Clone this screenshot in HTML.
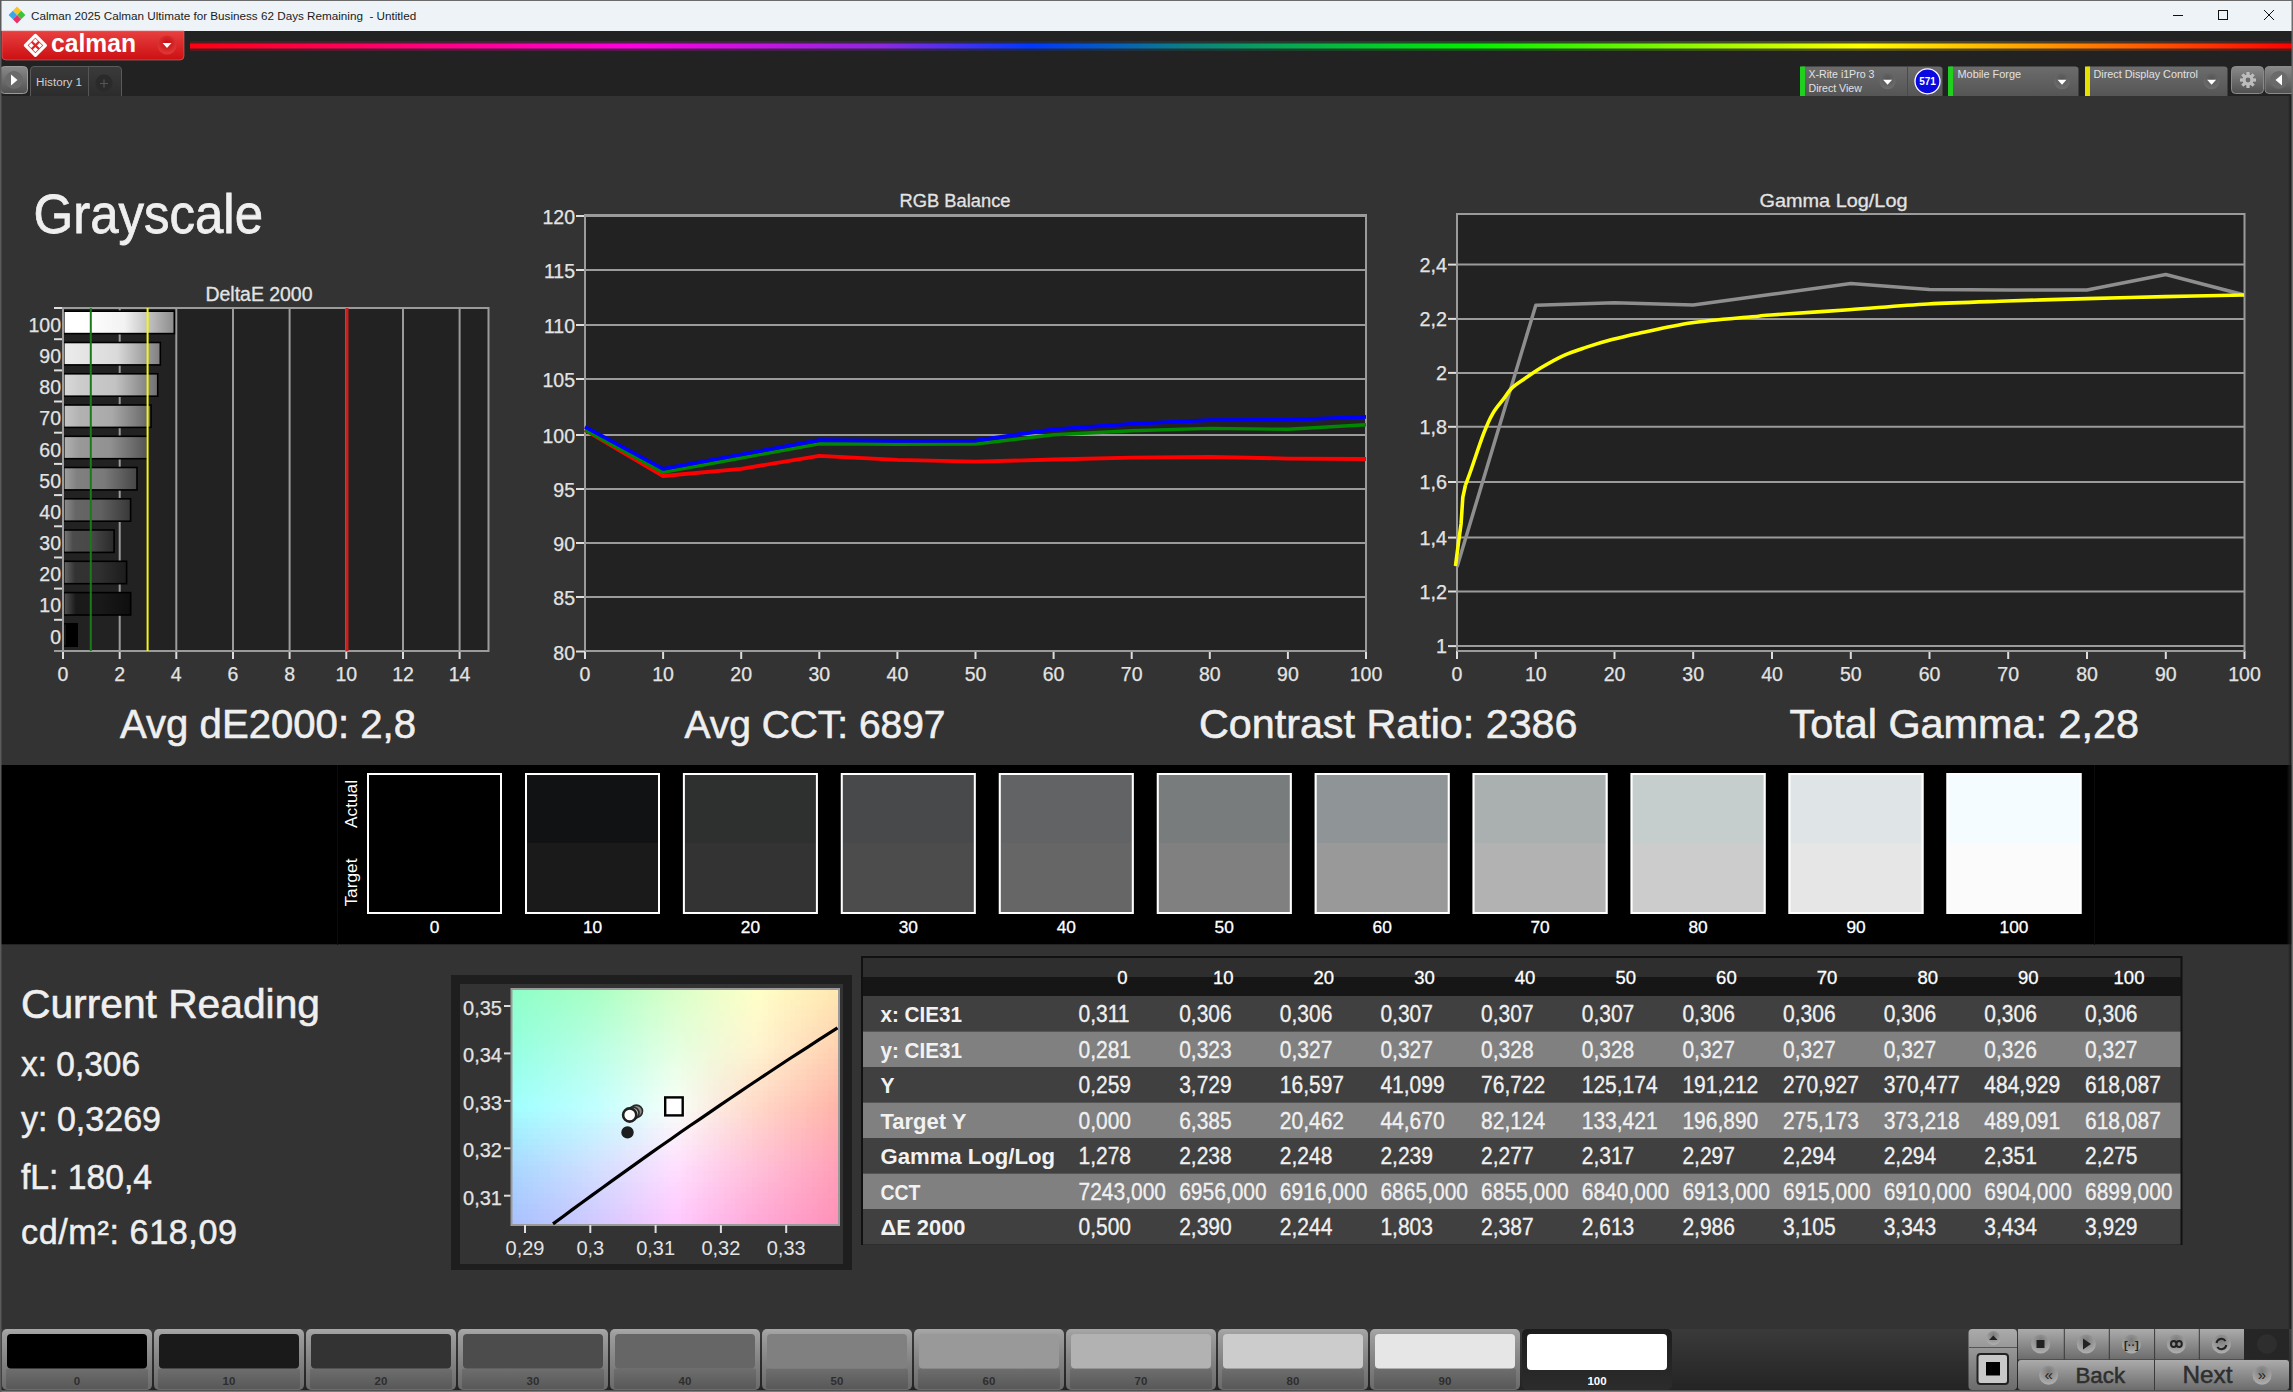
<!DOCTYPE html>
<html><head><meta charset="utf-8"><title>Calman Grayscale</title><style>html,body{margin:0;padding:0;background:#333;}body{width:2293px;height:1392px;overflow:hidden;}svg{display:block;font-family:"Liberation Sans",sans-serif;}</style></head><body><svg width="2293" height="1392" viewBox="0 0 2293 1392"><defs><linearGradient id="gRed" x1="0" y1="0" x2="0" y2="1"><stop offset="0" stop-color="#e8403f"/><stop offset="1" stop-color="#cc0f12"/></linearGradient><radialGradient id="gDrop" cx="0.5" cy="0.4" r="0.6"><stop offset="0" stop-color="#c40c10"/><stop offset="1" stop-color="#e03a3a"/></radialGradient><linearGradient id="gRainbow" gradientUnits="userSpaceOnUse" x1="190" y1="0" x2="2292" y2="0"><stop offset="0" stop-color="#ff0010"/><stop offset="0.21" stop-color="#ff00e0"/><stop offset="0.33" stop-color="#8c28e0"/><stop offset="0.40" stop-color="#0038ff"/><stop offset="0.475" stop-color="#0c8080"/><stop offset="0.61" stop-color="#00f000"/><stop offset="0.795" stop-color="#ffff00"/><stop offset="0.88" stop-color="#ff9a00"/><stop offset="1" stop-color="#ff0000"/></linearGradient><linearGradient id="gBtn" x1="0" y1="0" x2="0" y2="1"><stop offset="0" stop-color="#8a8a8a"/><stop offset="1" stop-color="#505050"/></linearGradient><linearGradient id="gTab" x1="0" y1="0" x2="0" y2="1"><stop offset="0" stop-color="#3a3a3a"/><stop offset="1" stop-color="#2c2c2c"/></linearGradient><linearGradient id="gWid" x1="0" y1="0" x2="0" y2="1"><stop offset="0" stop-color="#6c6c6c"/><stop offset="1" stop-color="#555555"/></linearGradient><radialGradient id="gDD" cx="0.5" cy="0.35" r="0.65"><stop offset="0" stop-color="#555"/><stop offset="1" stop-color="#6e6e6e"/></radialGradient><linearGradient id="gBar100" x1="0" y1="0" x2="1" y2="0"><stop offset="0" stop-color="rgb(255,255,255)"/><stop offset="0.18" stop-color="rgb(255,255,255)"/><stop offset="0.55" stop-color="rgb(242,242,242)"/><stop offset="1" stop-color="rgb(140,140,140)"/></linearGradient><linearGradient id="gBar90" x1="0" y1="0" x2="1" y2="0"><stop offset="0" stop-color="rgb(236,236,236)"/><stop offset="0.18" stop-color="rgb(230,230,230)"/><stop offset="0.55" stop-color="rgb(218,218,218)"/><stop offset="1" stop-color="rgb(127,127,127)"/></linearGradient><linearGradient id="gBar80" x1="0" y1="0" x2="1" y2="0"><stop offset="0" stop-color="rgb(217,217,217)"/><stop offset="0.18" stop-color="rgb(204,204,204)"/><stop offset="0.55" stop-color="rgb(194,194,194)"/><stop offset="1" stop-color="rgb(112,112,112)"/></linearGradient><linearGradient id="gBar70" x1="0" y1="0" x2="1" y2="0"><stop offset="0" stop-color="rgb(197,197,197)"/><stop offset="0.18" stop-color="rgb(178,178,178)"/><stop offset="0.55" stop-color="rgb(169,169,169)"/><stop offset="1" stop-color="rgb(98,98,98)"/></linearGradient><linearGradient id="gBar60" x1="0" y1="0" x2="1" y2="0"><stop offset="0" stop-color="rgb(178,178,178)"/><stop offset="0.18" stop-color="rgb(153,153,153)"/><stop offset="0.55" stop-color="rgb(145,145,145)"/><stop offset="1" stop-color="rgb(84,84,84)"/></linearGradient><linearGradient id="gBar50" x1="0" y1="0" x2="1" y2="0"><stop offset="0" stop-color="rgb(160,160,160)"/><stop offset="0.18" stop-color="rgb(128,128,128)"/><stop offset="0.55" stop-color="rgb(122,122,122)"/><stop offset="1" stop-color="rgb(70,70,70)"/></linearGradient><linearGradient id="gBar40" x1="0" y1="0" x2="1" y2="0"><stop offset="0" stop-color="rgb(140,140,140)"/><stop offset="0.18" stop-color="rgb(102,102,102)"/><stop offset="0.55" stop-color="rgb(97,97,97)"/><stop offset="1" stop-color="rgb(56,56,56)"/></linearGradient><linearGradient id="gBar30" x1="0" y1="0" x2="1" y2="0"><stop offset="0" stop-color="rgb(121,121,121)"/><stop offset="0.18" stop-color="rgb(76,76,76)"/><stop offset="0.55" stop-color="rgb(72,72,72)"/><stop offset="1" stop-color="rgb(42,42,42)"/></linearGradient><linearGradient id="gBar20" x1="0" y1="0" x2="1" y2="0"><stop offset="0" stop-color="rgb(102,102,102)"/><stop offset="0.18" stop-color="rgb(51,51,51)"/><stop offset="0.55" stop-color="rgb(48,48,48)"/><stop offset="1" stop-color="rgb(28,28,28)"/></linearGradient><linearGradient id="gBar10" x1="0" y1="0" x2="1" y2="0"><stop offset="0" stop-color="rgb(83,83,83)"/><stop offset="0.18" stop-color="rgb(26,26,26)"/><stop offset="0.55" stop-color="rgb(25,25,25)"/><stop offset="1" stop-color="rgb(14,14,14)"/></linearGradient><linearGradient id="gBar0" x1="0" y1="0" x2="1" y2="0"><stop offset="0" stop-color="rgb(64,64,64)"/><stop offset="0.18" stop-color="rgb(0,0,0)"/><stop offset="0.55" stop-color="rgb(0,0,0)"/><stop offset="1" stop-color="rgb(0,0,0)"/></linearGradient><linearGradient id="gStrip" x1="0" y1="0" x2="0" y2="1"><stop offset="0" stop-color="#3a3a3a"/><stop offset="1" stop-color="#232323"/></linearGradient><linearGradient id="gPB" x1="0" y1="0" x2="0" y2="1"><stop offset="0" stop-color="#a8a8a8"/><stop offset="0.1" stop-color="#9c9c9c"/><stop offset="0.62" stop-color="#7e7e7e"/><stop offset="1" stop-color="#6a6a6a"/></linearGradient><linearGradient id="gPBL" x1="0" y1="0" x2="0" y2="1"><stop offset="0" stop-color="#6e6e6e"/><stop offset="1" stop-color="#585858"/></linearGradient><linearGradient id="gPBsel" x1="0" y1="0" x2="0" y2="1"><stop offset="0" stop-color="#1c1c1c"/><stop offset="1" stop-color="#2c2c2c"/></linearGradient><linearGradient id="gCtl" x1="0" y1="0" x2="0" y2="1"><stop offset="0" stop-color="#ababab"/><stop offset="1" stop-color="#6c6c6c"/></linearGradient><radialGradient id="gCirc" cx="0.5" cy="0.3" r="0.7"><stop offset="0" stop-color="#7a7a7a"/><stop offset="1" stop-color="#b0b0b0"/></radialGradient><linearGradient id="gRF" x1="0" y1="0" x2="1" y2="0"><stop offset="0" stop-color="#333" stop-opacity="0"/><stop offset="1" stop-color="#111"/></linearGradient></defs><rect x="0" y="0" width="2293" height="31" fill="#eef3f7"/>
<rect x="0" y="0" width="2293" height="1" fill="#6b6b6b"/>
<path d="M17.0 6.6000000000000005 L21.2 10.8 L17.0 15.0 L12.8 10.8 Z" fill="#f7c52b"/>
<path d="M21.2 10.8 L25.4 15.0 L21.2 19.2 L17.0 15.0 Z" fill="#3ec43a"/>
<path d="M12.8 10.8 L17.0 15.0 L12.8 19.2 L8.600000000000001 15.0 Z" fill="#3aa6e8"/>
<path d="M17.0 15.0 L21.2 19.2 L17.0 23.4 L12.8 19.2 Z" fill="#e8306a"/>
<text x="31.0" y="19.6" font-size="11.7" fill="#1b1b1b" text-anchor="start" font-weight="400" >Calman 2025 Calman Ultimate for Business 62 Days Remaining&#160;&#160;- Untitled</text>
<line x1="2173" y1="15.5" x2="2183" y2="15.5" stroke="#111" stroke-width="1"/>
<rect x="2218.5" y="10.5" width="9" height="9" fill="none" stroke="#111" stroke-width="1"/>
<path d="M2264 10 L2274 20 M2274 10 L2264 20" stroke="#111" stroke-width="1"/>
<rect x="0" y="31" width="2293" height="65" fill="#222222"/>
<path d="M2 31 H184 V56 Q184 60 180 60 H6 Q2 60 2 56 Z" fill="url(#gRed)" stroke="#e86a6a" stroke-width="0.6"/>
<path d="M35.4 35.4 L45.4 45.4 L35.4 55.4 L25.4 45.4 Z" fill="none" stroke="#fff" stroke-width="3.2" stroke-linejoin="round"/>
<path d="M35.4 38.599999999999994 L38.0 41.199999999999996 L35.4 43.8 L32.8 41.199999999999996 Z" fill="#fff"/>
<path d="M31.2 42.8 L33.8 45.4 L31.2 48.0 L28.599999999999998 45.4 Z" fill="#fff"/>
<path d="M39.6 42.8 L42.2 45.4 L39.6 48.0 L37.0 45.4 Z" fill="#fff"/>
<path d="M35.4 47.0 L38.0 49.6 L35.4 52.2 L32.8 49.6 Z" fill="#fff"/>
<text x="51.0" y="51.7" font-size="25" fill="#ffffff" text-anchor="start" font-weight="700" textLength="85" lengthAdjust="spacingAndGlyphs">calman</text>
<circle cx="167" cy="45" r="9.5" fill="url(#gDrop)"/>
<path d="M162.5 43 L171.5 43 L167 48 Z" fill="#fff"/>
<rect x="190" y="41" width="2102" height="10" fill="url(#gRainbow)" opacity="0.22"/>
<rect x="190" y="43.5" width="2102" height="5" fill="url(#gRainbow)"/>
<rect x="0.5" y="66.5" width="27" height="27" rx="4" fill="url(#gBtn)" stroke="#9a9a9a" stroke-width="1"/>
<circle cx="14" cy="80" r="9" fill="#6a6a6a"/>
<path d="M11 74.5 L17.5 80 L11 85.5 Z" fill="#fff"/>
<path d="M30.5 96 V70 Q30.5 66.5 34 66.5 H118 Q121.5 66.5 121.5 70 V96" fill="url(#gTab)" stroke="#5a5a5a" stroke-width="1"/>
<line x1="88.5" y1="67" x2="88.5" y2="96" stroke="#555" stroke-width="1"/>
<text x="36.0" y="86.0" font-size="11.7" fill="#cfcfcf" text-anchor="start" font-weight="400" >History 1</text>
<circle cx="104" cy="83" r="8.5" fill="#2a2a2a"/>
<path d="M100 83.5 H108 M104 79.5 V87.5" stroke="#555" stroke-width="1.2"/>
<path d="M1800 96 V69 Q1800 66.5 1803 66.5 H1939 Q1942.5 66.5 1942.5 69 V96 Z" fill="url(#gWid)"/>
<rect x="1800" y="66.5" width="5" height="29.5" fill="#1fd01f"/>
<line x1="1907.5" y1="67" x2="1907.5" y2="96" stroke="#4a4a4a" stroke-width="1"/>
<text x="1808.5" y="78.0" font-size="10.6" fill="#e2e2e2" text-anchor="start" font-weight="400" >X-Rite i1Pro 3</text>
<text x="1808.5" y="92.3" font-size="10.6" fill="#e2e2e2" text-anchor="start" font-weight="400" >Direct View</text>
<circle cx="1887.6" cy="81.3" r="8" fill="url(#gDD)"/><path d="M1883.1 79.8 L1892.1 79.8 L1887.6 84.8 Z" fill="#fff"/>
<circle cx="1927.5" cy="81.3" r="12.5" fill="#0a0ae0" stroke="#fff" stroke-width="1.3"/>
<text x="1927.5" y="85.0" font-size="10" fill="#fff" text-anchor="middle" font-weight="700" >571</text>
<path d="M1948 96 V69 Q1948 66.5 1951 66.5 H2075 Q2078.5 66.5 2078.5 69 V96 Z" fill="url(#gWid)"/>
<rect x="1948" y="66.5" width="5" height="29.5" fill="#1fd01f"/>
<text x="1957.5" y="78.0" font-size="10.9" fill="#e2e2e2" text-anchor="start" font-weight="400" >Mobile Forge</text>
<circle cx="2062" cy="81.3" r="8" fill="url(#gDD)"/><path d="M2057.5 79.8 L2066.5 79.8 L2062 84.8 Z" fill="#fff"/>
<path d="M2085 96 V69 Q2085 66.5 2088 66.5 H2224 Q2227.5 66.5 2227.5 69 V96 Z" fill="url(#gWid)"/>
<rect x="2085" y="66.5" width="5" height="29.5" fill="#e6e000"/>
<text x="2093.5" y="78.0" font-size="10.8" fill="#e2e2e2" text-anchor="start" font-weight="400" >Direct Display Control</text>
<circle cx="2211.6" cy="81.3" r="8" fill="url(#gDD)"/><path d="M2207.1 79.8 L2216.1 79.8 L2211.6 84.8 Z" fill="#fff"/>
<rect x="2231.5" y="66.5" width="32" height="27" rx="4" fill="url(#gBtn)" stroke="#8a8a8a" stroke-width="1"/>
<g fill="#bdbdbd"><rect x="2246.4" y="72" width="3.2" height="4" transform="rotate(0 2248 80)"/><rect x="2246.4" y="72" width="3.2" height="4" transform="rotate(45 2248 80)"/><rect x="2246.4" y="72" width="3.2" height="4" transform="rotate(90 2248 80)"/><rect x="2246.4" y="72" width="3.2" height="4" transform="rotate(135 2248 80)"/><rect x="2246.4" y="72" width="3.2" height="4" transform="rotate(180 2248 80)"/><rect x="2246.4" y="72" width="3.2" height="4" transform="rotate(225 2248 80)"/><rect x="2246.4" y="72" width="3.2" height="4" transform="rotate(270 2248 80)"/><rect x="2246.4" y="72" width="3.2" height="4" transform="rotate(315 2248 80)"/><circle cx="2248" cy="80" r="5.5"/></g><circle cx="2248" cy="80" r="2.4" fill="#6a6a6a"/>
<rect x="2265" y="66.5" width="30" height="27" rx="4" fill="url(#gBtn)" stroke="#8a8a8a" stroke-width="1"/>
<circle cx="2279" cy="80" r="9" fill="#6a6a6a"/>
<path d="M2282 74.5 L2275.5 80 L2282 85.5 Z" fill="#fff"/>
<rect x="0" y="97" width="2293" height="1232" fill="#333333"/>
<text transform="translate(33.50 232.50) scale(1 1.08)" x="0" y="0" font-size="51" fill="#efefef" text-anchor="start" font-weight="400" stroke="#efefef" stroke-width="0.7" >Grayscale</text>
<text x="205.5" y="300.6" font-size="19.4" fill="#e3e3e3" text-anchor="start" font-weight="400" stroke="#e3e3e3" stroke-width="0.3" textLength="107" lengthAdjust="spacingAndGlyphs">DeltaE 2000</text>
<rect x="63" y="308" width="425.5" height="343" fill="#222222"/>
<line x1="119.7" y1="308" x2="119.7" y2="651" stroke="#9b9b9b" stroke-width="2"/>
<line x1="176.3" y1="308" x2="176.3" y2="651" stroke="#9b9b9b" stroke-width="2"/>
<line x1="233.0" y1="308" x2="233.0" y2="651" stroke="#9b9b9b" stroke-width="2"/>
<line x1="289.6" y1="308" x2="289.6" y2="651" stroke="#9b9b9b" stroke-width="2"/>
<line x1="346.3" y1="308" x2="346.3" y2="651" stroke="#9b9b9b" stroke-width="2"/>
<line x1="403.0" y1="308" x2="403.0" y2="651" stroke="#9b9b9b" stroke-width="2"/>
<line x1="459.6" y1="308" x2="459.6" y2="651" stroke="#9b9b9b" stroke-width="2"/>
<line x1="63.0" y1="651" x2="63.0" y2="659" stroke="#dedede" stroke-width="2"/>
<text x="63.0" y="680.8" font-size="19.5" fill="#e3e3e3" text-anchor="middle" font-weight="400" stroke="#e3e3e3" stroke-width="0.25" >0</text>
<line x1="119.7" y1="651" x2="119.7" y2="659" stroke="#dedede" stroke-width="2"/>
<text x="119.7" y="680.8" font-size="19.5" fill="#e3e3e3" text-anchor="middle" font-weight="400" stroke="#e3e3e3" stroke-width="0.25" >2</text>
<line x1="176.3" y1="651" x2="176.3" y2="659" stroke="#dedede" stroke-width="2"/>
<text x="176.3" y="680.8" font-size="19.5" fill="#e3e3e3" text-anchor="middle" font-weight="400" stroke="#e3e3e3" stroke-width="0.25" >4</text>
<line x1="233.0" y1="651" x2="233.0" y2="659" stroke="#dedede" stroke-width="2"/>
<text x="233.0" y="680.8" font-size="19.5" fill="#e3e3e3" text-anchor="middle" font-weight="400" stroke="#e3e3e3" stroke-width="0.25" >6</text>
<line x1="289.6" y1="651" x2="289.6" y2="659" stroke="#dedede" stroke-width="2"/>
<text x="289.6" y="680.8" font-size="19.5" fill="#e3e3e3" text-anchor="middle" font-weight="400" stroke="#e3e3e3" stroke-width="0.25" >8</text>
<line x1="346.3" y1="651" x2="346.3" y2="659" stroke="#dedede" stroke-width="2"/>
<text x="346.3" y="680.8" font-size="19.5" fill="#e3e3e3" text-anchor="middle" font-weight="400" stroke="#e3e3e3" stroke-width="0.25" >10</text>
<line x1="403.0" y1="651" x2="403.0" y2="659" stroke="#dedede" stroke-width="2"/>
<text x="403.0" y="680.8" font-size="19.5" fill="#e3e3e3" text-anchor="middle" font-weight="400" stroke="#e3e3e3" stroke-width="0.25" >12</text>
<line x1="459.6" y1="651" x2="459.6" y2="659" stroke="#dedede" stroke-width="2"/>
<text x="459.6" y="680.8" font-size="19.5" fill="#e3e3e3" text-anchor="middle" font-weight="400" stroke="#e3e3e3" stroke-width="0.25" >14</text>
<line x1="54" y1="308.0" x2="63" y2="308.0" stroke="#dedede" stroke-width="2"/>
<line x1="54" y1="339.2" x2="63" y2="339.2" stroke="#dedede" stroke-width="2"/>
<line x1="54" y1="370.4" x2="63" y2="370.4" stroke="#dedede" stroke-width="2"/>
<line x1="54" y1="401.5" x2="63" y2="401.5" stroke="#dedede" stroke-width="2"/>
<line x1="54" y1="432.7" x2="63" y2="432.7" stroke="#dedede" stroke-width="2"/>
<line x1="54" y1="463.9" x2="63" y2="463.9" stroke="#dedede" stroke-width="2"/>
<line x1="54" y1="495.1" x2="63" y2="495.1" stroke="#dedede" stroke-width="2"/>
<line x1="54" y1="526.3" x2="63" y2="526.3" stroke="#dedede" stroke-width="2"/>
<line x1="54" y1="557.5" x2="63" y2="557.5" stroke="#dedede" stroke-width="2"/>
<line x1="54" y1="588.6" x2="63" y2="588.6" stroke="#dedede" stroke-width="2"/>
<line x1="54" y1="619.8" x2="63" y2="619.8" stroke="#dedede" stroke-width="2"/>
<line x1="54" y1="651.0" x2="63" y2="651.0" stroke="#dedede" stroke-width="2"/>
<text x="61.0" y="331.8" font-size="19.5" fill="#e3e3e3" text-anchor="end" font-weight="400" stroke="#e3e3e3" stroke-width="0.25" >100</text>
<rect x="63.8" y="311.2" width="110.5" height="22.4" fill="url(#gBar100)" stroke="#000" stroke-width="1.6"/>
<text x="61.0" y="363.0" font-size="19.5" fill="#e3e3e3" text-anchor="end" font-weight="400" stroke="#e3e3e3" stroke-width="0.25" >90</text>
<rect x="63.8" y="342.5" width="96.5" height="22.4" fill="url(#gBar90)" stroke="#000" stroke-width="1.6"/>
<text x="61.0" y="394.2" font-size="19.5" fill="#e3e3e3" text-anchor="end" font-weight="400" stroke="#e3e3e3" stroke-width="0.25" >80</text>
<rect x="63.8" y="373.8" width="93.9" height="22.4" fill="url(#gBar80)" stroke="#000" stroke-width="1.6"/>
<text x="61.0" y="425.3" font-size="19.5" fill="#e3e3e3" text-anchor="end" font-weight="400" stroke="#e3e3e3" stroke-width="0.25" >70</text>
<rect x="63.8" y="405.0" width="87.2" height="22.4" fill="url(#gBar70)" stroke="#000" stroke-width="1.6"/>
<text x="61.0" y="456.5" font-size="19.5" fill="#e3e3e3" text-anchor="end" font-weight="400" stroke="#e3e3e3" stroke-width="0.25" >60</text>
<rect x="63.8" y="436.3" width="83.8" height="22.4" fill="url(#gBar60)" stroke="#000" stroke-width="1.6"/>
<text x="61.0" y="487.7" font-size="19.5" fill="#e3e3e3" text-anchor="end" font-weight="400" stroke="#e3e3e3" stroke-width="0.25" >50</text>
<rect x="63.8" y="467.5" width="73.2" height="22.4" fill="url(#gBar50)" stroke="#000" stroke-width="1.6"/>
<text x="61.0" y="518.9" font-size="19.5" fill="#e3e3e3" text-anchor="end" font-weight="400" stroke="#e3e3e3" stroke-width="0.25" >40</text>
<rect x="63.8" y="498.8" width="66.8" height="22.4" fill="url(#gBar40)" stroke="#000" stroke-width="1.6"/>
<text x="61.0" y="550.1" font-size="19.5" fill="#e3e3e3" text-anchor="end" font-weight="400" stroke="#e3e3e3" stroke-width="0.25" >30</text>
<rect x="63.8" y="530.0" width="50.3" height="22.4" fill="url(#gBar30)" stroke="#000" stroke-width="1.6"/>
<text x="61.0" y="581.2" font-size="19.5" fill="#e3e3e3" text-anchor="end" font-weight="400" stroke="#e3e3e3" stroke-width="0.25" >20</text>
<rect x="63.8" y="561.3" width="62.8" height="22.4" fill="url(#gBar20)" stroke="#000" stroke-width="1.6"/>
<text x="61.0" y="612.4" font-size="19.5" fill="#e3e3e3" text-anchor="end" font-weight="400" stroke="#e3e3e3" stroke-width="0.25" >10</text>
<rect x="63.8" y="592.6" width="66.9" height="22.4" fill="url(#gBar10)" stroke="#000" stroke-width="1.6"/>
<text x="61.0" y="643.6" font-size="19.5" fill="#e3e3e3" text-anchor="end" font-weight="400" stroke="#e3e3e3" stroke-width="0.25" >0</text>
<rect x="63.8" y="623.8" width="13.4" height="22.4" fill="url(#gBar0)" stroke="#000" stroke-width="1.6"/>
<path d="M63 651 V308 H488.5 V651 H54" fill="none" stroke="#9b9b9b" stroke-width="2"/>
<line x1="90.8" y1="308" x2="90.8" y2="651" stroke="#1a7a1a" stroke-width="2"/>
<line x1="147.6" y1="308" x2="147.6" y2="651" stroke="#f4f41c" stroke-width="2"/>
<line x1="347" y1="308" x2="347" y2="651" stroke="#cc1f1f" stroke-width="3"/>
<text x="899.5" y="206.8" font-size="18.7" fill="#e3e3e3" text-anchor="start" font-weight="400" stroke="#e3e3e3" stroke-width="0.3" textLength="111" lengthAdjust="spacingAndGlyphs">RGB Balance</text>
<rect x="585" y="215" width="781" height="436" fill="#222222"/>
<line x1="585" y1="597.0" x2="1366" y2="597.0" stroke="#9b9b9b" stroke-width="2"/>
<line x1="585" y1="543.0" x2="1366" y2="543.0" stroke="#9b9b9b" stroke-width="2"/>
<line x1="585" y1="489.0" x2="1366" y2="489.0" stroke="#9b9b9b" stroke-width="2"/>
<line x1="585" y1="435.0" x2="1366" y2="435.0" stroke="#9b9b9b" stroke-width="2"/>
<line x1="585" y1="379.0" x2="1366" y2="379.0" stroke="#9b9b9b" stroke-width="2"/>
<line x1="585" y1="325.0" x2="1366" y2="325.0" stroke="#9b9b9b" stroke-width="2"/>
<line x1="585" y1="270.0" x2="1366" y2="270.0" stroke="#9b9b9b" stroke-width="2"/>
<line x1="585" y1="216.0" x2="1366" y2="216.0" stroke="#9b9b9b" stroke-width="2"/>
<line x1="576" y1="651.5" x2="585" y2="651.5" stroke="#dedede" stroke-width="2"/>
<text x="575.0" y="659.5" font-size="19.5" fill="#e3e3e3" text-anchor="end" font-weight="400" stroke="#e3e3e3" stroke-width="0.25" >80</text>
<line x1="576" y1="597.0" x2="585" y2="597.0" stroke="#dedede" stroke-width="2"/>
<text x="575.0" y="605.0" font-size="19.5" fill="#e3e3e3" text-anchor="end" font-weight="400" stroke="#e3e3e3" stroke-width="0.25" >85</text>
<line x1="576" y1="543.0" x2="585" y2="543.0" stroke="#dedede" stroke-width="2"/>
<text x="575.0" y="551.0" font-size="19.5" fill="#e3e3e3" text-anchor="end" font-weight="400" stroke="#e3e3e3" stroke-width="0.25" >90</text>
<line x1="576" y1="489.0" x2="585" y2="489.0" stroke="#dedede" stroke-width="2"/>
<text x="575.0" y="497.0" font-size="19.5" fill="#e3e3e3" text-anchor="end" font-weight="400" stroke="#e3e3e3" stroke-width="0.25" >95</text>
<line x1="576" y1="435.0" x2="585" y2="435.0" stroke="#dedede" stroke-width="2"/>
<text x="575.0" y="443.0" font-size="19.5" fill="#e3e3e3" text-anchor="end" font-weight="400" stroke="#e3e3e3" stroke-width="0.25" >100</text>
<line x1="576" y1="379.0" x2="585" y2="379.0" stroke="#dedede" stroke-width="2"/>
<text x="575.0" y="387.0" font-size="19.5" fill="#e3e3e3" text-anchor="end" font-weight="400" stroke="#e3e3e3" stroke-width="0.25" >105</text>
<line x1="576" y1="325.0" x2="585" y2="325.0" stroke="#dedede" stroke-width="2"/>
<text x="575.0" y="333.0" font-size="19.5" fill="#e3e3e3" text-anchor="end" font-weight="400" stroke="#e3e3e3" stroke-width="0.25" >110</text>
<line x1="576" y1="270.0" x2="585" y2="270.0" stroke="#dedede" stroke-width="2"/>
<text x="575.0" y="278.0" font-size="19.5" fill="#e3e3e3" text-anchor="end" font-weight="400" stroke="#e3e3e3" stroke-width="0.25" >115</text>
<line x1="576" y1="216.0" x2="585" y2="216.0" stroke="#dedede" stroke-width="2"/>
<text x="575.0" y="224.0" font-size="19.5" fill="#e3e3e3" text-anchor="end" font-weight="400" stroke="#e3e3e3" stroke-width="0.25" >120</text>
<line x1="585.0" y1="651" x2="585.0" y2="659" stroke="#dedede" stroke-width="2"/>
<text x="585.0" y="680.8" font-size="19.5" fill="#e3e3e3" text-anchor="middle" font-weight="400" stroke="#e3e3e3" stroke-width="0.25" >0</text>
<line x1="663.1" y1="651" x2="663.1" y2="659" stroke="#dedede" stroke-width="2"/>
<text x="663.1" y="680.8" font-size="19.5" fill="#e3e3e3" text-anchor="middle" font-weight="400" stroke="#e3e3e3" stroke-width="0.25" >10</text>
<line x1="741.2" y1="651" x2="741.2" y2="659" stroke="#dedede" stroke-width="2"/>
<text x="741.2" y="680.8" font-size="19.5" fill="#e3e3e3" text-anchor="middle" font-weight="400" stroke="#e3e3e3" stroke-width="0.25" >20</text>
<line x1="819.3" y1="651" x2="819.3" y2="659" stroke="#dedede" stroke-width="2"/>
<text x="819.3" y="680.8" font-size="19.5" fill="#e3e3e3" text-anchor="middle" font-weight="400" stroke="#e3e3e3" stroke-width="0.25" >30</text>
<line x1="897.4" y1="651" x2="897.4" y2="659" stroke="#dedede" stroke-width="2"/>
<text x="897.4" y="680.8" font-size="19.5" fill="#e3e3e3" text-anchor="middle" font-weight="400" stroke="#e3e3e3" stroke-width="0.25" >40</text>
<line x1="975.5" y1="651" x2="975.5" y2="659" stroke="#dedede" stroke-width="2"/>
<text x="975.5" y="680.8" font-size="19.5" fill="#e3e3e3" text-anchor="middle" font-weight="400" stroke="#e3e3e3" stroke-width="0.25" >50</text>
<line x1="1053.6" y1="651" x2="1053.6" y2="659" stroke="#dedede" stroke-width="2"/>
<text x="1053.6" y="680.8" font-size="19.5" fill="#e3e3e3" text-anchor="middle" font-weight="400" stroke="#e3e3e3" stroke-width="0.25" >60</text>
<line x1="1131.7" y1="651" x2="1131.7" y2="659" stroke="#dedede" stroke-width="2"/>
<text x="1131.7" y="680.8" font-size="19.5" fill="#e3e3e3" text-anchor="middle" font-weight="400" stroke="#e3e3e3" stroke-width="0.25" >70</text>
<line x1="1209.8" y1="651" x2="1209.8" y2="659" stroke="#dedede" stroke-width="2"/>
<text x="1209.8" y="680.8" font-size="19.5" fill="#e3e3e3" text-anchor="middle" font-weight="400" stroke="#e3e3e3" stroke-width="0.25" >80</text>
<line x1="1287.9" y1="651" x2="1287.9" y2="659" stroke="#dedede" stroke-width="2"/>
<text x="1287.9" y="680.8" font-size="19.5" fill="#e3e3e3" text-anchor="middle" font-weight="400" stroke="#e3e3e3" stroke-width="0.25" >90</text>
<line x1="1366.0" y1="651" x2="1366.0" y2="659" stroke="#dedede" stroke-width="2"/>
<text x="1366.0" y="680.8" font-size="19.5" fill="#e3e3e3" text-anchor="middle" font-weight="400" stroke="#e3e3e3" stroke-width="0.25" >100</text>
<path d="M585 651 V215 H1366 V651 H585" fill="none" stroke="#9b9b9b" stroke-width="2"/>
<polyline points="585.0,430.0 663.1,476.0 741.2,468.8 819.3,455.8 897.4,459.9 975.5,461.7 1053.6,459.5 1131.7,457.7 1209.8,456.8 1287.9,458.6 1366.0,459.0" fill="none" stroke="#ff0000" stroke-width="3.8" stroke-linejoin="round"/>
<polyline points="585.0,430.0 663.1,472.4 741.2,458.0 819.3,443.8 897.4,444.3 975.5,444.0 1053.6,434.8 1131.7,430.8 1209.8,428.4 1287.9,429.3 1366.0,424.7" fill="none" stroke="#008800" stroke-width="3.4" stroke-linejoin="round"/>
<polyline points="585.0,426.8 663.1,468.8 741.2,454.5 819.3,440.2 897.4,440.8 975.5,440.7 1053.6,429.3 1131.7,423.8 1209.8,420.1 1287.9,419.8 1366.0,416.8" fill="none" stroke="#0000ff" stroke-width="3.8" stroke-linejoin="round"/>
<text x="1759.5" y="206.8" font-size="19" fill="#e3e3e3" text-anchor="start" font-weight="400" stroke="#e3e3e3" stroke-width="0.3" textLength="148" lengthAdjust="spacingAndGlyphs">Gamma Log/Log</text>
<rect x="1457" y="214" width="787.5" height="437" fill="#222222"/>
<line x1="1457" y1="646.1" x2="2244.5" y2="646.1" stroke="#9b9b9b" stroke-width="2"/>
<line x1="1448" y1="646.1" x2="1457" y2="646.1" stroke="#dedede" stroke-width="2"/>
<text x="1447.0" y="653.1" font-size="19.8" fill="#e3e3e3" text-anchor="end" font-weight="400" stroke="#e3e3e3" stroke-width="0.25" >1</text>
<line x1="1457" y1="591.5" x2="2244.5" y2="591.5" stroke="#9b9b9b" stroke-width="2"/>
<line x1="1448" y1="591.5" x2="1457" y2="591.5" stroke="#dedede" stroke-width="2"/>
<text x="1447.0" y="598.5" font-size="19.8" fill="#e3e3e3" text-anchor="end" font-weight="400" stroke="#e3e3e3" stroke-width="0.25" >1,2</text>
<line x1="1457" y1="537.6" x2="2244.5" y2="537.6" stroke="#9b9b9b" stroke-width="2"/>
<line x1="1448" y1="537.6" x2="1457" y2="537.6" stroke="#dedede" stroke-width="2"/>
<text x="1447.0" y="544.6" font-size="19.8" fill="#e3e3e3" text-anchor="end" font-weight="400" stroke="#e3e3e3" stroke-width="0.25" >1,4</text>
<line x1="1457" y1="482.0" x2="2244.5" y2="482.0" stroke="#9b9b9b" stroke-width="2"/>
<line x1="1448" y1="482.0" x2="1457" y2="482.0" stroke="#dedede" stroke-width="2"/>
<text x="1447.0" y="489.0" font-size="19.8" fill="#e3e3e3" text-anchor="end" font-weight="400" stroke="#e3e3e3" stroke-width="0.25" >1,6</text>
<line x1="1457" y1="426.8" x2="2244.5" y2="426.8" stroke="#9b9b9b" stroke-width="2"/>
<line x1="1448" y1="426.8" x2="1457" y2="426.8" stroke="#dedede" stroke-width="2"/>
<text x="1447.0" y="433.8" font-size="19.8" fill="#e3e3e3" text-anchor="end" font-weight="400" stroke="#e3e3e3" stroke-width="0.25" >1,8</text>
<line x1="1457" y1="372.9" x2="2244.5" y2="372.9" stroke="#9b9b9b" stroke-width="2"/>
<line x1="1448" y1="372.9" x2="1457" y2="372.9" stroke="#dedede" stroke-width="2"/>
<text x="1447.0" y="379.9" font-size="19.8" fill="#e3e3e3" text-anchor="end" font-weight="400" stroke="#e3e3e3" stroke-width="0.25" >2</text>
<line x1="1457" y1="318.9" x2="2244.5" y2="318.9" stroke="#9b9b9b" stroke-width="2"/>
<line x1="1448" y1="318.9" x2="1457" y2="318.9" stroke="#dedede" stroke-width="2"/>
<text x="1447.0" y="325.9" font-size="19.8" fill="#e3e3e3" text-anchor="end" font-weight="400" stroke="#e3e3e3" stroke-width="0.25" >2,2</text>
<line x1="1457" y1="264.6" x2="2244.5" y2="264.6" stroke="#9b9b9b" stroke-width="2"/>
<line x1="1448" y1="264.6" x2="1457" y2="264.6" stroke="#dedede" stroke-width="2"/>
<text x="1447.0" y="271.6" font-size="19.8" fill="#e3e3e3" text-anchor="end" font-weight="400" stroke="#e3e3e3" stroke-width="0.25" >2,4</text>
<line x1="1457.0" y1="651" x2="1457.0" y2="659" stroke="#dedede" stroke-width="2"/>
<text x="1457.0" y="680.8" font-size="19.5" fill="#e3e3e3" text-anchor="middle" font-weight="400" stroke="#e3e3e3" stroke-width="0.25" >0</text>
<line x1="1535.8" y1="651" x2="1535.8" y2="659" stroke="#dedede" stroke-width="2"/>
<text x="1535.8" y="680.8" font-size="19.5" fill="#e3e3e3" text-anchor="middle" font-weight="400" stroke="#e3e3e3" stroke-width="0.25" >10</text>
<line x1="1614.5" y1="651" x2="1614.5" y2="659" stroke="#dedede" stroke-width="2"/>
<text x="1614.5" y="680.8" font-size="19.5" fill="#e3e3e3" text-anchor="middle" font-weight="400" stroke="#e3e3e3" stroke-width="0.25" >20</text>
<line x1="1693.2" y1="651" x2="1693.2" y2="659" stroke="#dedede" stroke-width="2"/>
<text x="1693.2" y="680.8" font-size="19.5" fill="#e3e3e3" text-anchor="middle" font-weight="400" stroke="#e3e3e3" stroke-width="0.25" >30</text>
<line x1="1772.0" y1="651" x2="1772.0" y2="659" stroke="#dedede" stroke-width="2"/>
<text x="1772.0" y="680.8" font-size="19.5" fill="#e3e3e3" text-anchor="middle" font-weight="400" stroke="#e3e3e3" stroke-width="0.25" >40</text>
<line x1="1850.8" y1="651" x2="1850.8" y2="659" stroke="#dedede" stroke-width="2"/>
<text x="1850.8" y="680.8" font-size="19.5" fill="#e3e3e3" text-anchor="middle" font-weight="400" stroke="#e3e3e3" stroke-width="0.25" >50</text>
<line x1="1929.5" y1="651" x2="1929.5" y2="659" stroke="#dedede" stroke-width="2"/>
<text x="1929.5" y="680.8" font-size="19.5" fill="#e3e3e3" text-anchor="middle" font-weight="400" stroke="#e3e3e3" stroke-width="0.25" >60</text>
<line x1="2008.2" y1="651" x2="2008.2" y2="659" stroke="#dedede" stroke-width="2"/>
<text x="2008.2" y="680.8" font-size="19.5" fill="#e3e3e3" text-anchor="middle" font-weight="400" stroke="#e3e3e3" stroke-width="0.25" >70</text>
<line x1="2087.0" y1="651" x2="2087.0" y2="659" stroke="#dedede" stroke-width="2"/>
<text x="2087.0" y="680.8" font-size="19.5" fill="#e3e3e3" text-anchor="middle" font-weight="400" stroke="#e3e3e3" stroke-width="0.25" >80</text>
<line x1="2165.8" y1="651" x2="2165.8" y2="659" stroke="#dedede" stroke-width="2"/>
<text x="2165.8" y="680.8" font-size="19.5" fill="#e3e3e3" text-anchor="middle" font-weight="400" stroke="#e3e3e3" stroke-width="0.25" >90</text>
<line x1="2244.5" y1="651" x2="2244.5" y2="659" stroke="#dedede" stroke-width="2"/>
<text x="2244.5" y="680.8" font-size="19.5" fill="#e3e3e3" text-anchor="middle" font-weight="400" stroke="#e3e3e3" stroke-width="0.25" >100</text>
<path d="M1457 651 V214 H2244.5 V651 H1457" fill="none" stroke="#9b9b9b" stroke-width="2"/>
<polyline points="1457.0,566.9 1535.8,305.2 1614.5,302.8 1693.2,305.0 1772.0,294.3 1850.8,283.6 1929.5,289.5 2008.2,290.0 2087.0,290.0 2165.8,274.5 2244.5,295.0" fill="none" stroke="#8e8e8e" stroke-width="3.5" stroke-linejoin="round"/>
<path d="M1455.5 566 L1458.7 541 L1461.1 523.4 L1462.8 497.3 L1465.5 485" fill="none" stroke="#ffff00" stroke-width="3.6" stroke-linejoin="round"/>
<path d="M1465.50 485.00 C1466.42 482.50 1468.00 478.52 1471.00 470.00 C1474.00 461.48 1479.90 443.27 1483.50 433.90 C1487.10 424.53 1489.15 419.75 1492.60 413.80 C1496.05 407.85 1500.93 402.57 1504.20 398.20 C1507.47 393.83 1508.52 391.03 1512.20 387.60 C1515.88 384.17 1521.43 380.95 1526.30 377.60 C1531.17 374.25 1535.12 371.22 1541.40 367.50 C1547.68 363.78 1556.60 358.65 1564.00 355.30 C1571.40 351.95 1577.80 350.02 1585.80 347.40 C1593.80 344.78 1603.27 341.92 1612.00 339.60 C1620.73 337.28 1624.87 336.30 1638.20 333.50 C1651.53 330.70 1673.03 325.58 1692.00 322.80 C1710.97 320.02 1738.83 318.10 1752.00 316.80 C1765.17 315.50 1754.83 316.18 1771.00 315.00 C1787.17 313.82 1822.83 311.53 1849.00 309.70 C1875.17 307.87 1901.67 305.45 1928.00 304.00 C1954.33 302.55 1980.50 301.90 2007.00 301.00 C2033.50 300.10 2060.67 299.33 2087.00 298.60 C2113.33 297.87 2138.83 297.20 2165.00 296.60 C2191.17 296.00 2230.83 295.27 2244.00 295.00" fill="none" stroke="#ffff00" stroke-width="3.6" stroke-linejoin="round"/>
<text x="120.0" y="737.6" font-size="40.1" fill="#efefef" text-anchor="start" font-weight="400" stroke="#efefef" stroke-width="0.6" textLength="296" lengthAdjust="spacingAndGlyphs">Avg dE2000: 2,8</text>
<text x="684.5" y="737.6" font-size="39.2" fill="#efefef" text-anchor="start" font-weight="400" stroke="#efefef" stroke-width="0.6" textLength="261" lengthAdjust="spacingAndGlyphs">Avg CCT: 6897</text>
<text x="1199.0" y="737.6" font-size="41.2" fill="#efefef" text-anchor="start" font-weight="400" stroke="#efefef" stroke-width="0.6" textLength="378.5" lengthAdjust="spacingAndGlyphs">Contrast Ratio: 2386</text>
<text x="1789.5" y="737.6" font-size="41.3" fill="#efefef" text-anchor="start" font-weight="400" stroke="#efefef" stroke-width="0.6" textLength="349.5" lengthAdjust="spacingAndGlyphs">Total Gamma: 2,28</text>
<rect x="0" y="765" width="2293" height="179.3" fill="#000000"/>
<line x1="337.5" y1="765" x2="337.5" y2="945" stroke="#0c0c0c" stroke-width="1"/>
<line x1="2094.5" y1="765" x2="2094.5" y2="945" stroke="#0c0c0c" stroke-width="1"/>
<rect x="367.0" y="773" width="135" height="70" fill="#000000"/>
<rect x="367.0" y="843" width="135" height="71" fill="rgb(0,0,0)"/>
<rect x="368.0" y="774" width="133" height="139" fill="none" stroke="#ffffff" stroke-width="2"/>
<text x="434.5" y="932.5" font-size="17.3" fill="#ffffff" text-anchor="middle" font-weight="400" stroke="#ffffff" stroke-width="0.3" >0</text>
<rect x="525.0" y="773" width="135" height="70" fill="#111214"/>
<rect x="525.0" y="843" width="135" height="71" fill="rgb(26,26,26)"/>
<rect x="526.0" y="774" width="133" height="139" fill="none" stroke="#ffffff" stroke-width="2"/>
<text x="592.5" y="932.5" font-size="17.3" fill="#ffffff" text-anchor="middle" font-weight="400" stroke="#ffffff" stroke-width="0.3" >10</text>
<rect x="682.9" y="773" width="135" height="70" fill="#2e2f2f"/>
<rect x="682.9" y="843" width="135" height="71" fill="rgb(51,51,51)"/>
<rect x="683.9" y="774" width="133" height="139" fill="none" stroke="#ffffff" stroke-width="2"/>
<text x="750.4" y="932.5" font-size="17.3" fill="#ffffff" text-anchor="middle" font-weight="400" stroke="#ffffff" stroke-width="0.3" >20</text>
<rect x="840.8" y="773" width="135" height="70" fill="#48494b"/>
<rect x="840.8" y="843" width="135" height="71" fill="rgb(76,76,76)"/>
<rect x="841.8" y="774" width="133" height="139" fill="none" stroke="#ffffff" stroke-width="2"/>
<text x="908.3" y="932.5" font-size="17.3" fill="#ffffff" text-anchor="middle" font-weight="400" stroke="#ffffff" stroke-width="0.3" >30</text>
<rect x="998.8" y="773" width="135" height="70" fill="#626364"/>
<rect x="998.8" y="843" width="135" height="71" fill="rgb(102,102,102)"/>
<rect x="999.8" y="774" width="133" height="139" fill="none" stroke="#ffffff" stroke-width="2"/>
<text x="1066.3" y="932.5" font-size="17.3" fill="#ffffff" text-anchor="middle" font-weight="400" stroke="#ffffff" stroke-width="0.3" >40</text>
<rect x="1156.8" y="773" width="135" height="70" fill="#797c7c"/>
<rect x="1156.8" y="843" width="135" height="71" fill="rgb(128,128,128)"/>
<rect x="1157.8" y="774" width="133" height="139" fill="none" stroke="#ffffff" stroke-width="2"/>
<text x="1224.2" y="932.5" font-size="17.3" fill="#ffffff" text-anchor="middle" font-weight="400" stroke="#ffffff" stroke-width="0.3" >50</text>
<rect x="1314.7" y="773" width="135" height="70" fill="#8f9596"/>
<rect x="1314.7" y="843" width="135" height="71" fill="rgb(153,153,153)"/>
<rect x="1315.7" y="774" width="133" height="139" fill="none" stroke="#ffffff" stroke-width="2"/>
<text x="1382.2" y="932.5" font-size="17.3" fill="#ffffff" text-anchor="middle" font-weight="400" stroke="#ffffff" stroke-width="0.3" >60</text>
<rect x="1472.6" y="773" width="135" height="70" fill="#aaafb0"/>
<rect x="1472.6" y="843" width="135" height="71" fill="rgb(178,178,178)"/>
<rect x="1473.6" y="774" width="133" height="139" fill="none" stroke="#ffffff" stroke-width="2"/>
<text x="1540.1" y="932.5" font-size="17.3" fill="#ffffff" text-anchor="middle" font-weight="400" stroke="#ffffff" stroke-width="0.3" >70</text>
<rect x="1630.6" y="773" width="135" height="70" fill="#c6cdcd"/>
<rect x="1630.6" y="843" width="135" height="71" fill="rgb(204,204,204)"/>
<rect x="1631.6" y="774" width="133" height="139" fill="none" stroke="#ffffff" stroke-width="2"/>
<text x="1698.1" y="932.5" font-size="17.3" fill="#ffffff" text-anchor="middle" font-weight="400" stroke="#ffffff" stroke-width="0.3" >80</text>
<rect x="1788.5" y="773" width="135" height="70" fill="#dfe5e6"/>
<rect x="1788.5" y="843" width="135" height="71" fill="rgb(230,230,230)"/>
<rect x="1789.5" y="774" width="133" height="139" fill="none" stroke="#ffffff" stroke-width="2"/>
<text x="1856.0" y="932.5" font-size="17.3" fill="#ffffff" text-anchor="middle" font-weight="400" stroke="#ffffff" stroke-width="0.3" >90</text>
<rect x="1946.5" y="773" width="135" height="70" fill="#f4fcff"/>
<rect x="1946.5" y="843" width="135" height="71" fill="rgb(251,251,251)"/>
<rect x="1947.5" y="774" width="133" height="139" fill="none" stroke="#ffffff" stroke-width="2"/>
<text x="2014.0" y="932.5" font-size="17.3" fill="#ffffff" text-anchor="middle" font-weight="400" stroke="#ffffff" stroke-width="0.3" >100</text>
<text x="0.0" y="0.0" font-size="17.3" fill="#ffffff" text-anchor="middle" font-weight="400" transform="translate(356.5 804) rotate(-90)">Actual</text>
<text x="0.0" y="0.0" font-size="17.3" fill="#ffffff" text-anchor="middle" font-weight="400" transform="translate(356.5 882.5) rotate(-90)">Target</text>
<text x="21.0" y="1017.8" font-size="41.1" fill="#efefef" text-anchor="start" font-weight="400" stroke="#efefef" stroke-width="0.6" textLength="299" lengthAdjust="spacingAndGlyphs">Current Reading</text>
<text x="21.0" y="1075.7" font-size="34.2" fill="#efefef" text-anchor="start" font-weight="400" stroke="#efefef" stroke-width="0.5" textLength="119" lengthAdjust="spacingAndGlyphs">x: 0,306</text>
<text x="21.0" y="1131.3" font-size="34.2" fill="#efefef" text-anchor="start" font-weight="400" stroke="#efefef" stroke-width="0.5" textLength="140" lengthAdjust="spacingAndGlyphs">y: 0,3269</text>
<text x="21.0" y="1188.6" font-size="34.2" fill="#efefef" text-anchor="start" font-weight="400" stroke="#efefef" stroke-width="0.5" textLength="131" lengthAdjust="spacingAndGlyphs">fL: 180,4</text>
<text x="21.0" y="1244.0" font-size="34.2" fill="#efefef" text-anchor="start" font-weight="400" stroke="#efefef" stroke-width="0.5" textLength="216" lengthAdjust="spacing">cd/m²: 618,09</text>
<rect x="451" y="975" width="401" height="295" fill="#1e1e1e"/>
<rect x="460" y="984" width="383" height="280" fill="#333333"/>
<g shape-rendering="crispEdges"><rect x="511.50" y="989.00" width="6.06" height="5.96" fill="#8fffc9"/><rect x="516.96" y="989.00" width="6.06" height="5.96" fill="#91ffc9"/><rect x="522.42" y="989.00" width="6.06" height="5.96" fill="#93ffc8"/><rect x="527.88" y="989.00" width="6.06" height="5.96" fill="#94ffc8"/><rect x="533.33" y="989.00" width="6.06" height="5.96" fill="#96ffc8"/><rect x="538.79" y="989.00" width="6.06" height="5.96" fill="#98ffc8"/><rect x="544.25" y="989.00" width="6.06" height="5.96" fill="#9affc8"/><rect x="549.71" y="989.00" width="6.06" height="5.96" fill="#9cffc7"/><rect x="555.17" y="989.00" width="6.06" height="5.96" fill="#9dffc7"/><rect x="560.62" y="989.00" width="6.06" height="5.96" fill="#9fffc7"/><rect x="566.08" y="989.00" width="6.06" height="5.96" fill="#a1ffc7"/><rect x="571.54" y="989.00" width="6.06" height="5.96" fill="#a3ffc6"/><rect x="577.00" y="989.00" width="6.06" height="5.96" fill="#a4ffc6"/><rect x="582.46" y="989.00" width="6.06" height="5.96" fill="#a6ffc6"/><rect x="587.92" y="989.00" width="6.06" height="5.96" fill="#a8ffc6"/><rect x="593.38" y="989.00" width="6.06" height="5.96" fill="#aaffc6"/><rect x="598.83" y="989.00" width="6.06" height="5.96" fill="#aeffc6"/><rect x="604.29" y="989.00" width="6.06" height="5.96" fill="#b1ffc6"/><rect x="609.75" y="989.00" width="6.06" height="5.96" fill="#b4ffc6"/><rect x="615.21" y="989.00" width="6.06" height="5.96" fill="#b7ffc7"/><rect x="620.67" y="989.00" width="6.06" height="5.96" fill="#baffc7"/><rect x="626.12" y="989.00" width="6.06" height="5.96" fill="#bdffc7"/><rect x="631.58" y="989.00" width="6.06" height="5.96" fill="#c1ffc7"/><rect x="637.04" y="989.00" width="6.06" height="5.96" fill="#c4ffc8"/><rect x="642.50" y="989.00" width="6.06" height="5.96" fill="#c7ffc8"/><rect x="647.96" y="989.00" width="6.06" height="5.96" fill="#caffc8"/><rect x="653.42" y="989.00" width="6.06" height="5.96" fill="#cdffc8"/><rect x="658.88" y="989.00" width="6.06" height="5.96" fill="#d1ffc8"/><rect x="664.33" y="989.00" width="6.06" height="5.96" fill="#d4ffc9"/><rect x="669.79" y="989.00" width="6.06" height="5.96" fill="#d7ffc9"/><rect x="675.25" y="989.00" width="6.06" height="5.96" fill="#daffc9"/><rect x="680.71" y="989.00" width="6.06" height="5.96" fill="#dcffc9"/><rect x="686.17" y="989.00" width="6.06" height="5.96" fill="#dfffc9"/><rect x="691.62" y="989.00" width="6.06" height="5.96" fill="#e2ffc9"/><rect x="697.08" y="989.00" width="6.06" height="5.96" fill="#e4ffc9"/><rect x="702.54" y="989.00" width="6.06" height="5.96" fill="#e7ffc9"/><rect x="708.00" y="989.00" width="6.06" height="5.96" fill="#e9ffc9"/><rect x="713.46" y="989.00" width="6.06" height="5.96" fill="#ecffc9"/><rect x="718.92" y="989.00" width="6.06" height="5.96" fill="#eeffc9"/><rect x="724.38" y="989.00" width="6.06" height="5.96" fill="#f1ffc9"/><rect x="729.83" y="989.00" width="6.06" height="5.96" fill="#f3ffc9"/><rect x="735.29" y="989.00" width="6.06" height="5.96" fill="#f6ffc9"/><rect x="740.75" y="989.00" width="6.06" height="5.96" fill="#f9ffc8"/><rect x="746.21" y="989.00" width="6.06" height="5.96" fill="#fbffc8"/><rect x="751.67" y="989.00" width="6.06" height="5.96" fill="#feffc8"/><rect x="757.12" y="989.00" width="6.06" height="5.96" fill="#fffec8"/><rect x="762.58" y="989.00" width="6.06" height="5.96" fill="#fffcc6"/><rect x="768.04" y="989.00" width="6.06" height="5.96" fill="#fffbc4"/><rect x="773.50" y="989.00" width="6.06" height="5.96" fill="#fff9c3"/><rect x="778.96" y="989.00" width="6.06" height="5.96" fill="#fff7c1"/><rect x="784.42" y="989.00" width="6.06" height="5.96" fill="#fff6bf"/><rect x="789.88" y="989.00" width="6.06" height="5.96" fill="#fff4be"/><rect x="795.33" y="989.00" width="6.06" height="5.96" fill="#fff3bc"/><rect x="800.79" y="989.00" width="6.06" height="5.96" fill="#fff1bb"/><rect x="806.25" y="989.00" width="6.06" height="5.96" fill="#fff0b9"/><rect x="811.71" y="989.00" width="6.06" height="5.96" fill="#ffeeb7"/><rect x="817.17" y="989.00" width="6.06" height="5.96" fill="#ffecb6"/><rect x="822.62" y="989.00" width="6.06" height="5.96" fill="#ffebb4"/><rect x="828.08" y="989.00" width="6.06" height="5.96" fill="#ffe9b2"/><rect x="833.54" y="989.00" width="6.06" height="5.96" fill="#ffe8b1"/><rect x="511.50" y="994.36" width="6.06" height="5.96" fill="#90ffcb"/><rect x="516.96" y="994.36" width="6.06" height="5.96" fill="#92ffcb"/><rect x="522.42" y="994.36" width="6.06" height="5.96" fill="#93ffcb"/><rect x="527.88" y="994.36" width="6.06" height="5.96" fill="#95ffcb"/><rect x="533.33" y="994.36" width="6.06" height="5.96" fill="#97ffca"/><rect x="538.79" y="994.36" width="6.06" height="5.96" fill="#99ffca"/><rect x="544.25" y="994.36" width="6.06" height="5.96" fill="#9bffca"/><rect x="549.71" y="994.36" width="6.06" height="5.96" fill="#9cffca"/><rect x="555.17" y="994.36" width="6.06" height="5.96" fill="#9effca"/><rect x="560.62" y="994.36" width="6.06" height="5.96" fill="#a0ffc9"/><rect x="566.08" y="994.36" width="6.06" height="5.96" fill="#a2ffc9"/><rect x="571.54" y="994.36" width="6.06" height="5.96" fill="#a4ffc9"/><rect x="577.00" y="994.36" width="6.06" height="5.96" fill="#a6ffc9"/><rect x="582.46" y="994.36" width="6.06" height="5.96" fill="#a7ffc9"/><rect x="587.92" y="994.36" width="6.06" height="5.96" fill="#a9ffc8"/><rect x="593.38" y="994.36" width="6.06" height="5.96" fill="#acffc8"/><rect x="598.83" y="994.36" width="6.06" height="5.96" fill="#afffc9"/><rect x="604.29" y="994.36" width="6.06" height="5.96" fill="#b2ffc9"/><rect x="609.75" y="994.36" width="6.06" height="5.96" fill="#b5ffc9"/><rect x="615.21" y="994.36" width="6.06" height="5.96" fill="#b8ffc9"/><rect x="620.67" y="994.36" width="6.06" height="5.96" fill="#bcffc9"/><rect x="626.12" y="994.36" width="6.06" height="5.96" fill="#bfffca"/><rect x="631.58" y="994.36" width="6.06" height="5.96" fill="#c2ffca"/><rect x="637.04" y="994.36" width="6.06" height="5.96" fill="#c5ffca"/><rect x="642.50" y="994.36" width="6.06" height="5.96" fill="#c8ffca"/><rect x="647.96" y="994.36" width="6.06" height="5.96" fill="#cbffca"/><rect x="653.42" y="994.36" width="6.06" height="5.96" fill="#cfffcb"/><rect x="658.88" y="994.36" width="6.06" height="5.96" fill="#d2ffcb"/><rect x="664.33" y="994.36" width="6.06" height="5.96" fill="#d5ffcb"/><rect x="669.79" y="994.36" width="6.06" height="5.96" fill="#d8ffcb"/><rect x="675.25" y="994.36" width="6.06" height="5.96" fill="#dbffcb"/><rect x="680.71" y="994.36" width="6.06" height="5.96" fill="#ddffcb"/><rect x="686.17" y="994.36" width="6.06" height="5.96" fill="#e0ffcb"/><rect x="691.62" y="994.36" width="6.06" height="5.96" fill="#e2ffcb"/><rect x="697.08" y="994.36" width="6.06" height="5.96" fill="#e5ffcb"/><rect x="702.54" y="994.36" width="6.06" height="5.96" fill="#e7feca"/><rect x="708.00" y="994.36" width="6.06" height="5.96" fill="#eafeca"/><rect x="713.46" y="994.36" width="6.06" height="5.96" fill="#ecfeca"/><rect x="718.92" y="994.36" width="6.06" height="5.96" fill="#effeca"/><rect x="724.38" y="994.36" width="6.06" height="5.96" fill="#f1feca"/><rect x="729.83" y="994.36" width="6.06" height="5.96" fill="#f4feca"/><rect x="735.29" y="994.36" width="6.06" height="5.96" fill="#f6feca"/><rect x="740.75" y="994.36" width="6.06" height="5.96" fill="#f9fec9"/><rect x="746.21" y="994.36" width="6.06" height="5.96" fill="#fbfec9"/><rect x="751.67" y="994.36" width="6.06" height="5.96" fill="#fefec9"/><rect x="757.12" y="994.36" width="6.06" height="5.96" fill="#fffdc8"/><rect x="762.58" y="994.36" width="6.06" height="5.96" fill="#fffbc7"/><rect x="768.04" y="994.36" width="6.06" height="5.96" fill="#fff9c5"/><rect x="773.50" y="994.36" width="6.06" height="5.96" fill="#fff8c3"/><rect x="778.96" y="994.36" width="6.06" height="5.96" fill="#fff6c2"/><rect x="784.42" y="994.36" width="6.06" height="5.96" fill="#fff4c0"/><rect x="789.88" y="994.36" width="6.06" height="5.96" fill="#fff3be"/><rect x="795.33" y="994.36" width="6.06" height="5.96" fill="#fff1bd"/><rect x="800.79" y="994.36" width="6.06" height="5.96" fill="#ffefbb"/><rect x="806.25" y="994.36" width="6.06" height="5.96" fill="#ffeeb9"/><rect x="811.71" y="994.36" width="6.06" height="5.96" fill="#ffecb8"/><rect x="817.17" y="994.36" width="6.06" height="5.96" fill="#ffebb6"/><rect x="822.62" y="994.36" width="6.06" height="5.96" fill="#ffe9b4"/><rect x="828.08" y="994.36" width="6.06" height="5.96" fill="#ffe7b3"/><rect x="833.54" y="994.36" width="6.06" height="5.96" fill="#ffe6b1"/><rect x="511.50" y="999.73" width="6.06" height="5.96" fill="#90ffcd"/><rect x="516.96" y="999.73" width="6.06" height="5.96" fill="#92ffcd"/><rect x="522.42" y="999.73" width="6.06" height="5.96" fill="#94ffcd"/><rect x="527.88" y="999.73" width="6.06" height="5.96" fill="#96ffcd"/><rect x="533.33" y="999.73" width="6.06" height="5.96" fill="#98ffcd"/><rect x="538.79" y="999.73" width="6.06" height="5.96" fill="#9affcd"/><rect x="544.25" y="999.73" width="6.06" height="5.96" fill="#9cffcd"/><rect x="549.71" y="999.73" width="6.06" height="5.96" fill="#9effcc"/><rect x="555.17" y="999.73" width="6.06" height="5.96" fill="#9fffcc"/><rect x="560.62" y="999.73" width="6.06" height="5.96" fill="#a1ffcc"/><rect x="566.08" y="999.73" width="6.06" height="5.96" fill="#a3ffcc"/><rect x="571.54" y="999.73" width="6.06" height="5.96" fill="#a5ffcc"/><rect x="577.00" y="999.73" width="6.06" height="5.96" fill="#a7ffcc"/><rect x="582.46" y="999.73" width="6.06" height="5.96" fill="#a9ffcb"/><rect x="587.92" y="999.73" width="6.06" height="5.96" fill="#abffcb"/><rect x="593.38" y="999.73" width="6.06" height="5.96" fill="#adffcb"/><rect x="598.83" y="999.73" width="6.06" height="5.96" fill="#b0ffcb"/><rect x="604.29" y="999.73" width="6.06" height="5.96" fill="#b3ffcc"/><rect x="609.75" y="999.73" width="6.06" height="5.96" fill="#b7ffcc"/><rect x="615.21" y="999.73" width="6.06" height="5.96" fill="#baffcc"/><rect x="620.67" y="999.73" width="6.06" height="5.96" fill="#bdffcc"/><rect x="626.12" y="999.73" width="6.06" height="5.96" fill="#c0ffcc"/><rect x="631.58" y="999.73" width="6.06" height="5.96" fill="#c3ffcc"/><rect x="637.04" y="999.73" width="6.06" height="5.96" fill="#c6ffcd"/><rect x="642.50" y="999.73" width="6.06" height="5.96" fill="#c9ffcd"/><rect x="647.96" y="999.73" width="6.06" height="5.96" fill="#cdffcd"/><rect x="653.42" y="999.73" width="6.06" height="5.96" fill="#d0ffcd"/><rect x="658.88" y="999.73" width="6.06" height="5.96" fill="#d3ffcd"/><rect x="664.33" y="999.73" width="6.06" height="5.96" fill="#d6ffcd"/><rect x="669.79" y="999.73" width="6.06" height="5.96" fill="#d9ffcd"/><rect x="675.25" y="999.73" width="6.06" height="5.96" fill="#dcffcd"/><rect x="680.71" y="999.73" width="6.06" height="5.96" fill="#deffcd"/><rect x="686.17" y="999.73" width="6.06" height="5.96" fill="#e1ffcd"/><rect x="691.62" y="999.73" width="6.06" height="5.96" fill="#e3fecd"/><rect x="697.08" y="999.73" width="6.06" height="5.96" fill="#e6fecc"/><rect x="702.54" y="999.73" width="6.06" height="5.96" fill="#e8fecc"/><rect x="708.00" y="999.73" width="6.06" height="5.96" fill="#eafecc"/><rect x="713.46" y="999.73" width="6.06" height="5.96" fill="#edfecc"/><rect x="718.92" y="999.73" width="6.06" height="5.96" fill="#effecb"/><rect x="724.38" y="999.73" width="6.06" height="5.96" fill="#f2fdcb"/><rect x="729.83" y="999.73" width="6.06" height="5.96" fill="#f4fdcb"/><rect x="735.29" y="999.73" width="6.06" height="5.96" fill="#f7fdcb"/><rect x="740.75" y="999.73" width="6.06" height="5.96" fill="#f9fdca"/><rect x="746.21" y="999.73" width="6.06" height="5.96" fill="#fbfdca"/><rect x="751.67" y="999.73" width="6.06" height="5.96" fill="#fefdca"/><rect x="757.12" y="999.73" width="6.06" height="5.96" fill="#fffcc9"/><rect x="762.58" y="999.73" width="6.06" height="5.96" fill="#fffac7"/><rect x="768.04" y="999.73" width="6.06" height="5.96" fill="#fff8c6"/><rect x="773.50" y="999.73" width="6.06" height="5.96" fill="#fff6c4"/><rect x="778.96" y="999.73" width="6.06" height="5.96" fill="#fff5c2"/><rect x="784.42" y="999.73" width="6.06" height="5.96" fill="#fff3c0"/><rect x="789.88" y="999.73" width="6.06" height="5.96" fill="#fff1bf"/><rect x="795.33" y="999.73" width="6.06" height="5.96" fill="#fff0bd"/><rect x="800.79" y="999.73" width="6.06" height="5.96" fill="#ffeebb"/><rect x="806.25" y="999.73" width="6.06" height="5.96" fill="#ffecb9"/><rect x="811.71" y="999.73" width="6.06" height="5.96" fill="#ffeab8"/><rect x="817.17" y="999.73" width="6.06" height="5.96" fill="#ffe9b6"/><rect x="822.62" y="999.73" width="6.06" height="5.96" fill="#ffe7b4"/><rect x="828.08" y="999.73" width="6.06" height="5.96" fill="#ffe5b3"/><rect x="833.54" y="999.73" width="6.06" height="5.96" fill="#ffe3b1"/><rect x="511.50" y="1005.09" width="6.06" height="5.96" fill="#91ffd0"/><rect x="516.96" y="1005.09" width="6.06" height="5.96" fill="#93ffcf"/><rect x="522.42" y="1005.09" width="6.06" height="5.96" fill="#95ffcf"/><rect x="527.88" y="1005.09" width="6.06" height="5.96" fill="#97ffcf"/><rect x="533.33" y="1005.09" width="6.06" height="5.96" fill="#99ffcf"/><rect x="538.79" y="1005.09" width="6.06" height="5.96" fill="#9bffcf"/><rect x="544.25" y="1005.09" width="6.06" height="5.96" fill="#9dffcf"/><rect x="549.71" y="1005.09" width="6.06" height="5.96" fill="#9effcf"/><rect x="555.17" y="1005.09" width="6.06" height="5.96" fill="#a0ffcf"/><rect x="560.62" y="1005.09" width="6.06" height="5.96" fill="#a2ffcf"/><rect x="566.08" y="1005.09" width="6.06" height="5.96" fill="#a4ffcf"/><rect x="571.54" y="1005.09" width="6.06" height="5.96" fill="#a6ffcf"/><rect x="577.00" y="1005.09" width="6.06" height="5.96" fill="#a8ffce"/><rect x="582.46" y="1005.09" width="6.06" height="5.96" fill="#aaffce"/><rect x="587.92" y="1005.09" width="6.06" height="5.96" fill="#acffce"/><rect x="593.38" y="1005.09" width="6.06" height="5.96" fill="#afffce"/><rect x="598.83" y="1005.09" width="6.06" height="5.96" fill="#b2ffce"/><rect x="604.29" y="1005.09" width="6.06" height="5.96" fill="#b5ffce"/><rect x="609.75" y="1005.09" width="6.06" height="5.96" fill="#b8ffcf"/><rect x="615.21" y="1005.09" width="6.06" height="5.96" fill="#bbffcf"/><rect x="620.67" y="1005.09" width="6.06" height="5.96" fill="#beffcf"/><rect x="626.12" y="1005.09" width="6.06" height="5.96" fill="#c1ffcf"/><rect x="631.58" y="1005.09" width="6.06" height="5.96" fill="#c4ffcf"/><rect x="637.04" y="1005.09" width="6.06" height="5.96" fill="#c8ffcf"/><rect x="642.50" y="1005.09" width="6.06" height="5.96" fill="#cbffcf"/><rect x="647.96" y="1005.09" width="6.06" height="5.96" fill="#ceffcf"/><rect x="653.42" y="1005.09" width="6.06" height="5.96" fill="#d1ffcf"/><rect x="658.88" y="1005.09" width="6.06" height="5.96" fill="#d4ffcf"/><rect x="664.33" y="1005.09" width="6.06" height="5.96" fill="#d7ffcf"/><rect x="669.79" y="1005.09" width="6.06" height="5.96" fill="#daffd0"/><rect x="675.25" y="1005.09" width="6.06" height="5.96" fill="#ddffcf"/><rect x="680.71" y="1005.09" width="6.06" height="5.96" fill="#dfffcf"/><rect x="686.17" y="1005.09" width="6.06" height="5.96" fill="#e2fecf"/><rect x="691.62" y="1005.09" width="6.06" height="5.96" fill="#e4fece"/><rect x="697.08" y="1005.09" width="6.06" height="5.96" fill="#e6fece"/><rect x="702.54" y="1005.09" width="6.06" height="5.96" fill="#e9fece"/><rect x="708.00" y="1005.09" width="6.06" height="5.96" fill="#ebfdcd"/><rect x="713.46" y="1005.09" width="6.06" height="5.96" fill="#edfdcd"/><rect x="718.92" y="1005.09" width="6.06" height="5.96" fill="#f0fdcd"/><rect x="724.38" y="1005.09" width="6.06" height="5.96" fill="#f2fdcc"/><rect x="729.83" y="1005.09" width="6.06" height="5.96" fill="#f4fdcc"/><rect x="735.29" y="1005.09" width="6.06" height="5.96" fill="#f7fccc"/><rect x="740.75" y="1005.09" width="6.06" height="5.96" fill="#f9fccb"/><rect x="746.21" y="1005.09" width="6.06" height="5.96" fill="#fbfccb"/><rect x="751.67" y="1005.09" width="6.06" height="5.96" fill="#fefccb"/><rect x="757.12" y="1005.09" width="6.06" height="5.96" fill="#fffbca"/><rect x="762.58" y="1005.09" width="6.06" height="5.96" fill="#fff9c8"/><rect x="768.04" y="1005.09" width="6.06" height="5.96" fill="#fff7c6"/><rect x="773.50" y="1005.09" width="6.06" height="5.96" fill="#fff5c4"/><rect x="778.96" y="1005.09" width="6.06" height="5.96" fill="#fff3c3"/><rect x="784.42" y="1005.09" width="6.06" height="5.96" fill="#fff2c1"/><rect x="789.88" y="1005.09" width="6.06" height="5.96" fill="#fff0bf"/><rect x="795.33" y="1005.09" width="6.06" height="5.96" fill="#ffeebd"/><rect x="800.79" y="1005.09" width="6.06" height="5.96" fill="#ffecbc"/><rect x="806.25" y="1005.09" width="6.06" height="5.96" fill="#ffeaba"/><rect x="811.71" y="1005.09" width="6.06" height="5.96" fill="#ffe9b8"/><rect x="817.17" y="1005.09" width="6.06" height="5.96" fill="#ffe7b6"/><rect x="822.62" y="1005.09" width="6.06" height="5.96" fill="#ffe5b4"/><rect x="828.08" y="1005.09" width="6.06" height="5.96" fill="#ffe3b3"/><rect x="833.54" y="1005.09" width="6.06" height="5.96" fill="#ffe1b1"/><rect x="511.50" y="1010.45" width="6.06" height="5.96" fill="#91ffd2"/><rect x="516.96" y="1010.45" width="6.06" height="5.96" fill="#93ffd2"/><rect x="522.42" y="1010.45" width="6.06" height="5.96" fill="#95ffd2"/><rect x="527.88" y="1010.45" width="6.06" height="5.96" fill="#97ffd2"/><rect x="533.33" y="1010.45" width="6.06" height="5.96" fill="#99ffd2"/><rect x="538.79" y="1010.45" width="6.06" height="5.96" fill="#9bffd2"/><rect x="544.25" y="1010.45" width="6.06" height="5.96" fill="#9dffd2"/><rect x="549.71" y="1010.45" width="6.06" height="5.96" fill="#a0ffd1"/><rect x="555.17" y="1010.45" width="6.06" height="5.96" fill="#a2ffd1"/><rect x="560.62" y="1010.45" width="6.06" height="5.96" fill="#a4ffd1"/><rect x="566.08" y="1010.45" width="6.06" height="5.96" fill="#a6ffd1"/><rect x="571.54" y="1010.45" width="6.06" height="5.96" fill="#a8ffd1"/><rect x="577.00" y="1010.45" width="6.06" height="5.96" fill="#aaffd1"/><rect x="582.46" y="1010.45" width="6.06" height="5.96" fill="#acffd1"/><rect x="587.92" y="1010.45" width="6.06" height="5.96" fill="#aeffd1"/><rect x="593.38" y="1010.45" width="6.06" height="5.96" fill="#b0ffd1"/><rect x="598.83" y="1010.45" width="6.06" height="5.96" fill="#b3ffd1"/><rect x="604.29" y="1010.45" width="6.06" height="5.96" fill="#b6ffd1"/><rect x="609.75" y="1010.45" width="6.06" height="5.96" fill="#b9ffd1"/><rect x="615.21" y="1010.45" width="6.06" height="5.96" fill="#bcffd1"/><rect x="620.67" y="1010.45" width="6.06" height="5.96" fill="#c0ffd1"/><rect x="626.12" y="1010.45" width="6.06" height="5.96" fill="#c3ffd1"/><rect x="631.58" y="1010.45" width="6.06" height="5.96" fill="#c6ffd1"/><rect x="637.04" y="1010.45" width="6.06" height="5.96" fill="#c9ffd2"/><rect x="642.50" y="1010.45" width="6.06" height="5.96" fill="#ccffd2"/><rect x="647.96" y="1010.45" width="6.06" height="5.96" fill="#cfffd2"/><rect x="653.42" y="1010.45" width="6.06" height="5.96" fill="#d2ffd2"/><rect x="658.88" y="1010.45" width="6.06" height="5.96" fill="#d5ffd2"/><rect x="664.33" y="1010.45" width="6.06" height="5.96" fill="#d8ffd2"/><rect x="669.79" y="1010.45" width="6.06" height="5.96" fill="#dbffd2"/><rect x="675.25" y="1010.45" width="6.06" height="5.96" fill="#deffd2"/><rect x="680.71" y="1010.45" width="6.06" height="5.96" fill="#e0ffd1"/><rect x="686.17" y="1010.45" width="6.06" height="5.96" fill="#e3fed1"/><rect x="691.62" y="1010.45" width="6.06" height="5.96" fill="#e5fed0"/><rect x="697.08" y="1010.45" width="6.06" height="5.96" fill="#e7fed0"/><rect x="702.54" y="1010.45" width="6.06" height="5.96" fill="#e9fdcf"/><rect x="708.00" y="1010.45" width="6.06" height="5.96" fill="#ecfdcf"/><rect x="713.46" y="1010.45" width="6.06" height="5.96" fill="#eefdcf"/><rect x="718.92" y="1010.45" width="6.06" height="5.96" fill="#f0fcce"/><rect x="724.38" y="1010.45" width="6.06" height="5.96" fill="#f2fcce"/><rect x="729.83" y="1010.45" width="6.06" height="5.96" fill="#f5fccd"/><rect x="735.29" y="1010.45" width="6.06" height="5.96" fill="#f7fccd"/><rect x="740.75" y="1010.45" width="6.06" height="5.96" fill="#f9fbcc"/><rect x="746.21" y="1010.45" width="6.06" height="5.96" fill="#fcfbcc"/><rect x="751.67" y="1010.45" width="6.06" height="5.96" fill="#fefbcb"/><rect x="757.12" y="1010.45" width="6.06" height="5.96" fill="#fffaca"/><rect x="762.58" y="1010.45" width="6.06" height="5.96" fill="#fff8c9"/><rect x="768.04" y="1010.45" width="6.06" height="5.96" fill="#fff6c7"/><rect x="773.50" y="1010.45" width="6.06" height="5.96" fill="#fff4c5"/><rect x="778.96" y="1010.45" width="6.06" height="5.96" fill="#fff2c3"/><rect x="784.42" y="1010.45" width="6.06" height="5.96" fill="#fff0c1"/><rect x="789.88" y="1010.45" width="6.06" height="5.96" fill="#ffeebf"/><rect x="795.33" y="1010.45" width="6.06" height="5.96" fill="#ffecbe"/><rect x="800.79" y="1010.45" width="6.06" height="5.96" fill="#ffeabc"/><rect x="806.25" y="1010.45" width="6.06" height="5.96" fill="#ffe9ba"/><rect x="811.71" y="1010.45" width="6.06" height="5.96" fill="#ffe7b8"/><rect x="817.17" y="1010.45" width="6.06" height="5.96" fill="#ffe5b6"/><rect x="822.62" y="1010.45" width="6.06" height="5.96" fill="#ffe3b5"/><rect x="828.08" y="1010.45" width="6.06" height="5.96" fill="#ffe1b3"/><rect x="833.54" y="1010.45" width="6.06" height="5.96" fill="#ffdfb1"/><rect x="511.50" y="1015.82" width="6.06" height="5.96" fill="#92ffd4"/><rect x="516.96" y="1015.82" width="6.06" height="5.96" fill="#94ffd4"/><rect x="522.42" y="1015.82" width="6.06" height="5.96" fill="#96ffd4"/><rect x="527.88" y="1015.82" width="6.06" height="5.96" fill="#98ffd4"/><rect x="533.33" y="1015.82" width="6.06" height="5.96" fill="#9affd4"/><rect x="538.79" y="1015.82" width="6.06" height="5.96" fill="#9cffd4"/><rect x="544.25" y="1015.82" width="6.06" height="5.96" fill="#9effd4"/><rect x="549.71" y="1015.82" width="6.06" height="5.96" fill="#a0ffd4"/><rect x="555.17" y="1015.82" width="6.06" height="5.96" fill="#a3ffd4"/><rect x="560.62" y="1015.82" width="6.06" height="5.96" fill="#a5ffd4"/><rect x="566.08" y="1015.82" width="6.06" height="5.96" fill="#a7ffd4"/><rect x="571.54" y="1015.82" width="6.06" height="5.96" fill="#a9ffd4"/><rect x="577.00" y="1015.82" width="6.06" height="5.96" fill="#abffd4"/><rect x="582.46" y="1015.82" width="6.06" height="5.96" fill="#adffd4"/><rect x="587.92" y="1015.82" width="6.06" height="5.96" fill="#afffd4"/><rect x="593.38" y="1015.82" width="6.06" height="5.96" fill="#b2ffd4"/><rect x="598.83" y="1015.82" width="6.06" height="5.96" fill="#b5ffd4"/><rect x="604.29" y="1015.82" width="6.06" height="5.96" fill="#b8ffd4"/><rect x="609.75" y="1015.82" width="6.06" height="5.96" fill="#bbffd4"/><rect x="615.21" y="1015.82" width="6.06" height="5.96" fill="#beffd4"/><rect x="620.67" y="1015.82" width="6.06" height="5.96" fill="#c1ffd4"/><rect x="626.12" y="1015.82" width="6.06" height="5.96" fill="#c4ffd4"/><rect x="631.58" y="1015.82" width="6.06" height="5.96" fill="#c7ffd4"/><rect x="637.04" y="1015.82" width="6.06" height="5.96" fill="#caffd4"/><rect x="642.50" y="1015.82" width="6.06" height="5.96" fill="#cdffd4"/><rect x="647.96" y="1015.82" width="6.06" height="5.96" fill="#d0ffd4"/><rect x="653.42" y="1015.82" width="6.06" height="5.96" fill="#d3ffd4"/><rect x="658.88" y="1015.82" width="6.06" height="5.96" fill="#d6ffd4"/><rect x="664.33" y="1015.82" width="6.06" height="5.96" fill="#d9ffd4"/><rect x="669.79" y="1015.82" width="6.06" height="5.96" fill="#dcffd4"/><rect x="675.25" y="1015.82" width="6.06" height="5.96" fill="#dfffd4"/><rect x="680.71" y="1015.82" width="6.06" height="5.96" fill="#e1fed3"/><rect x="686.17" y="1015.82" width="6.06" height="5.96" fill="#e4fed3"/><rect x="691.62" y="1015.82" width="6.06" height="5.96" fill="#e6fed2"/><rect x="697.08" y="1015.82" width="6.06" height="5.96" fill="#e8fdd2"/><rect x="702.54" y="1015.82" width="6.06" height="5.96" fill="#eafdd1"/><rect x="708.00" y="1015.82" width="6.06" height="5.96" fill="#ecfdd1"/><rect x="713.46" y="1015.82" width="6.06" height="5.96" fill="#eefcd0"/><rect x="718.92" y="1015.82" width="6.06" height="5.96" fill="#f1fccf"/><rect x="724.38" y="1015.82" width="6.06" height="5.96" fill="#f3fccf"/><rect x="729.83" y="1015.82" width="6.06" height="5.96" fill="#f5fbce"/><rect x="735.29" y="1015.82" width="6.06" height="5.96" fill="#f7fbce"/><rect x="740.75" y="1015.82" width="6.06" height="5.96" fill="#fafacd"/><rect x="746.21" y="1015.82" width="6.06" height="5.96" fill="#fcfacd"/><rect x="751.67" y="1015.82" width="6.06" height="5.96" fill="#fefacc"/><rect x="757.12" y="1015.82" width="6.06" height="5.96" fill="#fff9cb"/><rect x="762.58" y="1015.82" width="6.06" height="5.96" fill="#fff7c9"/><rect x="768.04" y="1015.82" width="6.06" height="5.96" fill="#fff5c7"/><rect x="773.50" y="1015.82" width="6.06" height="5.96" fill="#fff3c5"/><rect x="778.96" y="1015.82" width="6.06" height="5.96" fill="#fff1c4"/><rect x="784.42" y="1015.82" width="6.06" height="5.96" fill="#ffefc2"/><rect x="789.88" y="1015.82" width="6.06" height="5.96" fill="#ffedc0"/><rect x="795.33" y="1015.82" width="6.06" height="5.96" fill="#ffebbe"/><rect x="800.79" y="1015.82" width="6.06" height="5.96" fill="#ffe9bc"/><rect x="806.25" y="1015.82" width="6.06" height="5.96" fill="#ffe7ba"/><rect x="811.71" y="1015.82" width="6.06" height="5.96" fill="#ffe5b8"/><rect x="817.17" y="1015.82" width="6.06" height="5.96" fill="#ffe3b7"/><rect x="822.62" y="1015.82" width="6.06" height="5.96" fill="#ffe1b5"/><rect x="828.08" y="1015.82" width="6.06" height="5.96" fill="#ffdfb3"/><rect x="833.54" y="1015.82" width="6.06" height="5.96" fill="#ffddb1"/><rect x="511.50" y="1021.18" width="6.06" height="5.96" fill="#93ffd6"/><rect x="516.96" y="1021.18" width="6.06" height="5.96" fill="#95ffd6"/><rect x="522.42" y="1021.18" width="6.06" height="5.96" fill="#97ffd6"/><rect x="527.88" y="1021.18" width="6.06" height="5.96" fill="#99ffd6"/><rect x="533.33" y="1021.18" width="6.06" height="5.96" fill="#9bffd6"/><rect x="538.79" y="1021.18" width="6.06" height="5.96" fill="#9dffd6"/><rect x="544.25" y="1021.18" width="6.06" height="5.96" fill="#9fffd6"/><rect x="549.71" y="1021.18" width="6.06" height="5.96" fill="#a2ffd7"/><rect x="555.17" y="1021.18" width="6.06" height="5.96" fill="#a4ffd7"/><rect x="560.62" y="1021.18" width="6.06" height="5.96" fill="#a6ffd7"/><rect x="566.08" y="1021.18" width="6.06" height="5.96" fill="#a8ffd7"/><rect x="571.54" y="1021.18" width="6.06" height="5.96" fill="#aaffd7"/><rect x="577.00" y="1021.18" width="6.06" height="5.96" fill="#acffd7"/><rect x="582.46" y="1021.18" width="6.06" height="5.96" fill="#aeffd7"/><rect x="587.92" y="1021.18" width="6.06" height="5.96" fill="#b0ffd7"/><rect x="593.38" y="1021.18" width="6.06" height="5.96" fill="#b3ffd7"/><rect x="598.83" y="1021.18" width="6.06" height="5.96" fill="#b6ffd7"/><rect x="604.29" y="1021.18" width="6.06" height="5.96" fill="#b9ffd7"/><rect x="609.75" y="1021.18" width="6.06" height="5.96" fill="#bcffd7"/><rect x="615.21" y="1021.18" width="6.06" height="5.96" fill="#bfffd7"/><rect x="620.67" y="1021.18" width="6.06" height="5.96" fill="#c2ffd7"/><rect x="626.12" y="1021.18" width="6.06" height="5.96" fill="#c5ffd7"/><rect x="631.58" y="1021.18" width="6.06" height="5.96" fill="#c8ffd7"/><rect x="637.04" y="1021.18" width="6.06" height="5.96" fill="#cbffd6"/><rect x="642.50" y="1021.18" width="6.06" height="5.96" fill="#ceffd6"/><rect x="647.96" y="1021.18" width="6.06" height="5.96" fill="#d1ffd6"/><rect x="653.42" y="1021.18" width="6.06" height="5.96" fill="#d4ffd6"/><rect x="658.88" y="1021.18" width="6.06" height="5.96" fill="#d7ffd6"/><rect x="664.33" y="1021.18" width="6.06" height="5.96" fill="#dbffd6"/><rect x="669.79" y="1021.18" width="6.06" height="5.96" fill="#deffd6"/><rect x="675.25" y="1021.18" width="6.06" height="5.96" fill="#e0ffd6"/><rect x="680.71" y="1021.18" width="6.06" height="5.96" fill="#e2fed5"/><rect x="686.17" y="1021.18" width="6.06" height="5.96" fill="#e4fed5"/><rect x="691.62" y="1021.18" width="6.06" height="5.96" fill="#e7fdd4"/><rect x="697.08" y="1021.18" width="6.06" height="5.96" fill="#e9fdd3"/><rect x="702.54" y="1021.18" width="6.06" height="5.96" fill="#ebfdd3"/><rect x="708.00" y="1021.18" width="6.06" height="5.96" fill="#edfcd2"/><rect x="713.46" y="1021.18" width="6.06" height="5.96" fill="#effcd1"/><rect x="718.92" y="1021.18" width="6.06" height="5.96" fill="#f1fbd1"/><rect x="724.38" y="1021.18" width="6.06" height="5.96" fill="#f3fbd0"/><rect x="729.83" y="1021.18" width="6.06" height="5.96" fill="#f5fad0"/><rect x="735.29" y="1021.18" width="6.06" height="5.96" fill="#f8facf"/><rect x="740.75" y="1021.18" width="6.06" height="5.96" fill="#faface"/><rect x="746.21" y="1021.18" width="6.06" height="5.96" fill="#fcf9ce"/><rect x="751.67" y="1021.18" width="6.06" height="5.96" fill="#fef9cd"/><rect x="757.12" y="1021.18" width="6.06" height="5.96" fill="#fff7cc"/><rect x="762.58" y="1021.18" width="6.06" height="5.96" fill="#fff5ca"/><rect x="768.04" y="1021.18" width="6.06" height="5.96" fill="#fff3c8"/><rect x="773.50" y="1021.18" width="6.06" height="5.96" fill="#fff1c6"/><rect x="778.96" y="1021.18" width="6.06" height="5.96" fill="#ffefc4"/><rect x="784.42" y="1021.18" width="6.06" height="5.96" fill="#ffedc2"/><rect x="789.88" y="1021.18" width="6.06" height="5.96" fill="#ffebc0"/><rect x="795.33" y="1021.18" width="6.06" height="5.96" fill="#ffe9be"/><rect x="800.79" y="1021.18" width="6.06" height="5.96" fill="#ffe7bc"/><rect x="806.25" y="1021.18" width="6.06" height="5.96" fill="#ffe5bb"/><rect x="811.71" y="1021.18" width="6.06" height="5.96" fill="#ffe3b9"/><rect x="817.17" y="1021.18" width="6.06" height="5.96" fill="#ffe1b7"/><rect x="822.62" y="1021.18" width="6.06" height="5.96" fill="#ffdfb5"/><rect x="828.08" y="1021.18" width="6.06" height="5.96" fill="#ffddb3"/><rect x="833.54" y="1021.18" width="6.06" height="5.96" fill="#ffdbb1"/><rect x="511.50" y="1026.55" width="6.06" height="5.96" fill="#93ffd8"/><rect x="516.96" y="1026.55" width="6.06" height="5.96" fill="#95ffd9"/><rect x="522.42" y="1026.55" width="6.06" height="5.96" fill="#98ffd9"/><rect x="527.88" y="1026.55" width="6.06" height="5.96" fill="#9affd9"/><rect x="533.33" y="1026.55" width="6.06" height="5.96" fill="#9cffd9"/><rect x="538.79" y="1026.55" width="6.06" height="5.96" fill="#9effd9"/><rect x="544.25" y="1026.55" width="6.06" height="5.96" fill="#a0ffd9"/><rect x="549.71" y="1026.55" width="6.06" height="5.96" fill="#a2ffd9"/><rect x="555.17" y="1026.55" width="6.06" height="5.96" fill="#a5ffd9"/><rect x="560.62" y="1026.55" width="6.06" height="5.96" fill="#a7ffd9"/><rect x="566.08" y="1026.55" width="6.06" height="5.96" fill="#a9ffd9"/><rect x="571.54" y="1026.55" width="6.06" height="5.96" fill="#abffd9"/><rect x="577.00" y="1026.55" width="6.06" height="5.96" fill="#adffda"/><rect x="582.46" y="1026.55" width="6.06" height="5.96" fill="#b0ffda"/><rect x="587.92" y="1026.55" width="6.06" height="5.96" fill="#b2ffda"/><rect x="593.38" y="1026.55" width="6.06" height="5.96" fill="#b4ffda"/><rect x="598.83" y="1026.55" width="6.06" height="5.96" fill="#b7ffda"/><rect x="604.29" y="1026.55" width="6.06" height="5.96" fill="#baffda"/><rect x="609.75" y="1026.55" width="6.06" height="5.96" fill="#bdffd9"/><rect x="615.21" y="1026.55" width="6.06" height="5.96" fill="#c0ffd9"/><rect x="620.67" y="1026.55" width="6.06" height="5.96" fill="#c4ffd9"/><rect x="626.12" y="1026.55" width="6.06" height="5.96" fill="#c7ffd9"/><rect x="631.58" y="1026.55" width="6.06" height="5.96" fill="#caffd9"/><rect x="637.04" y="1026.55" width="6.06" height="5.96" fill="#cdffd9"/><rect x="642.50" y="1026.55" width="6.06" height="5.96" fill="#d0ffd9"/><rect x="647.96" y="1026.55" width="6.06" height="5.96" fill="#d3ffd9"/><rect x="653.42" y="1026.55" width="6.06" height="5.96" fill="#d6ffd9"/><rect x="658.88" y="1026.55" width="6.06" height="5.96" fill="#d9ffd9"/><rect x="664.33" y="1026.55" width="6.06" height="5.96" fill="#dcffd9"/><rect x="669.79" y="1026.55" width="6.06" height="5.96" fill="#dfffd8"/><rect x="675.25" y="1026.55" width="6.06" height="5.96" fill="#e1ffd8"/><rect x="680.71" y="1026.55" width="6.06" height="5.96" fill="#e3fed7"/><rect x="686.17" y="1026.55" width="6.06" height="5.96" fill="#e5fed7"/><rect x="691.62" y="1026.55" width="6.06" height="5.96" fill="#e7fdd6"/><rect x="697.08" y="1026.55" width="6.06" height="5.96" fill="#e9fdd5"/><rect x="702.54" y="1026.55" width="6.06" height="5.96" fill="#ebfcd4"/><rect x="708.00" y="1026.55" width="6.06" height="5.96" fill="#eefcd4"/><rect x="713.46" y="1026.55" width="6.06" height="5.96" fill="#f0fbd3"/><rect x="718.92" y="1026.55" width="6.06" height="5.96" fill="#f2fbd2"/><rect x="724.38" y="1026.55" width="6.06" height="5.96" fill="#f4fad1"/><rect x="729.83" y="1026.55" width="6.06" height="5.96" fill="#f6fad1"/><rect x="735.29" y="1026.55" width="6.06" height="5.96" fill="#f8f9d0"/><rect x="740.75" y="1026.55" width="6.06" height="5.96" fill="#faf9cf"/><rect x="746.21" y="1026.55" width="6.06" height="5.96" fill="#fcf8cf"/><rect x="751.67" y="1026.55" width="6.06" height="5.96" fill="#fef8ce"/><rect x="757.12" y="1026.55" width="6.06" height="5.96" fill="#fff6cc"/><rect x="762.58" y="1026.55" width="6.06" height="5.96" fill="#fff4cb"/><rect x="768.04" y="1026.55" width="6.06" height="5.96" fill="#fff2c9"/><rect x="773.50" y="1026.55" width="6.06" height="5.96" fill="#fff0c7"/><rect x="778.96" y="1026.55" width="6.06" height="5.96" fill="#ffeec5"/><rect x="784.42" y="1026.55" width="6.06" height="5.96" fill="#ffecc3"/><rect x="789.88" y="1026.55" width="6.06" height="5.96" fill="#ffeac1"/><rect x="795.33" y="1026.55" width="6.06" height="5.96" fill="#ffe8bf"/><rect x="800.79" y="1026.55" width="6.06" height="5.96" fill="#ffe5bd"/><rect x="806.25" y="1026.55" width="6.06" height="5.96" fill="#ffe3bb"/><rect x="811.71" y="1026.55" width="6.06" height="5.96" fill="#ffe1b9"/><rect x="817.17" y="1026.55" width="6.06" height="5.96" fill="#ffdfb7"/><rect x="822.62" y="1026.55" width="6.06" height="5.96" fill="#ffddb5"/><rect x="828.08" y="1026.55" width="6.06" height="5.96" fill="#ffdbb3"/><rect x="833.54" y="1026.55" width="6.06" height="5.96" fill="#ffd9b1"/><rect x="511.50" y="1031.91" width="6.06" height="5.96" fill="#94ffdb"/><rect x="516.96" y="1031.91" width="6.06" height="5.96" fill="#96ffdb"/><rect x="522.42" y="1031.91" width="6.06" height="5.96" fill="#98ffdb"/><rect x="527.88" y="1031.91" width="6.06" height="5.96" fill="#9bffdb"/><rect x="533.33" y="1031.91" width="6.06" height="5.96" fill="#9dffdb"/><rect x="538.79" y="1031.91" width="6.06" height="5.96" fill="#9fffdb"/><rect x="544.25" y="1031.91" width="6.06" height="5.96" fill="#a1ffdb"/><rect x="549.71" y="1031.91" width="6.06" height="5.96" fill="#a4ffdc"/><rect x="555.17" y="1031.91" width="6.06" height="5.96" fill="#a6ffdc"/><rect x="560.62" y="1031.91" width="6.06" height="5.96" fill="#a8ffdc"/><rect x="566.08" y="1031.91" width="6.06" height="5.96" fill="#aaffdc"/><rect x="571.54" y="1031.91" width="6.06" height="5.96" fill="#acffdc"/><rect x="577.00" y="1031.91" width="6.06" height="5.96" fill="#afffdc"/><rect x="582.46" y="1031.91" width="6.06" height="5.96" fill="#b1ffdd"/><rect x="587.92" y="1031.91" width="6.06" height="5.96" fill="#b3ffdd"/><rect x="593.38" y="1031.91" width="6.06" height="5.96" fill="#b6ffdd"/><rect x="598.83" y="1031.91" width="6.06" height="5.96" fill="#b9ffdd"/><rect x="604.29" y="1031.91" width="6.06" height="5.96" fill="#bcffdc"/><rect x="609.75" y="1031.91" width="6.06" height="5.96" fill="#bfffdc"/><rect x="615.21" y="1031.91" width="6.06" height="5.96" fill="#c2ffdc"/><rect x="620.67" y="1031.91" width="6.06" height="5.96" fill="#c5ffdc"/><rect x="626.12" y="1031.91" width="6.06" height="5.96" fill="#c8ffdc"/><rect x="631.58" y="1031.91" width="6.06" height="5.96" fill="#cbffdc"/><rect x="637.04" y="1031.91" width="6.06" height="5.96" fill="#ceffdb"/><rect x="642.50" y="1031.91" width="6.06" height="5.96" fill="#d1ffdb"/><rect x="647.96" y="1031.91" width="6.06" height="5.96" fill="#d4ffdb"/><rect x="653.42" y="1031.91" width="6.06" height="5.96" fill="#d7ffdb"/><rect x="658.88" y="1031.91" width="6.06" height="5.96" fill="#daffdb"/><rect x="664.33" y="1031.91" width="6.06" height="5.96" fill="#ddffdb"/><rect x="669.79" y="1031.91" width="6.06" height="5.96" fill="#e0ffdb"/><rect x="675.25" y="1031.91" width="6.06" height="5.96" fill="#e2ffda"/><rect x="680.71" y="1031.91" width="6.06" height="5.96" fill="#e4fed9"/><rect x="686.17" y="1031.91" width="6.06" height="5.96" fill="#e6fed8"/><rect x="691.62" y="1031.91" width="6.06" height="5.96" fill="#e8fdd8"/><rect x="697.08" y="1031.91" width="6.06" height="5.96" fill="#eafcd7"/><rect x="702.54" y="1031.91" width="6.06" height="5.96" fill="#ecfcd6"/><rect x="708.00" y="1031.91" width="6.06" height="5.96" fill="#eefbd5"/><rect x="713.46" y="1031.91" width="6.06" height="5.96" fill="#f0fbd4"/><rect x="718.92" y="1031.91" width="6.06" height="5.96" fill="#f2fad4"/><rect x="724.38" y="1031.91" width="6.06" height="5.96" fill="#f4fad3"/><rect x="729.83" y="1031.91" width="6.06" height="5.96" fill="#f6f9d2"/><rect x="735.29" y="1031.91" width="6.06" height="5.96" fill="#f8f8d1"/><rect x="740.75" y="1031.91" width="6.06" height="5.96" fill="#faf8d0"/><rect x="746.21" y="1031.91" width="6.06" height="5.96" fill="#fcf7cf"/><rect x="751.67" y="1031.91" width="6.06" height="5.96" fill="#fef7cf"/><rect x="757.12" y="1031.91" width="6.06" height="5.96" fill="#fff5cd"/><rect x="762.58" y="1031.91" width="6.06" height="5.96" fill="#fff3cb"/><rect x="768.04" y="1031.91" width="6.06" height="5.96" fill="#fff1c9"/><rect x="773.50" y="1031.91" width="6.06" height="5.96" fill="#ffefc7"/><rect x="778.96" y="1031.91" width="6.06" height="5.96" fill="#ffedc5"/><rect x="784.42" y="1031.91" width="6.06" height="5.96" fill="#ffeac3"/><rect x="789.88" y="1031.91" width="6.06" height="5.96" fill="#ffe8c1"/><rect x="795.33" y="1031.91" width="6.06" height="5.96" fill="#ffe6bf"/><rect x="800.79" y="1031.91" width="6.06" height="5.96" fill="#ffe4bd"/><rect x="806.25" y="1031.91" width="6.06" height="5.96" fill="#ffe2bb"/><rect x="811.71" y="1031.91" width="6.06" height="5.96" fill="#ffdfb9"/><rect x="817.17" y="1031.91" width="6.06" height="5.96" fill="#ffddb7"/><rect x="822.62" y="1031.91" width="6.06" height="5.96" fill="#ffdbb5"/><rect x="828.08" y="1031.91" width="6.06" height="5.96" fill="#ffd9b3"/><rect x="833.54" y="1031.91" width="6.06" height="5.96" fill="#ffd7b1"/><rect x="511.50" y="1037.27" width="6.06" height="5.96" fill="#94ffdd"/><rect x="516.96" y="1037.27" width="6.06" height="5.96" fill="#97ffdd"/><rect x="522.42" y="1037.27" width="6.06" height="5.96" fill="#99ffdd"/><rect x="527.88" y="1037.27" width="6.06" height="5.96" fill="#9bffdd"/><rect x="533.33" y="1037.27" width="6.06" height="5.96" fill="#9effde"/><rect x="538.79" y="1037.27" width="6.06" height="5.96" fill="#a0ffde"/><rect x="544.25" y="1037.27" width="6.06" height="5.96" fill="#a2ffde"/><rect x="549.71" y="1037.27" width="6.06" height="5.96" fill="#a4ffde"/><rect x="555.17" y="1037.27" width="6.06" height="5.96" fill="#a7ffde"/><rect x="560.62" y="1037.27" width="6.06" height="5.96" fill="#a9ffdf"/><rect x="566.08" y="1037.27" width="6.06" height="5.96" fill="#abffdf"/><rect x="571.54" y="1037.27" width="6.06" height="5.96" fill="#aeffdf"/><rect x="577.00" y="1037.27" width="6.06" height="5.96" fill="#b0ffdf"/><rect x="582.46" y="1037.27" width="6.06" height="5.96" fill="#b2ffdf"/><rect x="587.92" y="1037.27" width="6.06" height="5.96" fill="#b5ffe0"/><rect x="593.38" y="1037.27" width="6.06" height="5.96" fill="#b7ffe0"/><rect x="598.83" y="1037.27" width="6.06" height="5.96" fill="#baffdf"/><rect x="604.29" y="1037.27" width="6.06" height="5.96" fill="#bdffdf"/><rect x="609.75" y="1037.27" width="6.06" height="5.96" fill="#c0ffdf"/><rect x="615.21" y="1037.27" width="6.06" height="5.96" fill="#c3ffdf"/><rect x="620.67" y="1037.27" width="6.06" height="5.96" fill="#c6ffdf"/><rect x="626.12" y="1037.27" width="6.06" height="5.96" fill="#c9ffde"/><rect x="631.58" y="1037.27" width="6.06" height="5.96" fill="#ccffde"/><rect x="637.04" y="1037.27" width="6.06" height="5.96" fill="#cfffde"/><rect x="642.50" y="1037.27" width="6.06" height="5.96" fill="#d2ffde"/><rect x="647.96" y="1037.27" width="6.06" height="5.96" fill="#d5ffde"/><rect x="653.42" y="1037.27" width="6.06" height="5.96" fill="#d8ffdd"/><rect x="658.88" y="1037.27" width="6.06" height="5.96" fill="#dbffdd"/><rect x="664.33" y="1037.27" width="6.06" height="5.96" fill="#deffdd"/><rect x="669.79" y="1037.27" width="6.06" height="5.96" fill="#e1ffdd"/><rect x="675.25" y="1037.27" width="6.06" height="5.96" fill="#e3ffdc"/><rect x="680.71" y="1037.27" width="6.06" height="5.96" fill="#e5fedb"/><rect x="686.17" y="1037.27" width="6.06" height="5.96" fill="#e7fdda"/><rect x="691.62" y="1037.27" width="6.06" height="5.96" fill="#e9fdda"/><rect x="697.08" y="1037.27" width="6.06" height="5.96" fill="#ebfcd9"/><rect x="702.54" y="1037.27" width="6.06" height="5.96" fill="#edfcd8"/><rect x="708.00" y="1037.27" width="6.06" height="5.96" fill="#effbd7"/><rect x="713.46" y="1037.27" width="6.06" height="5.96" fill="#f1fad6"/><rect x="718.92" y="1037.27" width="6.06" height="5.96" fill="#f3fad5"/><rect x="724.38" y="1037.27" width="6.06" height="5.96" fill="#f4f9d4"/><rect x="729.83" y="1037.27" width="6.06" height="5.96" fill="#f6f8d3"/><rect x="735.29" y="1037.27" width="6.06" height="5.96" fill="#f8f8d2"/><rect x="740.75" y="1037.27" width="6.06" height="5.96" fill="#faf7d1"/><rect x="746.21" y="1037.27" width="6.06" height="5.96" fill="#fcf6d0"/><rect x="751.67" y="1037.27" width="6.06" height="5.96" fill="#fef6cf"/><rect x="757.12" y="1037.27" width="6.06" height="5.96" fill="#fff4ce"/><rect x="762.58" y="1037.27" width="6.06" height="5.96" fill="#fff2cc"/><rect x="768.04" y="1037.27" width="6.06" height="5.96" fill="#fff0ca"/><rect x="773.50" y="1037.27" width="6.06" height="5.96" fill="#ffeec8"/><rect x="778.96" y="1037.27" width="6.06" height="5.96" fill="#ffebc6"/><rect x="784.42" y="1037.27" width="6.06" height="5.96" fill="#ffe9c4"/><rect x="789.88" y="1037.27" width="6.06" height="5.96" fill="#ffe7c2"/><rect x="795.33" y="1037.27" width="6.06" height="5.96" fill="#ffe4bf"/><rect x="800.79" y="1037.27" width="6.06" height="5.96" fill="#ffe2bd"/><rect x="806.25" y="1037.27" width="6.06" height="5.96" fill="#ffe0bb"/><rect x="811.71" y="1037.27" width="6.06" height="5.96" fill="#ffdeb9"/><rect x="817.17" y="1037.27" width="6.06" height="5.96" fill="#ffdbb7"/><rect x="822.62" y="1037.27" width="6.06" height="5.96" fill="#ffd9b5"/><rect x="828.08" y="1037.27" width="6.06" height="5.96" fill="#ffd7b3"/><rect x="833.54" y="1037.27" width="6.06" height="5.96" fill="#ffd4b1"/><rect x="511.50" y="1042.64" width="6.06" height="5.96" fill="#95ffdf"/><rect x="516.96" y="1042.64" width="6.06" height="5.96" fill="#97ffdf"/><rect x="522.42" y="1042.64" width="6.06" height="5.96" fill="#9affe0"/><rect x="527.88" y="1042.64" width="6.06" height="5.96" fill="#9cffe0"/><rect x="533.33" y="1042.64" width="6.06" height="5.96" fill="#9effe0"/><rect x="538.79" y="1042.64" width="6.06" height="5.96" fill="#a1ffe0"/><rect x="544.25" y="1042.64" width="6.06" height="5.96" fill="#a3ffe0"/><rect x="549.71" y="1042.64" width="6.06" height="5.96" fill="#a6ffe1"/><rect x="555.17" y="1042.64" width="6.06" height="5.96" fill="#a8ffe1"/><rect x="560.62" y="1042.64" width="6.06" height="5.96" fill="#aaffe1"/><rect x="566.08" y="1042.64" width="6.06" height="5.96" fill="#adffe1"/><rect x="571.54" y="1042.64" width="6.06" height="5.96" fill="#afffe2"/><rect x="577.00" y="1042.64" width="6.06" height="5.96" fill="#b1ffe2"/><rect x="582.46" y="1042.64" width="6.06" height="5.96" fill="#b4ffe2"/><rect x="587.92" y="1042.64" width="6.06" height="5.96" fill="#b6ffe2"/><rect x="593.38" y="1042.64" width="6.06" height="5.96" fill="#b9ffe2"/><rect x="598.83" y="1042.64" width="6.06" height="5.96" fill="#bcffe2"/><rect x="604.29" y="1042.64" width="6.06" height="5.96" fill="#bfffe2"/><rect x="609.75" y="1042.64" width="6.06" height="5.96" fill="#c2ffe2"/><rect x="615.21" y="1042.64" width="6.06" height="5.96" fill="#c5ffe1"/><rect x="620.67" y="1042.64" width="6.06" height="5.96" fill="#c7ffe1"/><rect x="626.12" y="1042.64" width="6.06" height="5.96" fill="#caffe1"/><rect x="631.58" y="1042.64" width="6.06" height="5.96" fill="#cdffe1"/><rect x="637.04" y="1042.64" width="6.06" height="5.96" fill="#d0ffe0"/><rect x="642.50" y="1042.64" width="6.06" height="5.96" fill="#d3ffe0"/><rect x="647.96" y="1042.64" width="6.06" height="5.96" fill="#d6ffe0"/><rect x="653.42" y="1042.64" width="6.06" height="5.96" fill="#d9ffe0"/><rect x="658.88" y="1042.64" width="6.06" height="5.96" fill="#dcffe0"/><rect x="664.33" y="1042.64" width="6.06" height="5.96" fill="#dfffdf"/><rect x="669.79" y="1042.64" width="6.06" height="5.96" fill="#e2ffdf"/><rect x="675.25" y="1042.64" width="6.06" height="5.96" fill="#e4ffde"/><rect x="680.71" y="1042.64" width="6.06" height="5.96" fill="#e6fedd"/><rect x="686.17" y="1042.64" width="6.06" height="5.96" fill="#e8fddc"/><rect x="691.62" y="1042.64" width="6.06" height="5.96" fill="#eafddb"/><rect x="697.08" y="1042.64" width="6.06" height="5.96" fill="#ecfcda"/><rect x="702.54" y="1042.64" width="6.06" height="5.96" fill="#eefbd9"/><rect x="708.00" y="1042.64" width="6.06" height="5.96" fill="#effad8"/><rect x="713.46" y="1042.64" width="6.06" height="5.96" fill="#f1fad7"/><rect x="718.92" y="1042.64" width="6.06" height="5.96" fill="#f3f9d6"/><rect x="724.38" y="1042.64" width="6.06" height="5.96" fill="#f5f8d5"/><rect x="729.83" y="1042.64" width="6.06" height="5.96" fill="#f7f8d4"/><rect x="735.29" y="1042.64" width="6.06" height="5.96" fill="#f9f7d3"/><rect x="740.75" y="1042.64" width="6.06" height="5.96" fill="#faf6d2"/><rect x="746.21" y="1042.64" width="6.06" height="5.96" fill="#fcf6d1"/><rect x="751.67" y="1042.64" width="6.06" height="5.96" fill="#fef5d0"/><rect x="757.12" y="1042.64" width="6.06" height="5.96" fill="#fff3cf"/><rect x="762.58" y="1042.64" width="6.06" height="5.96" fill="#fff1cc"/><rect x="768.04" y="1042.64" width="6.06" height="5.96" fill="#ffefca"/><rect x="773.50" y="1042.64" width="6.06" height="5.96" fill="#ffecc8"/><rect x="778.96" y="1042.64" width="6.06" height="5.96" fill="#ffeac6"/><rect x="784.42" y="1042.64" width="6.06" height="5.96" fill="#ffe8c4"/><rect x="789.88" y="1042.64" width="6.06" height="5.96" fill="#ffe5c2"/><rect x="795.33" y="1042.64" width="6.06" height="5.96" fill="#ffe3c0"/><rect x="800.79" y="1042.64" width="6.06" height="5.96" fill="#ffe0be"/><rect x="806.25" y="1042.64" width="6.06" height="5.96" fill="#ffdebc"/><rect x="811.71" y="1042.64" width="6.06" height="5.96" fill="#ffdcb9"/><rect x="817.17" y="1042.64" width="6.06" height="5.96" fill="#ffd9b7"/><rect x="822.62" y="1042.64" width="6.06" height="5.96" fill="#ffd7b5"/><rect x="828.08" y="1042.64" width="6.06" height="5.96" fill="#ffd5b3"/><rect x="833.54" y="1042.64" width="6.06" height="5.96" fill="#ffd2b1"/><rect x="511.50" y="1048.00" width="6.06" height="5.96" fill="#96ffe2"/><rect x="516.96" y="1048.00" width="6.06" height="5.96" fill="#98ffe2"/><rect x="522.42" y="1048.00" width="6.06" height="5.96" fill="#9bffe2"/><rect x="527.88" y="1048.00" width="6.06" height="5.96" fill="#9dffe2"/><rect x="533.33" y="1048.00" width="6.06" height="5.96" fill="#9fffe3"/><rect x="538.79" y="1048.00" width="6.06" height="5.96" fill="#a2ffe3"/><rect x="544.25" y="1048.00" width="6.06" height="5.96" fill="#a4ffe3"/><rect x="549.71" y="1048.00" width="6.06" height="5.96" fill="#a6ffe3"/><rect x="555.17" y="1048.00" width="6.06" height="5.96" fill="#a9ffe4"/><rect x="560.62" y="1048.00" width="6.06" height="5.96" fill="#abffe4"/><rect x="566.08" y="1048.00" width="6.06" height="5.96" fill="#aeffe4"/><rect x="571.54" y="1048.00" width="6.06" height="5.96" fill="#b0ffe4"/><rect x="577.00" y="1048.00" width="6.06" height="5.96" fill="#b2ffe5"/><rect x="582.46" y="1048.00" width="6.06" height="5.96" fill="#b5ffe5"/><rect x="587.92" y="1048.00" width="6.06" height="5.96" fill="#b7ffe5"/><rect x="593.38" y="1048.00" width="6.06" height="5.96" fill="#baffe5"/><rect x="598.83" y="1048.00" width="6.06" height="5.96" fill="#bdffe5"/><rect x="604.29" y="1048.00" width="6.06" height="5.96" fill="#c0ffe5"/><rect x="609.75" y="1048.00" width="6.06" height="5.96" fill="#c3ffe4"/><rect x="615.21" y="1048.00" width="6.06" height="5.96" fill="#c6ffe4"/><rect x="620.67" y="1048.00" width="6.06" height="5.96" fill="#c9ffe4"/><rect x="626.12" y="1048.00" width="6.06" height="5.96" fill="#ccffe3"/><rect x="631.58" y="1048.00" width="6.06" height="5.96" fill="#cfffe3"/><rect x="637.04" y="1048.00" width="6.06" height="5.96" fill="#d2ffe3"/><rect x="642.50" y="1048.00" width="6.06" height="5.96" fill="#d5ffe3"/><rect x="647.96" y="1048.00" width="6.06" height="5.96" fill="#d8ffe2"/><rect x="653.42" y="1048.00" width="6.06" height="5.96" fill="#dbffe2"/><rect x="658.88" y="1048.00" width="6.06" height="5.96" fill="#ddffe2"/><rect x="664.33" y="1048.00" width="6.06" height="5.96" fill="#e0ffe2"/><rect x="669.79" y="1048.00" width="6.06" height="5.96" fill="#e3ffe1"/><rect x="675.25" y="1048.00" width="6.06" height="5.96" fill="#e6ffe1"/><rect x="680.71" y="1048.00" width="6.06" height="5.96" fill="#e8fedf"/><rect x="686.17" y="1048.00" width="6.06" height="5.96" fill="#e9fdde"/><rect x="691.62" y="1048.00" width="6.06" height="5.96" fill="#ebfcdd"/><rect x="697.08" y="1048.00" width="6.06" height="5.96" fill="#edfbdc"/><rect x="702.54" y="1048.00" width="6.06" height="5.96" fill="#eefadb"/><rect x="708.00" y="1048.00" width="6.06" height="5.96" fill="#f0fada"/><rect x="713.46" y="1048.00" width="6.06" height="5.96" fill="#f2f9d8"/><rect x="718.92" y="1048.00" width="6.06" height="5.96" fill="#f4f8d7"/><rect x="724.38" y="1048.00" width="6.06" height="5.96" fill="#f5f7d6"/><rect x="729.83" y="1048.00" width="6.06" height="5.96" fill="#f7f6d5"/><rect x="735.29" y="1048.00" width="6.06" height="5.96" fill="#f9f6d4"/><rect x="740.75" y="1048.00" width="6.06" height="5.96" fill="#fbf5d3"/><rect x="746.21" y="1048.00" width="6.06" height="5.96" fill="#fcf4d1"/><rect x="751.67" y="1048.00" width="6.06" height="5.96" fill="#fef3d0"/><rect x="757.12" y="1048.00" width="6.06" height="5.96" fill="#fff2cf"/><rect x="762.58" y="1048.00" width="6.06" height="5.96" fill="#ffefcc"/><rect x="768.04" y="1048.00" width="6.06" height="5.96" fill="#ffedca"/><rect x="773.50" y="1048.00" width="6.06" height="5.96" fill="#ffeac8"/><rect x="778.96" y="1048.00" width="6.06" height="5.96" fill="#ffe8c6"/><rect x="784.42" y="1048.00" width="6.06" height="5.96" fill="#ffe6c4"/><rect x="789.88" y="1048.00" width="6.06" height="5.96" fill="#ffe3c2"/><rect x="795.33" y="1048.00" width="6.06" height="5.96" fill="#ffe1c0"/><rect x="800.79" y="1048.00" width="6.06" height="5.96" fill="#ffdebe"/><rect x="806.25" y="1048.00" width="6.06" height="5.96" fill="#ffdcbb"/><rect x="811.71" y="1048.00" width="6.06" height="5.96" fill="#ffdab9"/><rect x="817.17" y="1048.00" width="6.06" height="5.96" fill="#ffd7b7"/><rect x="822.62" y="1048.00" width="6.06" height="5.96" fill="#ffd5b5"/><rect x="828.08" y="1048.00" width="6.06" height="5.96" fill="#ffd2b3"/><rect x="833.54" y="1048.00" width="6.06" height="5.96" fill="#ffd0b1"/><rect x="511.50" y="1053.36" width="6.06" height="5.96" fill="#97ffe4"/><rect x="516.96" y="1053.36" width="6.06" height="5.96" fill="#99ffe5"/><rect x="522.42" y="1053.36" width="6.06" height="5.96" fill="#9cffe5"/><rect x="527.88" y="1053.36" width="6.06" height="5.96" fill="#9effe5"/><rect x="533.33" y="1053.36" width="6.06" height="5.96" fill="#a0ffe5"/><rect x="538.79" y="1053.36" width="6.06" height="5.96" fill="#a3ffe5"/><rect x="544.25" y="1053.36" width="6.06" height="5.96" fill="#a5ffe6"/><rect x="549.71" y="1053.36" width="6.06" height="5.96" fill="#a7ffe6"/><rect x="555.17" y="1053.36" width="6.06" height="5.96" fill="#aaffe6"/><rect x="560.62" y="1053.36" width="6.06" height="5.96" fill="#acffe6"/><rect x="566.08" y="1053.36" width="6.06" height="5.96" fill="#aeffe7"/><rect x="571.54" y="1053.36" width="6.06" height="5.96" fill="#b1ffe7"/><rect x="577.00" y="1053.36" width="6.06" height="5.96" fill="#b3ffe7"/><rect x="582.46" y="1053.36" width="6.06" height="5.96" fill="#b6ffe7"/><rect x="587.92" y="1053.36" width="6.06" height="5.96" fill="#b8ffe8"/><rect x="593.38" y="1053.36" width="6.06" height="5.96" fill="#bbffe8"/><rect x="598.83" y="1053.36" width="6.06" height="5.96" fill="#beffe7"/><rect x="604.29" y="1053.36" width="6.06" height="5.96" fill="#c1ffe7"/><rect x="609.75" y="1053.36" width="6.06" height="5.96" fill="#c4ffe7"/><rect x="615.21" y="1053.36" width="6.06" height="5.96" fill="#c7ffe6"/><rect x="620.67" y="1053.36" width="6.06" height="5.96" fill="#caffe6"/><rect x="626.12" y="1053.36" width="6.06" height="5.96" fill="#cdffe6"/><rect x="631.58" y="1053.36" width="6.06" height="5.96" fill="#d0ffe5"/><rect x="637.04" y="1053.36" width="6.06" height="5.96" fill="#d3ffe5"/><rect x="642.50" y="1053.36" width="6.06" height="5.96" fill="#d6ffe5"/><rect x="647.96" y="1053.36" width="6.06" height="5.96" fill="#d9ffe5"/><rect x="653.42" y="1053.36" width="6.06" height="5.96" fill="#dcffe4"/><rect x="658.88" y="1053.36" width="6.06" height="5.96" fill="#dfffe4"/><rect x="664.33" y="1053.36" width="6.06" height="5.96" fill="#e2ffe4"/><rect x="669.79" y="1053.36" width="6.06" height="5.96" fill="#e5ffe3"/><rect x="675.25" y="1053.36" width="6.06" height="5.96" fill="#e8ffe3"/><rect x="680.71" y="1053.36" width="6.06" height="5.96" fill="#e9fee1"/><rect x="686.17" y="1053.36" width="6.06" height="5.96" fill="#ebfde0"/><rect x="691.62" y="1053.36" width="6.06" height="5.96" fill="#ecfcdf"/><rect x="697.08" y="1053.36" width="6.06" height="5.96" fill="#eefbdd"/><rect x="702.54" y="1053.36" width="6.06" height="5.96" fill="#f0fadc"/><rect x="708.00" y="1053.36" width="6.06" height="5.96" fill="#f1f9da"/><rect x="713.46" y="1053.36" width="6.06" height="5.96" fill="#f3f8d9"/><rect x="718.92" y="1053.36" width="6.06" height="5.96" fill="#f4f7d8"/><rect x="724.38" y="1053.36" width="6.06" height="5.96" fill="#f6f6d6"/><rect x="729.83" y="1053.36" width="6.06" height="5.96" fill="#f8f5d5"/><rect x="735.29" y="1053.36" width="6.06" height="5.96" fill="#f9f4d4"/><rect x="740.75" y="1053.36" width="6.06" height="5.96" fill="#fbf3d2"/><rect x="746.21" y="1053.36" width="6.06" height="5.96" fill="#fdf2d1"/><rect x="751.67" y="1053.36" width="6.06" height="5.96" fill="#fef1d0"/><rect x="757.12" y="1053.36" width="6.06" height="5.96" fill="#ffefce"/><rect x="762.58" y="1053.36" width="6.06" height="5.96" fill="#ffedcc"/><rect x="768.04" y="1053.36" width="6.06" height="5.96" fill="#ffeaca"/><rect x="773.50" y="1053.36" width="6.06" height="5.96" fill="#ffe8c7"/><rect x="778.96" y="1053.36" width="6.06" height="5.96" fill="#ffe5c5"/><rect x="784.42" y="1053.36" width="6.06" height="5.96" fill="#ffe3c3"/><rect x="789.88" y="1053.36" width="6.06" height="5.96" fill="#ffe1c1"/><rect x="795.33" y="1053.36" width="6.06" height="5.96" fill="#ffdebf"/><rect x="800.79" y="1053.36" width="6.06" height="5.96" fill="#ffdcbd"/><rect x="806.25" y="1053.36" width="6.06" height="5.96" fill="#ffd9bb"/><rect x="811.71" y="1053.36" width="6.06" height="5.96" fill="#ffd7b9"/><rect x="817.17" y="1053.36" width="6.06" height="5.96" fill="#ffd5b6"/><rect x="822.62" y="1053.36" width="6.06" height="5.96" fill="#ffd2b4"/><rect x="828.08" y="1053.36" width="6.06" height="5.96" fill="#ffd0b2"/><rect x="833.54" y="1053.36" width="6.06" height="5.96" fill="#ffcdb0"/><rect x="511.50" y="1058.73" width="6.06" height="5.96" fill="#98ffe7"/><rect x="516.96" y="1058.73" width="6.06" height="5.96" fill="#9affe7"/><rect x="522.42" y="1058.73" width="6.06" height="5.96" fill="#9dffe8"/><rect x="527.88" y="1058.73" width="6.06" height="5.96" fill="#9fffe8"/><rect x="533.33" y="1058.73" width="6.06" height="5.96" fill="#a1ffe8"/><rect x="538.79" y="1058.73" width="6.06" height="5.96" fill="#a4ffe8"/><rect x="544.25" y="1058.73" width="6.06" height="5.96" fill="#a6ffe8"/><rect x="549.71" y="1058.73" width="6.06" height="5.96" fill="#a8ffe9"/><rect x="555.17" y="1058.73" width="6.06" height="5.96" fill="#abffe9"/><rect x="560.62" y="1058.73" width="6.06" height="5.96" fill="#adffe9"/><rect x="566.08" y="1058.73" width="6.06" height="5.96" fill="#afffe9"/><rect x="571.54" y="1058.73" width="6.06" height="5.96" fill="#b2ffe9"/><rect x="577.00" y="1058.73" width="6.06" height="5.96" fill="#b4ffea"/><rect x="582.46" y="1058.73" width="6.06" height="5.96" fill="#b6ffea"/><rect x="587.92" y="1058.73" width="6.06" height="5.96" fill="#b9ffea"/><rect x="593.38" y="1058.73" width="6.06" height="5.96" fill="#bbffea"/><rect x="598.83" y="1058.73" width="6.06" height="5.96" fill="#beffea"/><rect x="604.29" y="1058.73" width="6.06" height="5.96" fill="#c2ffe9"/><rect x="609.75" y="1058.73" width="6.06" height="5.96" fill="#c5ffe9"/><rect x="615.21" y="1058.73" width="6.06" height="5.96" fill="#c8ffe9"/><rect x="620.67" y="1058.73" width="6.06" height="5.96" fill="#cbffe8"/><rect x="626.12" y="1058.73" width="6.06" height="5.96" fill="#ceffe8"/><rect x="631.58" y="1058.73" width="6.06" height="5.96" fill="#d1ffe8"/><rect x="637.04" y="1058.73" width="6.06" height="5.96" fill="#d4ffe7"/><rect x="642.50" y="1058.73" width="6.06" height="5.96" fill="#d7ffe7"/><rect x="647.96" y="1058.73" width="6.06" height="5.96" fill="#dbffe7"/><rect x="653.42" y="1058.73" width="6.06" height="5.96" fill="#deffe7"/><rect x="658.88" y="1058.73" width="6.06" height="5.96" fill="#e1ffe6"/><rect x="664.33" y="1058.73" width="6.06" height="5.96" fill="#e4ffe6"/><rect x="669.79" y="1058.73" width="6.06" height="5.96" fill="#e7ffe6"/><rect x="675.25" y="1058.73" width="6.06" height="5.96" fill="#e9fee5"/><rect x="680.71" y="1058.73" width="6.06" height="5.96" fill="#ebfde3"/><rect x="686.17" y="1058.73" width="6.06" height="5.96" fill="#ecfce2"/><rect x="691.62" y="1058.73" width="6.06" height="5.96" fill="#eefbe0"/><rect x="697.08" y="1058.73" width="6.06" height="5.96" fill="#effade"/><rect x="702.54" y="1058.73" width="6.06" height="5.96" fill="#f1f9dd"/><rect x="708.00" y="1058.73" width="6.06" height="5.96" fill="#f2f7db"/><rect x="713.46" y="1058.73" width="6.06" height="5.96" fill="#f4f6da"/><rect x="718.92" y="1058.73" width="6.06" height="5.96" fill="#f5f5d8"/><rect x="724.38" y="1058.73" width="6.06" height="5.96" fill="#f7f4d7"/><rect x="729.83" y="1058.73" width="6.06" height="5.96" fill="#f8f3d5"/><rect x="735.29" y="1058.73" width="6.06" height="5.96" fill="#faf2d4"/><rect x="740.75" y="1058.73" width="6.06" height="5.96" fill="#fbf1d2"/><rect x="746.21" y="1058.73" width="6.06" height="5.96" fill="#fdefd1"/><rect x="751.67" y="1058.73" width="6.06" height="5.96" fill="#feeecf"/><rect x="757.12" y="1058.73" width="6.06" height="5.96" fill="#ffeccd"/><rect x="762.58" y="1058.73" width="6.06" height="5.96" fill="#ffeacb"/><rect x="768.04" y="1058.73" width="6.06" height="5.96" fill="#ffe8c9"/><rect x="773.50" y="1058.73" width="6.06" height="5.96" fill="#ffe5c7"/><rect x="778.96" y="1058.73" width="6.06" height="5.96" fill="#ffe3c5"/><rect x="784.42" y="1058.73" width="6.06" height="5.96" fill="#ffe0c2"/><rect x="789.88" y="1058.73" width="6.06" height="5.96" fill="#ffdec0"/><rect x="795.33" y="1058.73" width="6.06" height="5.96" fill="#ffdcbe"/><rect x="800.79" y="1058.73" width="6.06" height="5.96" fill="#ffd9bc"/><rect x="806.25" y="1058.73" width="6.06" height="5.96" fill="#ffd7ba"/><rect x="811.71" y="1058.73" width="6.06" height="5.96" fill="#ffd4b8"/><rect x="817.17" y="1058.73" width="6.06" height="5.96" fill="#ffd2b6"/><rect x="822.62" y="1058.73" width="6.06" height="5.96" fill="#ffd0b4"/><rect x="828.08" y="1058.73" width="6.06" height="5.96" fill="#ffcdb1"/><rect x="833.54" y="1058.73" width="6.06" height="5.96" fill="#ffcbaf"/><rect x="511.50" y="1064.09" width="6.06" height="5.96" fill="#99ffea"/><rect x="516.96" y="1064.09" width="6.06" height="5.96" fill="#9bffea"/><rect x="522.42" y="1064.09" width="6.06" height="5.96" fill="#9effea"/><rect x="527.88" y="1064.09" width="6.06" height="5.96" fill="#a0ffea"/><rect x="533.33" y="1064.09" width="6.06" height="5.96" fill="#a2ffeb"/><rect x="538.79" y="1064.09" width="6.06" height="5.96" fill="#a5ffeb"/><rect x="544.25" y="1064.09" width="6.06" height="5.96" fill="#a7ffeb"/><rect x="549.71" y="1064.09" width="6.06" height="5.96" fill="#a9ffeb"/><rect x="555.17" y="1064.09" width="6.06" height="5.96" fill="#abffeb"/><rect x="560.62" y="1064.09" width="6.06" height="5.96" fill="#aeffec"/><rect x="566.08" y="1064.09" width="6.06" height="5.96" fill="#b0ffec"/><rect x="571.54" y="1064.09" width="6.06" height="5.96" fill="#b2ffec"/><rect x="577.00" y="1064.09" width="6.06" height="5.96" fill="#b5ffec"/><rect x="582.46" y="1064.09" width="6.06" height="5.96" fill="#b7ffec"/><rect x="587.92" y="1064.09" width="6.06" height="5.96" fill="#b9ffec"/><rect x="593.38" y="1064.09" width="6.06" height="5.96" fill="#bcffec"/><rect x="598.83" y="1064.09" width="6.06" height="5.96" fill="#bfffec"/><rect x="604.29" y="1064.09" width="6.06" height="5.96" fill="#c3ffec"/><rect x="609.75" y="1064.09" width="6.06" height="5.96" fill="#c6ffeb"/><rect x="615.21" y="1064.09" width="6.06" height="5.96" fill="#c9ffeb"/><rect x="620.67" y="1064.09" width="6.06" height="5.96" fill="#ccffeb"/><rect x="626.12" y="1064.09" width="6.06" height="5.96" fill="#cfffea"/><rect x="631.58" y="1064.09" width="6.06" height="5.96" fill="#d2ffea"/><rect x="637.04" y="1064.09" width="6.06" height="5.96" fill="#d6ffea"/><rect x="642.50" y="1064.09" width="6.06" height="5.96" fill="#d9ffe9"/><rect x="647.96" y="1064.09" width="6.06" height="5.96" fill="#dcffe9"/><rect x="653.42" y="1064.09" width="6.06" height="5.96" fill="#dfffe9"/><rect x="658.88" y="1064.09" width="6.06" height="5.96" fill="#e2ffe8"/><rect x="664.33" y="1064.09" width="6.06" height="5.96" fill="#e6ffe8"/><rect x="669.79" y="1064.09" width="6.06" height="5.96" fill="#e9ffe8"/><rect x="675.25" y="1064.09" width="6.06" height="5.96" fill="#ebfee7"/><rect x="680.71" y="1064.09" width="6.06" height="5.96" fill="#ecfde5"/><rect x="686.17" y="1064.09" width="6.06" height="5.96" fill="#eefce3"/><rect x="691.62" y="1064.09" width="6.06" height="5.96" fill="#effae2"/><rect x="697.08" y="1064.09" width="6.06" height="5.96" fill="#f1f9e0"/><rect x="702.54" y="1064.09" width="6.06" height="5.96" fill="#f2f8de"/><rect x="708.00" y="1064.09" width="6.06" height="5.96" fill="#f3f6dc"/><rect x="713.46" y="1064.09" width="6.06" height="5.96" fill="#f5f5db"/><rect x="718.92" y="1064.09" width="6.06" height="5.96" fill="#f6f4d9"/><rect x="724.38" y="1064.09" width="6.06" height="5.96" fill="#f7f2d7"/><rect x="729.83" y="1064.09" width="6.06" height="5.96" fill="#f9f1d5"/><rect x="735.29" y="1064.09" width="6.06" height="5.96" fill="#faf0d4"/><rect x="740.75" y="1064.09" width="6.06" height="5.96" fill="#fceed2"/><rect x="746.21" y="1064.09" width="6.06" height="5.96" fill="#fdedd0"/><rect x="751.67" y="1064.09" width="6.06" height="5.96" fill="#feecce"/><rect x="757.12" y="1064.09" width="6.06" height="5.96" fill="#ffeacc"/><rect x="762.58" y="1064.09" width="6.06" height="5.96" fill="#ffe7ca"/><rect x="768.04" y="1064.09" width="6.06" height="5.96" fill="#ffe5c8"/><rect x="773.50" y="1064.09" width="6.06" height="5.96" fill="#ffe3c6"/><rect x="778.96" y="1064.09" width="6.06" height="5.96" fill="#ffe0c4"/><rect x="784.42" y="1064.09" width="6.06" height="5.96" fill="#ffdec2"/><rect x="789.88" y="1064.09" width="6.06" height="5.96" fill="#ffdbc0"/><rect x="795.33" y="1064.09" width="6.06" height="5.96" fill="#ffd9bd"/><rect x="800.79" y="1064.09" width="6.06" height="5.96" fill="#ffd7bb"/><rect x="806.25" y="1064.09" width="6.06" height="5.96" fill="#ffd4b9"/><rect x="811.71" y="1064.09" width="6.06" height="5.96" fill="#ffd2b7"/><rect x="817.17" y="1064.09" width="6.06" height="5.96" fill="#ffcfb5"/><rect x="822.62" y="1064.09" width="6.06" height="5.96" fill="#ffcdb3"/><rect x="828.08" y="1064.09" width="6.06" height="5.96" fill="#ffcbb1"/><rect x="833.54" y="1064.09" width="6.06" height="5.96" fill="#ffc8af"/><rect x="511.50" y="1069.45" width="6.06" height="5.96" fill="#9affed"/><rect x="516.96" y="1069.45" width="6.06" height="5.96" fill="#9cffed"/><rect x="522.42" y="1069.45" width="6.06" height="5.96" fill="#9fffed"/><rect x="527.88" y="1069.45" width="6.06" height="5.96" fill="#a1ffed"/><rect x="533.33" y="1069.45" width="6.06" height="5.96" fill="#a3ffed"/><rect x="538.79" y="1069.45" width="6.06" height="5.96" fill="#a6ffee"/><rect x="544.25" y="1069.45" width="6.06" height="5.96" fill="#a8ffee"/><rect x="549.71" y="1069.45" width="6.06" height="5.96" fill="#aaffee"/><rect x="555.17" y="1069.45" width="6.06" height="5.96" fill="#acffee"/><rect x="560.62" y="1069.45" width="6.06" height="5.96" fill="#afffee"/><rect x="566.08" y="1069.45" width="6.06" height="5.96" fill="#b1ffee"/><rect x="571.54" y="1069.45" width="6.06" height="5.96" fill="#b3ffee"/><rect x="577.00" y="1069.45" width="6.06" height="5.96" fill="#b6ffef"/><rect x="582.46" y="1069.45" width="6.06" height="5.96" fill="#b8ffef"/><rect x="587.92" y="1069.45" width="6.06" height="5.96" fill="#baffef"/><rect x="593.38" y="1069.45" width="6.06" height="5.96" fill="#bdffef"/><rect x="598.83" y="1069.45" width="6.06" height="5.96" fill="#c0ffef"/><rect x="604.29" y="1069.45" width="6.06" height="5.96" fill="#c3ffee"/><rect x="609.75" y="1069.45" width="6.06" height="5.96" fill="#c7ffee"/><rect x="615.21" y="1069.45" width="6.06" height="5.96" fill="#caffed"/><rect x="620.67" y="1069.45" width="6.06" height="5.96" fill="#cdffed"/><rect x="626.12" y="1069.45" width="6.06" height="5.96" fill="#d0ffed"/><rect x="631.58" y="1069.45" width="6.06" height="5.96" fill="#d4ffec"/><rect x="637.04" y="1069.45" width="6.06" height="5.96" fill="#d7ffec"/><rect x="642.50" y="1069.45" width="6.06" height="5.96" fill="#daffec"/><rect x="647.96" y="1069.45" width="6.06" height="5.96" fill="#deffeb"/><rect x="653.42" y="1069.45" width="6.06" height="5.96" fill="#e1ffeb"/><rect x="658.88" y="1069.45" width="6.06" height="5.96" fill="#e4ffeb"/><rect x="664.33" y="1069.45" width="6.06" height="5.96" fill="#e7ffea"/><rect x="669.79" y="1069.45" width="6.06" height="5.96" fill="#ebffea"/><rect x="675.25" y="1069.45" width="6.06" height="5.96" fill="#edfee9"/><rect x="680.71" y="1069.45" width="6.06" height="5.96" fill="#eefde7"/><rect x="686.17" y="1069.45" width="6.06" height="5.96" fill="#effbe5"/><rect x="691.62" y="1069.45" width="6.06" height="5.96" fill="#f1fae3"/><rect x="697.08" y="1069.45" width="6.06" height="5.96" fill="#f2f8e1"/><rect x="702.54" y="1069.45" width="6.06" height="5.96" fill="#f3f7df"/><rect x="708.00" y="1069.45" width="6.06" height="5.96" fill="#f4f5dd"/><rect x="713.46" y="1069.45" width="6.06" height="5.96" fill="#f6f4db"/><rect x="718.92" y="1069.45" width="6.06" height="5.96" fill="#f7f2d9"/><rect x="724.38" y="1069.45" width="6.06" height="5.96" fill="#f8f1d7"/><rect x="729.83" y="1069.45" width="6.06" height="5.96" fill="#f9efd5"/><rect x="735.29" y="1069.45" width="6.06" height="5.96" fill="#fbeed4"/><rect x="740.75" y="1069.45" width="6.06" height="5.96" fill="#fcecd2"/><rect x="746.21" y="1069.45" width="6.06" height="5.96" fill="#fdebd0"/><rect x="751.67" y="1069.45" width="6.06" height="5.96" fill="#fee9ce"/><rect x="757.12" y="1069.45" width="6.06" height="5.96" fill="#ffe7cc"/><rect x="762.58" y="1069.45" width="6.06" height="5.96" fill="#ffe5ca"/><rect x="768.04" y="1069.45" width="6.06" height="5.96" fill="#ffe3c7"/><rect x="773.50" y="1069.45" width="6.06" height="5.96" fill="#ffe0c5"/><rect x="778.96" y="1069.45" width="6.06" height="5.96" fill="#ffdec3"/><rect x="784.42" y="1069.45" width="6.06" height="5.96" fill="#ffdbc1"/><rect x="789.88" y="1069.45" width="6.06" height="5.96" fill="#ffd9bf"/><rect x="795.33" y="1069.45" width="6.06" height="5.96" fill="#ffd7bd"/><rect x="800.79" y="1069.45" width="6.06" height="5.96" fill="#ffd4bb"/><rect x="806.25" y="1069.45" width="6.06" height="5.96" fill="#ffd2b8"/><rect x="811.71" y="1069.45" width="6.06" height="5.96" fill="#ffcfb6"/><rect x="817.17" y="1069.45" width="6.06" height="5.96" fill="#ffcdb4"/><rect x="822.62" y="1069.45" width="6.06" height="5.96" fill="#ffcbb2"/><rect x="828.08" y="1069.45" width="6.06" height="5.96" fill="#ffc8b0"/><rect x="833.54" y="1069.45" width="6.06" height="5.96" fill="#ffc6ae"/><rect x="511.50" y="1074.82" width="6.06" height="5.96" fill="#9bfff0"/><rect x="516.96" y="1074.82" width="6.06" height="5.96" fill="#9dfff0"/><rect x="522.42" y="1074.82" width="6.06" height="5.96" fill="#a0fff0"/><rect x="527.88" y="1074.82" width="6.06" height="5.96" fill="#a2fff0"/><rect x="533.33" y="1074.82" width="6.06" height="5.96" fill="#a4fff0"/><rect x="538.79" y="1074.82" width="6.06" height="5.96" fill="#a6fff0"/><rect x="544.25" y="1074.82" width="6.06" height="5.96" fill="#a9fff0"/><rect x="549.71" y="1074.82" width="6.06" height="5.96" fill="#abfff0"/><rect x="555.17" y="1074.82" width="6.06" height="5.96" fill="#adfff1"/><rect x="560.62" y="1074.82" width="6.06" height="5.96" fill="#b0fff1"/><rect x="566.08" y="1074.82" width="6.06" height="5.96" fill="#b2fff1"/><rect x="571.54" y="1074.82" width="6.06" height="5.96" fill="#b4fff1"/><rect x="577.00" y="1074.82" width="6.06" height="5.96" fill="#b6fff1"/><rect x="582.46" y="1074.82" width="6.06" height="5.96" fill="#b9fff1"/><rect x="587.92" y="1074.82" width="6.06" height="5.96" fill="#bbfff1"/><rect x="593.38" y="1074.82" width="6.06" height="5.96" fill="#befff1"/><rect x="598.83" y="1074.82" width="6.06" height="5.96" fill="#c1fff1"/><rect x="604.29" y="1074.82" width="6.06" height="5.96" fill="#c4fff1"/><rect x="609.75" y="1074.82" width="6.06" height="5.96" fill="#c8fff0"/><rect x="615.21" y="1074.82" width="6.06" height="5.96" fill="#cbfff0"/><rect x="620.67" y="1074.82" width="6.06" height="5.96" fill="#ceffef"/><rect x="626.12" y="1074.82" width="6.06" height="5.96" fill="#d2ffef"/><rect x="631.58" y="1074.82" width="6.06" height="5.96" fill="#d5ffef"/><rect x="637.04" y="1074.82" width="6.06" height="5.96" fill="#d8ffee"/><rect x="642.50" y="1074.82" width="6.06" height="5.96" fill="#dcffee"/><rect x="647.96" y="1074.82" width="6.06" height="5.96" fill="#dfffee"/><rect x="653.42" y="1074.82" width="6.06" height="5.96" fill="#e2ffed"/><rect x="658.88" y="1074.82" width="6.06" height="5.96" fill="#e6ffed"/><rect x="664.33" y="1074.82" width="6.06" height="5.96" fill="#e9ffed"/><rect x="669.79" y="1074.82" width="6.06" height="5.96" fill="#ecffec"/><rect x="675.25" y="1074.82" width="6.06" height="5.96" fill="#effeeb"/><rect x="680.71" y="1074.82" width="6.06" height="5.96" fill="#f0fce9"/><rect x="686.17" y="1074.82" width="6.06" height="5.96" fill="#f1fbe7"/><rect x="691.62" y="1074.82" width="6.06" height="5.96" fill="#f2f9e5"/><rect x="697.08" y="1074.82" width="6.06" height="5.96" fill="#f3f8e2"/><rect x="702.54" y="1074.82" width="6.06" height="5.96" fill="#f4f6e0"/><rect x="708.00" y="1074.82" width="6.06" height="5.96" fill="#f5f4de"/><rect x="713.46" y="1074.82" width="6.06" height="5.96" fill="#f6f2dc"/><rect x="718.92" y="1074.82" width="6.06" height="5.96" fill="#f8f1da"/><rect x="724.38" y="1074.82" width="6.06" height="5.96" fill="#f9efd8"/><rect x="729.83" y="1074.82" width="6.06" height="5.96" fill="#faeed6"/><rect x="735.29" y="1074.82" width="6.06" height="5.96" fill="#fbecd3"/><rect x="740.75" y="1074.82" width="6.06" height="5.96" fill="#fcead1"/><rect x="746.21" y="1074.82" width="6.06" height="5.96" fill="#fde8cf"/><rect x="751.67" y="1074.82" width="6.06" height="5.96" fill="#fee7cd"/><rect x="757.12" y="1074.82" width="6.06" height="5.96" fill="#ffe5cb"/><rect x="762.58" y="1074.82" width="6.06" height="5.96" fill="#ffe2c9"/><rect x="768.04" y="1074.82" width="6.06" height="5.96" fill="#ffe0c7"/><rect x="773.50" y="1074.82" width="6.06" height="5.96" fill="#ffdec5"/><rect x="778.96" y="1074.82" width="6.06" height="5.96" fill="#ffdbc2"/><rect x="784.42" y="1074.82" width="6.06" height="5.96" fill="#ffd9c0"/><rect x="789.88" y="1074.82" width="6.06" height="5.96" fill="#ffd6be"/><rect x="795.33" y="1074.82" width="6.06" height="5.96" fill="#ffd4bc"/><rect x="800.79" y="1074.82" width="6.06" height="5.96" fill="#ffd2ba"/><rect x="806.25" y="1074.82" width="6.06" height="5.96" fill="#ffcfb8"/><rect x="811.71" y="1074.82" width="6.06" height="5.96" fill="#ffcdb6"/><rect x="817.17" y="1074.82" width="6.06" height="5.96" fill="#ffcab3"/><rect x="822.62" y="1074.82" width="6.06" height="5.96" fill="#ffc8b1"/><rect x="828.08" y="1074.82" width="6.06" height="5.96" fill="#ffc6af"/><rect x="833.54" y="1074.82" width="6.06" height="5.96" fill="#ffc3ad"/><rect x="511.50" y="1080.18" width="6.06" height="5.96" fill="#9cfff2"/><rect x="516.96" y="1080.18" width="6.06" height="5.96" fill="#9efff2"/><rect x="522.42" y="1080.18" width="6.06" height="5.96" fill="#a1fff3"/><rect x="527.88" y="1080.18" width="6.06" height="5.96" fill="#a3fff3"/><rect x="533.33" y="1080.18" width="6.06" height="5.96" fill="#a5fff3"/><rect x="538.79" y="1080.18" width="6.06" height="5.96" fill="#a7fff3"/><rect x="544.25" y="1080.18" width="6.06" height="5.96" fill="#aafff3"/><rect x="549.71" y="1080.18" width="6.06" height="5.96" fill="#acfff3"/><rect x="555.17" y="1080.18" width="6.06" height="5.96" fill="#aefff3"/><rect x="560.62" y="1080.18" width="6.06" height="5.96" fill="#b0fff3"/><rect x="566.08" y="1080.18" width="6.06" height="5.96" fill="#b3fff3"/><rect x="571.54" y="1080.18" width="6.06" height="5.96" fill="#b5fff4"/><rect x="577.00" y="1080.18" width="6.06" height="5.96" fill="#b7fff4"/><rect x="582.46" y="1080.18" width="6.06" height="5.96" fill="#b9fff4"/><rect x="587.92" y="1080.18" width="6.06" height="5.96" fill="#bcfff4"/><rect x="593.38" y="1080.18" width="6.06" height="5.96" fill="#befff4"/><rect x="598.83" y="1080.18" width="6.06" height="5.96" fill="#c2fff3"/><rect x="604.29" y="1080.18" width="6.06" height="5.96" fill="#c5fff3"/><rect x="609.75" y="1080.18" width="6.06" height="5.96" fill="#c9fff3"/><rect x="615.21" y="1080.18" width="6.06" height="5.96" fill="#ccfff2"/><rect x="620.67" y="1080.18" width="6.06" height="5.96" fill="#cffff2"/><rect x="626.12" y="1080.18" width="6.06" height="5.96" fill="#d3fff1"/><rect x="631.58" y="1080.18" width="6.06" height="5.96" fill="#d6fff1"/><rect x="637.04" y="1080.18" width="6.06" height="5.96" fill="#dafff1"/><rect x="642.50" y="1080.18" width="6.06" height="5.96" fill="#ddfff0"/><rect x="647.96" y="1080.18" width="6.06" height="5.96" fill="#e0fff0"/><rect x="653.42" y="1080.18" width="6.06" height="5.96" fill="#e4fff0"/><rect x="658.88" y="1080.18" width="6.06" height="5.96" fill="#e7ffef"/><rect x="664.33" y="1080.18" width="6.06" height="5.96" fill="#ebffef"/><rect x="669.79" y="1080.18" width="6.06" height="5.96" fill="#eeffee"/><rect x="675.25" y="1080.18" width="6.06" height="5.96" fill="#f0feed"/><rect x="680.71" y="1080.18" width="6.06" height="5.96" fill="#f1fceb"/><rect x="686.17" y="1080.18" width="6.06" height="5.96" fill="#f2fae8"/><rect x="691.62" y="1080.18" width="6.06" height="5.96" fill="#f3f9e6"/><rect x="697.08" y="1080.18" width="6.06" height="5.96" fill="#f4f7e4"/><rect x="702.54" y="1080.18" width="6.06" height="5.96" fill="#f5f5e1"/><rect x="708.00" y="1080.18" width="6.06" height="5.96" fill="#f6f3df"/><rect x="713.46" y="1080.18" width="6.06" height="5.96" fill="#f7f1dd"/><rect x="718.92" y="1080.18" width="6.06" height="5.96" fill="#f8efda"/><rect x="724.38" y="1080.18" width="6.06" height="5.96" fill="#f9eed8"/><rect x="729.83" y="1080.18" width="6.06" height="5.96" fill="#faecd6"/><rect x="735.29" y="1080.18" width="6.06" height="5.96" fill="#fbead3"/><rect x="740.75" y="1080.18" width="6.06" height="5.96" fill="#fce8d1"/><rect x="746.21" y="1080.18" width="6.06" height="5.96" fill="#fde6cf"/><rect x="751.67" y="1080.18" width="6.06" height="5.96" fill="#fee4cc"/><rect x="757.12" y="1080.18" width="6.06" height="5.96" fill="#ffe2ca"/><rect x="762.58" y="1080.18" width="6.06" height="5.96" fill="#ffe0c8"/><rect x="768.04" y="1080.18" width="6.06" height="5.96" fill="#ffddc6"/><rect x="773.50" y="1080.18" width="6.06" height="5.96" fill="#ffdbc4"/><rect x="778.96" y="1080.18" width="6.06" height="5.96" fill="#ffd9c2"/><rect x="784.42" y="1080.18" width="6.06" height="5.96" fill="#ffd6c0"/><rect x="789.88" y="1080.18" width="6.06" height="5.96" fill="#ffd4bd"/><rect x="795.33" y="1080.18" width="6.06" height="5.96" fill="#ffd1bb"/><rect x="800.79" y="1080.18" width="6.06" height="5.96" fill="#ffcfb9"/><rect x="806.25" y="1080.18" width="6.06" height="5.96" fill="#ffcdb7"/><rect x="811.71" y="1080.18" width="6.06" height="5.96" fill="#ffcab5"/><rect x="817.17" y="1080.18" width="6.06" height="5.96" fill="#ffc8b3"/><rect x="822.62" y="1080.18" width="6.06" height="5.96" fill="#ffc5b1"/><rect x="828.08" y="1080.18" width="6.06" height="5.96" fill="#ffc3ae"/><rect x="833.54" y="1080.18" width="6.06" height="5.96" fill="#ffc1ac"/><rect x="511.50" y="1085.55" width="6.06" height="5.96" fill="#9dfff5"/><rect x="516.96" y="1085.55" width="6.06" height="5.96" fill="#a0fff5"/><rect x="522.42" y="1085.55" width="6.06" height="5.96" fill="#a2fff5"/><rect x="527.88" y="1085.55" width="6.06" height="5.96" fill="#a4fff5"/><rect x="533.33" y="1085.55" width="6.06" height="5.96" fill="#a6fff6"/><rect x="538.79" y="1085.55" width="6.06" height="5.96" fill="#a8fff6"/><rect x="544.25" y="1085.55" width="6.06" height="5.96" fill="#abfff6"/><rect x="549.71" y="1085.55" width="6.06" height="5.96" fill="#adfff6"/><rect x="555.17" y="1085.55" width="6.06" height="5.96" fill="#affff6"/><rect x="560.62" y="1085.55" width="6.06" height="5.96" fill="#b1fff6"/><rect x="566.08" y="1085.55" width="6.06" height="5.96" fill="#b3fff6"/><rect x="571.54" y="1085.55" width="6.06" height="5.96" fill="#b6fff6"/><rect x="577.00" y="1085.55" width="6.06" height="5.96" fill="#b8fff6"/><rect x="582.46" y="1085.55" width="6.06" height="5.96" fill="#bafff6"/><rect x="587.92" y="1085.55" width="6.06" height="5.96" fill="#bcfff6"/><rect x="593.38" y="1085.55" width="6.06" height="5.96" fill="#bffff6"/><rect x="598.83" y="1085.55" width="6.06" height="5.96" fill="#c3fff6"/><rect x="604.29" y="1085.55" width="6.06" height="5.96" fill="#c6fff5"/><rect x="609.75" y="1085.55" width="6.06" height="5.96" fill="#cafff5"/><rect x="615.21" y="1085.55" width="6.06" height="5.96" fill="#cdfff5"/><rect x="620.67" y="1085.55" width="6.06" height="5.96" fill="#d1fff4"/><rect x="626.12" y="1085.55" width="6.06" height="5.96" fill="#d4fff4"/><rect x="631.58" y="1085.55" width="6.06" height="5.96" fill="#d8fff3"/><rect x="637.04" y="1085.55" width="6.06" height="5.96" fill="#dbfff3"/><rect x="642.50" y="1085.55" width="6.06" height="5.96" fill="#dffff3"/><rect x="647.96" y="1085.55" width="6.06" height="5.96" fill="#e2fff2"/><rect x="653.42" y="1085.55" width="6.06" height="5.96" fill="#e5fff2"/><rect x="658.88" y="1085.55" width="6.06" height="5.96" fill="#e9fff1"/><rect x="664.33" y="1085.55" width="6.06" height="5.96" fill="#ecfff1"/><rect x="669.79" y="1085.55" width="6.06" height="5.96" fill="#f0fff1"/><rect x="675.25" y="1085.55" width="6.06" height="5.96" fill="#f2feef"/><rect x="680.71" y="1085.55" width="6.06" height="5.96" fill="#f3fced"/><rect x="686.17" y="1085.55" width="6.06" height="5.96" fill="#f4faea"/><rect x="691.62" y="1085.55" width="6.06" height="5.96" fill="#f5f8e8"/><rect x="697.08" y="1085.55" width="6.06" height="5.96" fill="#f6f6e5"/><rect x="702.54" y="1085.55" width="6.06" height="5.96" fill="#f7f4e2"/><rect x="708.00" y="1085.55" width="6.06" height="5.96" fill="#f7f2e0"/><rect x="713.46" y="1085.55" width="6.06" height="5.96" fill="#f8f0dd"/><rect x="718.92" y="1085.55" width="6.06" height="5.96" fill="#f9eedb"/><rect x="724.38" y="1085.55" width="6.06" height="5.96" fill="#faecd8"/><rect x="729.83" y="1085.55" width="6.06" height="5.96" fill="#fbead6"/><rect x="735.29" y="1085.55" width="6.06" height="5.96" fill="#fce8d3"/><rect x="740.75" y="1085.55" width="6.06" height="5.96" fill="#fde6d1"/><rect x="746.21" y="1085.55" width="6.06" height="5.96" fill="#fee4ce"/><rect x="751.67" y="1085.55" width="6.06" height="5.96" fill="#ffe2cc"/><rect x="757.12" y="1085.55" width="6.06" height="5.96" fill="#ffe0c9"/><rect x="762.58" y="1085.55" width="6.06" height="5.96" fill="#ffddc7"/><rect x="768.04" y="1085.55" width="6.06" height="5.96" fill="#ffdbc5"/><rect x="773.50" y="1085.55" width="6.06" height="5.96" fill="#ffd9c3"/><rect x="778.96" y="1085.55" width="6.06" height="5.96" fill="#ffd6c1"/><rect x="784.42" y="1085.55" width="6.06" height="5.96" fill="#ffd4bf"/><rect x="789.88" y="1085.55" width="6.06" height="5.96" fill="#ffd1bd"/><rect x="795.33" y="1085.55" width="6.06" height="5.96" fill="#ffcfbb"/><rect x="800.79" y="1085.55" width="6.06" height="5.96" fill="#ffcdb8"/><rect x="806.25" y="1085.55" width="6.06" height="5.96" fill="#ffcab6"/><rect x="811.71" y="1085.55" width="6.06" height="5.96" fill="#ffc8b4"/><rect x="817.17" y="1085.55" width="6.06" height="5.96" fill="#ffc5b2"/><rect x="822.62" y="1085.55" width="6.06" height="5.96" fill="#ffc3b0"/><rect x="828.08" y="1085.55" width="6.06" height="5.96" fill="#ffc1ae"/><rect x="833.54" y="1085.55" width="6.06" height="5.96" fill="#ffbeac"/><rect x="511.50" y="1090.91" width="6.06" height="5.96" fill="#9efff8"/><rect x="516.96" y="1090.91" width="6.06" height="5.96" fill="#a1fff8"/><rect x="522.42" y="1090.91" width="6.06" height="5.96" fill="#a3fff8"/><rect x="527.88" y="1090.91" width="6.06" height="5.96" fill="#a5fff8"/><rect x="533.33" y="1090.91" width="6.06" height="5.96" fill="#a7fff8"/><rect x="538.79" y="1090.91" width="6.06" height="5.96" fill="#a9fff8"/><rect x="544.25" y="1090.91" width="6.06" height="5.96" fill="#acfff8"/><rect x="549.71" y="1090.91" width="6.06" height="5.96" fill="#aefff8"/><rect x="555.17" y="1090.91" width="6.06" height="5.96" fill="#b0fff8"/><rect x="560.62" y="1090.91" width="6.06" height="5.96" fill="#b2fff9"/><rect x="566.08" y="1090.91" width="6.06" height="5.96" fill="#b4fff9"/><rect x="571.54" y="1090.91" width="6.06" height="5.96" fill="#b7fff9"/><rect x="577.00" y="1090.91" width="6.06" height="5.96" fill="#b9fff9"/><rect x="582.46" y="1090.91" width="6.06" height="5.96" fill="#bbfff9"/><rect x="587.92" y="1090.91" width="6.06" height="5.96" fill="#bdfff9"/><rect x="593.38" y="1090.91" width="6.06" height="5.96" fill="#c0fff9"/><rect x="598.83" y="1090.91" width="6.06" height="5.96" fill="#c4fff8"/><rect x="604.29" y="1090.91" width="6.06" height="5.96" fill="#c7fff8"/><rect x="609.75" y="1090.91" width="6.06" height="5.96" fill="#cbfff7"/><rect x="615.21" y="1090.91" width="6.06" height="5.96" fill="#cefff7"/><rect x="620.67" y="1090.91" width="6.06" height="5.96" fill="#d2fff7"/><rect x="626.12" y="1090.91" width="6.06" height="5.96" fill="#d5fff6"/><rect x="631.58" y="1090.91" width="6.06" height="5.96" fill="#d9fff6"/><rect x="637.04" y="1090.91" width="6.06" height="5.96" fill="#dcfff5"/><rect x="642.50" y="1090.91" width="6.06" height="5.96" fill="#e0fff5"/><rect x="647.96" y="1090.91" width="6.06" height="5.96" fill="#e3fff4"/><rect x="653.42" y="1090.91" width="6.06" height="5.96" fill="#e7fff4"/><rect x="658.88" y="1090.91" width="6.06" height="5.96" fill="#ebfff4"/><rect x="664.33" y="1090.91" width="6.06" height="5.96" fill="#eefff3"/><rect x="669.79" y="1090.91" width="6.06" height="5.96" fill="#f2fff3"/><rect x="675.25" y="1090.91" width="6.06" height="5.96" fill="#f4fef1"/><rect x="680.71" y="1090.91" width="6.06" height="5.96" fill="#f5fcee"/><rect x="686.17" y="1090.91" width="6.06" height="5.96" fill="#f5faec"/><rect x="691.62" y="1090.91" width="6.06" height="5.96" fill="#f6f7e9"/><rect x="697.08" y="1090.91" width="6.06" height="5.96" fill="#f7f5e6"/><rect x="702.54" y="1090.91" width="6.06" height="5.96" fill="#f8f3e4"/><rect x="708.00" y="1090.91" width="6.06" height="5.96" fill="#f8f1e1"/><rect x="713.46" y="1090.91" width="6.06" height="5.96" fill="#f9efde"/><rect x="718.92" y="1090.91" width="6.06" height="5.96" fill="#faeddb"/><rect x="724.38" y="1090.91" width="6.06" height="5.96" fill="#fbead9"/><rect x="729.83" y="1090.91" width="6.06" height="5.96" fill="#fce8d6"/><rect x="735.29" y="1090.91" width="6.06" height="5.96" fill="#fce6d3"/><rect x="740.75" y="1090.91" width="6.06" height="5.96" fill="#fde4d1"/><rect x="746.21" y="1090.91" width="6.06" height="5.96" fill="#fee2ce"/><rect x="751.67" y="1090.91" width="6.06" height="5.96" fill="#ffdfcb"/><rect x="757.12" y="1090.91" width="6.06" height="5.96" fill="#ffddc9"/><rect x="762.58" y="1090.91" width="6.06" height="5.96" fill="#ffdbc7"/><rect x="768.04" y="1090.91" width="6.06" height="5.96" fill="#ffd8c4"/><rect x="773.50" y="1090.91" width="6.06" height="5.96" fill="#ffd6c2"/><rect x="778.96" y="1090.91" width="6.06" height="5.96" fill="#ffd4c0"/><rect x="784.42" y="1090.91" width="6.06" height="5.96" fill="#ffd1be"/><rect x="789.88" y="1090.91" width="6.06" height="5.96" fill="#ffcfbc"/><rect x="795.33" y="1090.91" width="6.06" height="5.96" fill="#ffccba"/><rect x="800.79" y="1090.91" width="6.06" height="5.96" fill="#ffcab8"/><rect x="806.25" y="1090.91" width="6.06" height="5.96" fill="#ffc8b6"/><rect x="811.71" y="1090.91" width="6.06" height="5.96" fill="#ffc5b3"/><rect x="817.17" y="1090.91" width="6.06" height="5.96" fill="#ffc3b1"/><rect x="822.62" y="1090.91" width="6.06" height="5.96" fill="#ffc0af"/><rect x="828.08" y="1090.91" width="6.06" height="5.96" fill="#ffbead"/><rect x="833.54" y="1090.91" width="6.06" height="5.96" fill="#ffbcab"/><rect x="511.50" y="1096.27" width="6.06" height="5.96" fill="#9ffffb"/><rect x="516.96" y="1096.27" width="6.06" height="5.96" fill="#a2fffb"/><rect x="522.42" y="1096.27" width="6.06" height="5.96" fill="#a4fffb"/><rect x="527.88" y="1096.27" width="6.06" height="5.96" fill="#a6fffb"/><rect x="533.33" y="1096.27" width="6.06" height="5.96" fill="#a8fffb"/><rect x="538.79" y="1096.27" width="6.06" height="5.96" fill="#aafffb"/><rect x="544.25" y="1096.27" width="6.06" height="5.96" fill="#acfffb"/><rect x="549.71" y="1096.27" width="6.06" height="5.96" fill="#affffb"/><rect x="555.17" y="1096.27" width="6.06" height="5.96" fill="#b1fffb"/><rect x="560.62" y="1096.27" width="6.06" height="5.96" fill="#b3fffb"/><rect x="566.08" y="1096.27" width="6.06" height="5.96" fill="#b5fffb"/><rect x="571.54" y="1096.27" width="6.06" height="5.96" fill="#b7fffb"/><rect x="577.00" y="1096.27" width="6.06" height="5.96" fill="#b9fffb"/><rect x="582.46" y="1096.27" width="6.06" height="5.96" fill="#bcfffb"/><rect x="587.92" y="1096.27" width="6.06" height="5.96" fill="#befffb"/><rect x="593.38" y="1096.27" width="6.06" height="5.96" fill="#c1fffb"/><rect x="598.83" y="1096.27" width="6.06" height="5.96" fill="#c4fffb"/><rect x="604.29" y="1096.27" width="6.06" height="5.96" fill="#c8fffa"/><rect x="609.75" y="1096.27" width="6.06" height="5.96" fill="#ccfffa"/><rect x="615.21" y="1096.27" width="6.06" height="5.96" fill="#cffff9"/><rect x="620.67" y="1096.27" width="6.06" height="5.96" fill="#d3fff9"/><rect x="626.12" y="1096.27" width="6.06" height="5.96" fill="#d6fff8"/><rect x="631.58" y="1096.27" width="6.06" height="5.96" fill="#dafff8"/><rect x="637.04" y="1096.27" width="6.06" height="5.96" fill="#defff8"/><rect x="642.50" y="1096.27" width="6.06" height="5.96" fill="#e1fff7"/><rect x="647.96" y="1096.27" width="6.06" height="5.96" fill="#e5fff7"/><rect x="653.42" y="1096.27" width="6.06" height="5.96" fill="#e9fff6"/><rect x="658.88" y="1096.27" width="6.06" height="5.96" fill="#ecfff6"/><rect x="664.33" y="1096.27" width="6.06" height="5.96" fill="#f0fff5"/><rect x="669.79" y="1096.27" width="6.06" height="5.96" fill="#f3fff5"/><rect x="675.25" y="1096.27" width="6.06" height="5.96" fill="#f6fef3"/><rect x="680.71" y="1096.27" width="6.06" height="5.96" fill="#f6fbf0"/><rect x="686.17" y="1096.27" width="6.06" height="5.96" fill="#f7f9ed"/><rect x="691.62" y="1096.27" width="6.06" height="5.96" fill="#f8f7eb"/><rect x="697.08" y="1096.27" width="6.06" height="5.96" fill="#f8f4e8"/><rect x="702.54" y="1096.27" width="6.06" height="5.96" fill="#f9f2e5"/><rect x="708.00" y="1096.27" width="6.06" height="5.96" fill="#f9f0e2"/><rect x="713.46" y="1096.27" width="6.06" height="5.96" fill="#faeddf"/><rect x="718.92" y="1096.27" width="6.06" height="5.96" fill="#fbebdc"/><rect x="724.38" y="1096.27" width="6.06" height="5.96" fill="#fbe9d9"/><rect x="729.83" y="1096.27" width="6.06" height="5.96" fill="#fce6d6"/><rect x="735.29" y="1096.27" width="6.06" height="5.96" fill="#fde4d3"/><rect x="740.75" y="1096.27" width="6.06" height="5.96" fill="#fde2d0"/><rect x="746.21" y="1096.27" width="6.06" height="5.96" fill="#fedfcd"/><rect x="751.67" y="1096.27" width="6.06" height="5.96" fill="#ffddcb"/><rect x="757.12" y="1096.27" width="6.06" height="5.96" fill="#ffdbc8"/><rect x="762.58" y="1096.27" width="6.06" height="5.96" fill="#ffd8c6"/><rect x="768.04" y="1096.27" width="6.06" height="5.96" fill="#ffd6c4"/><rect x="773.50" y="1096.27" width="6.06" height="5.96" fill="#ffd3c2"/><rect x="778.96" y="1096.27" width="6.06" height="5.96" fill="#ffd1bf"/><rect x="784.42" y="1096.27" width="6.06" height="5.96" fill="#ffcfbd"/><rect x="789.88" y="1096.27" width="6.06" height="5.96" fill="#ffccbb"/><rect x="795.33" y="1096.27" width="6.06" height="5.96" fill="#ffcab9"/><rect x="800.79" y="1096.27" width="6.06" height="5.96" fill="#ffc7b7"/><rect x="806.25" y="1096.27" width="6.06" height="5.96" fill="#ffc5b5"/><rect x="811.71" y="1096.27" width="6.06" height="5.96" fill="#ffc3b3"/><rect x="817.17" y="1096.27" width="6.06" height="5.96" fill="#ffc0b1"/><rect x="822.62" y="1096.27" width="6.06" height="5.96" fill="#ffbeae"/><rect x="828.08" y="1096.27" width="6.06" height="5.96" fill="#ffbbac"/><rect x="833.54" y="1096.27" width="6.06" height="5.96" fill="#ffb9aa"/><rect x="511.50" y="1101.64" width="6.06" height="5.96" fill="#a1fffe"/><rect x="516.96" y="1101.64" width="6.06" height="5.96" fill="#a3fffe"/><rect x="522.42" y="1101.64" width="6.06" height="5.96" fill="#a5fffe"/><rect x="527.88" y="1101.64" width="6.06" height="5.96" fill="#a7fffe"/><rect x="533.33" y="1101.64" width="6.06" height="5.96" fill="#a9fffe"/><rect x="538.79" y="1101.64" width="6.06" height="5.96" fill="#abfffe"/><rect x="544.25" y="1101.64" width="6.06" height="5.96" fill="#adfffe"/><rect x="549.71" y="1101.64" width="6.06" height="5.96" fill="#b0fffe"/><rect x="555.17" y="1101.64" width="6.06" height="5.96" fill="#b2fffe"/><rect x="560.62" y="1101.64" width="6.06" height="5.96" fill="#b4fffe"/><rect x="566.08" y="1101.64" width="6.06" height="5.96" fill="#b6fffe"/><rect x="571.54" y="1101.64" width="6.06" height="5.96" fill="#b8fffe"/><rect x="577.00" y="1101.64" width="6.06" height="5.96" fill="#bafffe"/><rect x="582.46" y="1101.64" width="6.06" height="5.96" fill="#bcfffe"/><rect x="587.92" y="1101.64" width="6.06" height="5.96" fill="#bffffe"/><rect x="593.38" y="1101.64" width="6.06" height="5.96" fill="#c1fffe"/><rect x="598.83" y="1101.64" width="6.06" height="5.96" fill="#c5fffd"/><rect x="604.29" y="1101.64" width="6.06" height="5.96" fill="#c9fffd"/><rect x="609.75" y="1101.64" width="6.06" height="5.96" fill="#cdfffc"/><rect x="615.21" y="1101.64" width="6.06" height="5.96" fill="#d0fffc"/><rect x="620.67" y="1101.64" width="6.06" height="5.96" fill="#d4fffb"/><rect x="626.12" y="1101.64" width="6.06" height="5.96" fill="#d8fffb"/><rect x="631.58" y="1101.64" width="6.06" height="5.96" fill="#dbfffa"/><rect x="637.04" y="1101.64" width="6.06" height="5.96" fill="#dffffa"/><rect x="642.50" y="1101.64" width="6.06" height="5.96" fill="#e3fff9"/><rect x="647.96" y="1101.64" width="6.06" height="5.96" fill="#e6fff9"/><rect x="653.42" y="1101.64" width="6.06" height="5.96" fill="#eafff9"/><rect x="658.88" y="1101.64" width="6.06" height="5.96" fill="#eefff8"/><rect x="664.33" y="1101.64" width="6.06" height="5.96" fill="#f2fff8"/><rect x="669.79" y="1101.64" width="6.06" height="5.96" fill="#f5fff7"/><rect x="675.25" y="1101.64" width="6.06" height="5.96" fill="#f7fef5"/><rect x="680.71" y="1101.64" width="6.06" height="5.96" fill="#f8fbf2"/><rect x="686.17" y="1101.64" width="6.06" height="5.96" fill="#f8f9ef"/><rect x="691.62" y="1101.64" width="6.06" height="5.96" fill="#f9f6ec"/><rect x="697.08" y="1101.64" width="6.06" height="5.96" fill="#f9f4e9"/><rect x="702.54" y="1101.64" width="6.06" height="5.96" fill="#faf1e6"/><rect x="708.00" y="1101.64" width="6.06" height="5.96" fill="#fbefe3"/><rect x="713.46" y="1101.64" width="6.06" height="5.96" fill="#fbece0"/><rect x="718.92" y="1101.64" width="6.06" height="5.96" fill="#fceadd"/><rect x="724.38" y="1101.64" width="6.06" height="5.96" fill="#fce7d9"/><rect x="729.83" y="1101.64" width="6.06" height="5.96" fill="#fde5d6"/><rect x="735.29" y="1101.64" width="6.06" height="5.96" fill="#fde2d3"/><rect x="740.75" y="1101.64" width="6.06" height="5.96" fill="#fee0d0"/><rect x="746.21" y="1101.64" width="6.06" height="5.96" fill="#feddcd"/><rect x="751.67" y="1101.64" width="6.06" height="5.96" fill="#ffdbca"/><rect x="757.12" y="1101.64" width="6.06" height="5.96" fill="#ffd8c7"/><rect x="762.58" y="1101.64" width="6.06" height="5.96" fill="#ffd6c5"/><rect x="768.04" y="1101.64" width="6.06" height="5.96" fill="#ffd3c3"/><rect x="773.50" y="1101.64" width="6.06" height="5.96" fill="#ffd1c1"/><rect x="778.96" y="1101.64" width="6.06" height="5.96" fill="#ffcebf"/><rect x="784.42" y="1101.64" width="6.06" height="5.96" fill="#ffccbd"/><rect x="789.88" y="1101.64" width="6.06" height="5.96" fill="#ffcaba"/><rect x="795.33" y="1101.64" width="6.06" height="5.96" fill="#ffc7b8"/><rect x="800.79" y="1101.64" width="6.06" height="5.96" fill="#ffc5b6"/><rect x="806.25" y="1101.64" width="6.06" height="5.96" fill="#ffc2b4"/><rect x="811.71" y="1101.64" width="6.06" height="5.96" fill="#ffc0b2"/><rect x="817.17" y="1101.64" width="6.06" height="5.96" fill="#ffbeb0"/><rect x="822.62" y="1101.64" width="6.06" height="5.96" fill="#ffbbae"/><rect x="828.08" y="1101.64" width="6.06" height="5.96" fill="#ffb9ac"/><rect x="833.54" y="1101.64" width="6.06" height="5.96" fill="#ffb6a9"/><rect x="511.50" y="1107.00" width="6.06" height="5.96" fill="#a1fdff"/><rect x="516.96" y="1107.00" width="6.06" height="5.96" fill="#a4fdff"/><rect x="522.42" y="1107.00" width="6.06" height="5.96" fill="#a6fdff"/><rect x="527.88" y="1107.00" width="6.06" height="5.96" fill="#a8fdff"/><rect x="533.33" y="1107.00" width="6.06" height="5.96" fill="#aafdff"/><rect x="538.79" y="1107.00" width="6.06" height="5.96" fill="#acfdff"/><rect x="544.25" y="1107.00" width="6.06" height="5.96" fill="#aefdff"/><rect x="549.71" y="1107.00" width="6.06" height="5.96" fill="#b1fdff"/><rect x="555.17" y="1107.00" width="6.06" height="5.96" fill="#b3fdff"/><rect x="560.62" y="1107.00" width="6.06" height="5.96" fill="#b5fdff"/><rect x="566.08" y="1107.00" width="6.06" height="5.96" fill="#b7fdff"/><rect x="571.54" y="1107.00" width="6.06" height="5.96" fill="#b9feff"/><rect x="577.00" y="1107.00" width="6.06" height="5.96" fill="#bbfeff"/><rect x="582.46" y="1107.00" width="6.06" height="5.96" fill="#bdfeff"/><rect x="587.92" y="1107.00" width="6.06" height="5.96" fill="#c0feff"/><rect x="593.38" y="1107.00" width="6.06" height="5.96" fill="#c3feff"/><rect x="598.83" y="1107.00" width="6.06" height="5.96" fill="#c6fefe"/><rect x="604.29" y="1107.00" width="6.06" height="5.96" fill="#cafefe"/><rect x="609.75" y="1107.00" width="6.06" height="5.96" fill="#cefefd"/><rect x="615.21" y="1107.00" width="6.06" height="5.96" fill="#d1fefd"/><rect x="620.67" y="1107.00" width="6.06" height="5.96" fill="#d5fefd"/><rect x="626.12" y="1107.00" width="6.06" height="5.96" fill="#d9fefc"/><rect x="631.58" y="1107.00" width="6.06" height="5.96" fill="#ddfefc"/><rect x="637.04" y="1107.00" width="6.06" height="5.96" fill="#e0fefb"/><rect x="642.50" y="1107.00" width="6.06" height="5.96" fill="#e4fefb"/><rect x="647.96" y="1107.00" width="6.06" height="5.96" fill="#e8fefa"/><rect x="653.42" y="1107.00" width="6.06" height="5.96" fill="#ebfefa"/><rect x="658.88" y="1107.00" width="6.06" height="5.96" fill="#effef9"/><rect x="664.33" y="1107.00" width="6.06" height="5.96" fill="#f3fef9"/><rect x="669.79" y="1107.00" width="6.06" height="5.96" fill="#f6fef9"/><rect x="675.25" y="1107.00" width="6.06" height="5.96" fill="#f9fcf7"/><rect x="680.71" y="1107.00" width="6.06" height="5.96" fill="#f9faf4"/><rect x="686.17" y="1107.00" width="6.06" height="5.96" fill="#f9f7f0"/><rect x="691.62" y="1107.00" width="6.06" height="5.96" fill="#faf5ed"/><rect x="697.08" y="1107.00" width="6.06" height="5.96" fill="#faf2ea"/><rect x="702.54" y="1107.00" width="6.06" height="5.96" fill="#fbefe7"/><rect x="708.00" y="1107.00" width="6.06" height="5.96" fill="#fbede4"/><rect x="713.46" y="1107.00" width="6.06" height="5.96" fill="#fceae1"/><rect x="718.92" y="1107.00" width="6.06" height="5.96" fill="#fce8dd"/><rect x="724.38" y="1107.00" width="6.06" height="5.96" fill="#fde5da"/><rect x="729.83" y="1107.00" width="6.06" height="5.96" fill="#fde3d7"/><rect x="735.29" y="1107.00" width="6.06" height="5.96" fill="#fde0d4"/><rect x="740.75" y="1107.00" width="6.06" height="5.96" fill="#feddd1"/><rect x="746.21" y="1107.00" width="6.06" height="5.96" fill="#fedbcd"/><rect x="751.67" y="1107.00" width="6.06" height="5.96" fill="#ffd8ca"/><rect x="757.12" y="1107.00" width="6.06" height="5.96" fill="#ffd6c8"/><rect x="762.58" y="1107.00" width="6.06" height="5.96" fill="#ffd3c6"/><rect x="768.04" y="1107.00" width="6.06" height="5.96" fill="#ffd1c3"/><rect x="773.50" y="1107.00" width="6.06" height="5.96" fill="#ffcfc1"/><rect x="778.96" y="1107.00" width="6.06" height="5.96" fill="#ffccbf"/><rect x="784.42" y="1107.00" width="6.06" height="5.96" fill="#ffcabd"/><rect x="789.88" y="1107.00" width="6.06" height="5.96" fill="#ffc7bb"/><rect x="795.33" y="1107.00" width="6.06" height="5.96" fill="#ffc5b9"/><rect x="800.79" y="1107.00" width="6.06" height="5.96" fill="#ffc3b7"/><rect x="806.25" y="1107.00" width="6.06" height="5.96" fill="#ffc0b4"/><rect x="811.71" y="1107.00" width="6.06" height="5.96" fill="#ffbeb2"/><rect x="817.17" y="1107.00" width="6.06" height="5.96" fill="#ffbbb0"/><rect x="822.62" y="1107.00" width="6.06" height="5.96" fill="#ffb9ae"/><rect x="828.08" y="1107.00" width="6.06" height="5.96" fill="#ffb7ac"/><rect x="833.54" y="1107.00" width="6.06" height="5.96" fill="#ffb4aa"/><rect x="511.50" y="1112.36" width="6.06" height="5.96" fill="#a2faff"/><rect x="516.96" y="1112.36" width="6.06" height="5.96" fill="#a4faff"/><rect x="522.42" y="1112.36" width="6.06" height="5.96" fill="#a7faff"/><rect x="527.88" y="1112.36" width="6.06" height="5.96" fill="#a9faff"/><rect x="533.33" y="1112.36" width="6.06" height="5.96" fill="#abfaff"/><rect x="538.79" y="1112.36" width="6.06" height="5.96" fill="#adfaff"/><rect x="544.25" y="1112.36" width="6.06" height="5.96" fill="#affaff"/><rect x="549.71" y="1112.36" width="6.06" height="5.96" fill="#b2faff"/><rect x="555.17" y="1112.36" width="6.06" height="5.96" fill="#b4faff"/><rect x="560.62" y="1112.36" width="6.06" height="5.96" fill="#b6faff"/><rect x="566.08" y="1112.36" width="6.06" height="5.96" fill="#b8faff"/><rect x="571.54" y="1112.36" width="6.06" height="5.96" fill="#bafbff"/><rect x="577.00" y="1112.36" width="6.06" height="5.96" fill="#bdfbff"/><rect x="582.46" y="1112.36" width="6.06" height="5.96" fill="#bffbff"/><rect x="587.92" y="1112.36" width="6.06" height="5.96" fill="#c1fbff"/><rect x="593.38" y="1112.36" width="6.06" height="5.96" fill="#c4fbff"/><rect x="598.83" y="1112.36" width="6.06" height="5.96" fill="#c8fbfe"/><rect x="604.29" y="1112.36" width="6.06" height="5.96" fill="#cbfbfe"/><rect x="609.75" y="1112.36" width="6.06" height="5.96" fill="#cffbfe"/><rect x="615.21" y="1112.36" width="6.06" height="5.96" fill="#d3fbfd"/><rect x="620.67" y="1112.36" width="6.06" height="5.96" fill="#d6fbfd"/><rect x="626.12" y="1112.36" width="6.06" height="5.96" fill="#dafbfc"/><rect x="631.58" y="1112.36" width="6.06" height="5.96" fill="#defbfc"/><rect x="637.04" y="1112.36" width="6.06" height="5.96" fill="#e1fbfc"/><rect x="642.50" y="1112.36" width="6.06" height="5.96" fill="#e5fbfb"/><rect x="647.96" y="1112.36" width="6.06" height="5.96" fill="#e9fbfb"/><rect x="653.42" y="1112.36" width="6.06" height="5.96" fill="#ecfbfa"/><rect x="658.88" y="1112.36" width="6.06" height="5.96" fill="#f0fbfa"/><rect x="664.33" y="1112.36" width="6.06" height="5.96" fill="#f3fbfa"/><rect x="669.79" y="1112.36" width="6.06" height="5.96" fill="#f7fbf9"/><rect x="675.25" y="1112.36" width="6.06" height="5.96" fill="#f9faf7"/><rect x="680.71" y="1112.36" width="6.06" height="5.96" fill="#faf7f4"/><rect x="686.17" y="1112.36" width="6.06" height="5.96" fill="#faf4f1"/><rect x="691.62" y="1112.36" width="6.06" height="5.96" fill="#faf2ee"/><rect x="697.08" y="1112.36" width="6.06" height="5.96" fill="#fbefeb"/><rect x="702.54" y="1112.36" width="6.06" height="5.96" fill="#fbede8"/><rect x="708.00" y="1112.36" width="6.06" height="5.96" fill="#fceae5"/><rect x="713.46" y="1112.36" width="6.06" height="5.96" fill="#fce8e2"/><rect x="718.92" y="1112.36" width="6.06" height="5.96" fill="#fce5de"/><rect x="724.38" y="1112.36" width="6.06" height="5.96" fill="#fde3db"/><rect x="729.83" y="1112.36" width="6.06" height="5.96" fill="#fde0d8"/><rect x="735.29" y="1112.36" width="6.06" height="5.96" fill="#feded5"/><rect x="740.75" y="1112.36" width="6.06" height="5.96" fill="#fedbd2"/><rect x="746.21" y="1112.36" width="6.06" height="5.96" fill="#fed9cf"/><rect x="751.67" y="1112.36" width="6.06" height="5.96" fill="#ffd6cc"/><rect x="757.12" y="1112.36" width="6.06" height="5.96" fill="#ffd4c9"/><rect x="762.58" y="1112.36" width="6.06" height="5.96" fill="#ffd1c7"/><rect x="768.04" y="1112.36" width="6.06" height="5.96" fill="#ffcfc5"/><rect x="773.50" y="1112.36" width="6.06" height="5.96" fill="#ffccc3"/><rect x="778.96" y="1112.36" width="6.06" height="5.96" fill="#ffcac1"/><rect x="784.42" y="1112.36" width="6.06" height="5.96" fill="#ffc8be"/><rect x="789.88" y="1112.36" width="6.06" height="5.96" fill="#ffc5bc"/><rect x="795.33" y="1112.36" width="6.06" height="5.96" fill="#ffc3ba"/><rect x="800.79" y="1112.36" width="6.06" height="5.96" fill="#ffc1b8"/><rect x="806.25" y="1112.36" width="6.06" height="5.96" fill="#ffbeb6"/><rect x="811.71" y="1112.36" width="6.06" height="5.96" fill="#ffbcb4"/><rect x="817.17" y="1112.36" width="6.06" height="5.96" fill="#ffbab2"/><rect x="822.62" y="1112.36" width="6.06" height="5.96" fill="#ffb7b0"/><rect x="828.08" y="1112.36" width="6.06" height="5.96" fill="#ffb5ad"/><rect x="833.54" y="1112.36" width="6.06" height="5.96" fill="#ffb2ab"/><rect x="511.50" y="1117.73" width="6.06" height="5.96" fill="#a3f6ff"/><rect x="516.96" y="1117.73" width="6.06" height="5.96" fill="#a5f6ff"/><rect x="522.42" y="1117.73" width="6.06" height="5.96" fill="#a7f6ff"/><rect x="527.88" y="1117.73" width="6.06" height="5.96" fill="#aaf7ff"/><rect x="533.33" y="1117.73" width="6.06" height="5.96" fill="#acf7ff"/><rect x="538.79" y="1117.73" width="6.06" height="5.96" fill="#aef7ff"/><rect x="544.25" y="1117.73" width="6.06" height="5.96" fill="#b0f7ff"/><rect x="549.71" y="1117.73" width="6.06" height="5.96" fill="#b3f7ff"/><rect x="555.17" y="1117.73" width="6.06" height="5.96" fill="#b5f7ff"/><rect x="560.62" y="1117.73" width="6.06" height="5.96" fill="#b7f7ff"/><rect x="566.08" y="1117.73" width="6.06" height="5.96" fill="#b9f7ff"/><rect x="571.54" y="1117.73" width="6.06" height="5.96" fill="#bcf8ff"/><rect x="577.00" y="1117.73" width="6.06" height="5.96" fill="#bef8ff"/><rect x="582.46" y="1117.73" width="6.06" height="5.96" fill="#c0f8ff"/><rect x="587.92" y="1117.73" width="6.06" height="5.96" fill="#c3f8ff"/><rect x="593.38" y="1117.73" width="6.06" height="5.96" fill="#c5f8ff"/><rect x="598.83" y="1117.73" width="6.06" height="5.96" fill="#c9f8fe"/><rect x="604.29" y="1117.73" width="6.06" height="5.96" fill="#cdf8fe"/><rect x="609.75" y="1117.73" width="6.06" height="5.96" fill="#d0f8fe"/><rect x="615.21" y="1117.73" width="6.06" height="5.96" fill="#d4f8fd"/><rect x="620.67" y="1117.73" width="6.06" height="5.96" fill="#d7f8fd"/><rect x="626.12" y="1117.73" width="6.06" height="5.96" fill="#dbf8fd"/><rect x="631.58" y="1117.73" width="6.06" height="5.96" fill="#dff8fc"/><rect x="637.04" y="1117.73" width="6.06" height="5.96" fill="#e2f8fc"/><rect x="642.50" y="1117.73" width="6.06" height="5.96" fill="#e6f8fc"/><rect x="647.96" y="1117.73" width="6.06" height="5.96" fill="#e9f8fb"/><rect x="653.42" y="1117.73" width="6.06" height="5.96" fill="#edf8fb"/><rect x="658.88" y="1117.73" width="6.06" height="5.96" fill="#f1f8fa"/><rect x="664.33" y="1117.73" width="6.06" height="5.96" fill="#f4f8fa"/><rect x="669.79" y="1117.73" width="6.06" height="5.96" fill="#f8f8fa"/><rect x="675.25" y="1117.73" width="6.06" height="5.96" fill="#faf7f8"/><rect x="680.71" y="1117.73" width="6.06" height="5.96" fill="#faf4f5"/><rect x="686.17" y="1117.73" width="6.06" height="5.96" fill="#faf2f2"/><rect x="691.62" y="1117.73" width="6.06" height="5.96" fill="#fbefef"/><rect x="697.08" y="1117.73" width="6.06" height="5.96" fill="#fbedec"/><rect x="702.54" y="1117.73" width="6.06" height="5.96" fill="#fceae9"/><rect x="708.00" y="1117.73" width="6.06" height="5.96" fill="#fce8e6"/><rect x="713.46" y="1117.73" width="6.06" height="5.96" fill="#fce5e3"/><rect x="718.92" y="1117.73" width="6.06" height="5.96" fill="#fde3e0"/><rect x="724.38" y="1117.73" width="6.06" height="5.96" fill="#fde0dc"/><rect x="729.83" y="1117.73" width="6.06" height="5.96" fill="#fdded9"/><rect x="735.29" y="1117.73" width="6.06" height="5.96" fill="#fedbd6"/><rect x="740.75" y="1117.73" width="6.06" height="5.96" fill="#fed9d3"/><rect x="746.21" y="1117.73" width="6.06" height="5.96" fill="#fed6d0"/><rect x="751.67" y="1117.73" width="6.06" height="5.96" fill="#ffd4cd"/><rect x="757.12" y="1117.73" width="6.06" height="5.96" fill="#ffd1cb"/><rect x="762.58" y="1117.73" width="6.06" height="5.96" fill="#ffcfc8"/><rect x="768.04" y="1117.73" width="6.06" height="5.96" fill="#ffcdc6"/><rect x="773.50" y="1117.73" width="6.06" height="5.96" fill="#ffcac4"/><rect x="778.96" y="1117.73" width="6.06" height="5.96" fill="#ffc8c2"/><rect x="784.42" y="1117.73" width="6.06" height="5.96" fill="#ffc6c0"/><rect x="789.88" y="1117.73" width="6.06" height="5.96" fill="#ffc3be"/><rect x="795.33" y="1117.73" width="6.06" height="5.96" fill="#ffc1bc"/><rect x="800.79" y="1117.73" width="6.06" height="5.96" fill="#ffbfba"/><rect x="806.25" y="1117.73" width="6.06" height="5.96" fill="#ffbcb7"/><rect x="811.71" y="1117.73" width="6.06" height="5.96" fill="#ffbab5"/><rect x="817.17" y="1117.73" width="6.06" height="5.96" fill="#ffb8b3"/><rect x="822.62" y="1117.73" width="6.06" height="5.96" fill="#ffb5b1"/><rect x="828.08" y="1117.73" width="6.06" height="5.96" fill="#ffb3af"/><rect x="833.54" y="1117.73" width="6.06" height="5.96" fill="#ffb1ad"/><rect x="511.50" y="1123.09" width="6.06" height="5.96" fill="#a4f3ff"/><rect x="516.96" y="1123.09" width="6.06" height="5.96" fill="#a6f3ff"/><rect x="522.42" y="1123.09" width="6.06" height="5.96" fill="#a8f3ff"/><rect x="527.88" y="1123.09" width="6.06" height="5.96" fill="#abf3ff"/><rect x="533.33" y="1123.09" width="6.06" height="5.96" fill="#adf3ff"/><rect x="538.79" y="1123.09" width="6.06" height="5.96" fill="#aff4ff"/><rect x="544.25" y="1123.09" width="6.06" height="5.96" fill="#b2f4ff"/><rect x="549.71" y="1123.09" width="6.06" height="5.96" fill="#b4f4ff"/><rect x="555.17" y="1123.09" width="6.06" height="5.96" fill="#b6f4ff"/><rect x="560.62" y="1123.09" width="6.06" height="5.96" fill="#b8f4ff"/><rect x="566.08" y="1123.09" width="6.06" height="5.96" fill="#bbf4ff"/><rect x="571.54" y="1123.09" width="6.06" height="5.96" fill="#bdf5ff"/><rect x="577.00" y="1123.09" width="6.06" height="5.96" fill="#bff5ff"/><rect x="582.46" y="1123.09" width="6.06" height="5.96" fill="#c2f5ff"/><rect x="587.92" y="1123.09" width="6.06" height="5.96" fill="#c4f5ff"/><rect x="593.38" y="1123.09" width="6.06" height="5.96" fill="#c7f5ff"/><rect x="598.83" y="1123.09" width="6.06" height="5.96" fill="#caf5ff"/><rect x="604.29" y="1123.09" width="6.06" height="5.96" fill="#cef5fe"/><rect x="609.75" y="1123.09" width="6.06" height="5.96" fill="#d1f5fe"/><rect x="615.21" y="1123.09" width="6.06" height="5.96" fill="#d5f5fe"/><rect x="620.67" y="1123.09" width="6.06" height="5.96" fill="#d9f5fd"/><rect x="626.12" y="1123.09" width="6.06" height="5.96" fill="#dcf5fd"/><rect x="631.58" y="1123.09" width="6.06" height="5.96" fill="#e0f5fd"/><rect x="637.04" y="1123.09" width="6.06" height="5.96" fill="#e3f5fc"/><rect x="642.50" y="1123.09" width="6.06" height="5.96" fill="#e7f5fc"/><rect x="647.96" y="1123.09" width="6.06" height="5.96" fill="#eaf5fc"/><rect x="653.42" y="1123.09" width="6.06" height="5.96" fill="#eef5fb"/><rect x="658.88" y="1123.09" width="6.06" height="5.96" fill="#f1f5fb"/><rect x="664.33" y="1123.09" width="6.06" height="5.96" fill="#f5f5fb"/><rect x="669.79" y="1123.09" width="6.06" height="5.96" fill="#f8f5fa"/><rect x="675.25" y="1123.09" width="6.06" height="5.96" fill="#faf4f9"/><rect x="680.71" y="1123.09" width="6.06" height="5.96" fill="#fbf1f6"/><rect x="686.17" y="1123.09" width="6.06" height="5.96" fill="#fbeff3"/><rect x="691.62" y="1123.09" width="6.06" height="5.96" fill="#fbedf0"/><rect x="697.08" y="1123.09" width="6.06" height="5.96" fill="#fceaed"/><rect x="702.54" y="1123.09" width="6.06" height="5.96" fill="#fce8ea"/><rect x="708.00" y="1123.09" width="6.06" height="5.96" fill="#fce5e7"/><rect x="713.46" y="1123.09" width="6.06" height="5.96" fill="#fde3e4"/><rect x="718.92" y="1123.09" width="6.06" height="5.96" fill="#fde0e1"/><rect x="724.38" y="1123.09" width="6.06" height="5.96" fill="#fddede"/><rect x="729.83" y="1123.09" width="6.06" height="5.96" fill="#fedbdb"/><rect x="735.29" y="1123.09" width="6.06" height="5.96" fill="#fed9d8"/><rect x="740.75" y="1123.09" width="6.06" height="5.96" fill="#fed6d5"/><rect x="746.21" y="1123.09" width="6.06" height="5.96" fill="#ffd4d2"/><rect x="751.67" y="1123.09" width="6.06" height="5.96" fill="#ffd2cf"/><rect x="757.12" y="1123.09" width="6.06" height="5.96" fill="#ffcfcc"/><rect x="762.58" y="1123.09" width="6.06" height="5.96" fill="#ffcdca"/><rect x="768.04" y="1123.09" width="6.06" height="5.96" fill="#ffcbc8"/><rect x="773.50" y="1123.09" width="6.06" height="5.96" fill="#ffc8c6"/><rect x="778.96" y="1123.09" width="6.06" height="5.96" fill="#ffc6c3"/><rect x="784.42" y="1123.09" width="6.06" height="5.96" fill="#ffc4c1"/><rect x="789.88" y="1123.09" width="6.06" height="5.96" fill="#ffc1bf"/><rect x="795.33" y="1123.09" width="6.06" height="5.96" fill="#ffbfbd"/><rect x="800.79" y="1123.09" width="6.06" height="5.96" fill="#ffbdbb"/><rect x="806.25" y="1123.09" width="6.06" height="5.96" fill="#ffbab9"/><rect x="811.71" y="1123.09" width="6.06" height="5.96" fill="#ffb8b7"/><rect x="817.17" y="1123.09" width="6.06" height="5.96" fill="#ffb6b5"/><rect x="822.62" y="1123.09" width="6.06" height="5.96" fill="#ffb3b2"/><rect x="828.08" y="1123.09" width="6.06" height="5.96" fill="#ffb1b0"/><rect x="833.54" y="1123.09" width="6.06" height="5.96" fill="#ffafae"/><rect x="511.50" y="1128.45" width="6.06" height="5.96" fill="#a4efff"/><rect x="516.96" y="1128.45" width="6.06" height="5.96" fill="#a7efff"/><rect x="522.42" y="1128.45" width="6.06" height="5.96" fill="#a9f0ff"/><rect x="527.88" y="1128.45" width="6.06" height="5.96" fill="#acf0ff"/><rect x="533.33" y="1128.45" width="6.06" height="5.96" fill="#aef0ff"/><rect x="538.79" y="1128.45" width="6.06" height="5.96" fill="#b0f0ff"/><rect x="544.25" y="1128.45" width="6.06" height="5.96" fill="#b3f0ff"/><rect x="549.71" y="1128.45" width="6.06" height="5.96" fill="#b5f1ff"/><rect x="555.17" y="1128.45" width="6.06" height="5.96" fill="#b7f1ff"/><rect x="560.62" y="1128.45" width="6.06" height="5.96" fill="#baf1ff"/><rect x="566.08" y="1128.45" width="6.06" height="5.96" fill="#bcf1ff"/><rect x="571.54" y="1128.45" width="6.06" height="5.96" fill="#bef2ff"/><rect x="577.00" y="1128.45" width="6.06" height="5.96" fill="#c1f2ff"/><rect x="582.46" y="1128.45" width="6.06" height="5.96" fill="#c3f2ff"/><rect x="587.92" y="1128.45" width="6.06" height="5.96" fill="#c5f2ff"/><rect x="593.38" y="1128.45" width="6.06" height="5.96" fill="#c8f2ff"/><rect x="598.83" y="1128.45" width="6.06" height="5.96" fill="#ccf2ff"/><rect x="604.29" y="1128.45" width="6.06" height="5.96" fill="#cff2fe"/><rect x="609.75" y="1128.45" width="6.06" height="5.96" fill="#d3f2fe"/><rect x="615.21" y="1128.45" width="6.06" height="5.96" fill="#d6f2fe"/><rect x="620.67" y="1128.45" width="6.06" height="5.96" fill="#daf2fd"/><rect x="626.12" y="1128.45" width="6.06" height="5.96" fill="#ddf2fd"/><rect x="631.58" y="1128.45" width="6.06" height="5.96" fill="#e1f2fd"/><rect x="637.04" y="1128.45" width="6.06" height="5.96" fill="#e4f2fd"/><rect x="642.50" y="1128.45" width="6.06" height="5.96" fill="#e8f2fc"/><rect x="647.96" y="1128.45" width="6.06" height="5.96" fill="#ebf2fc"/><rect x="653.42" y="1128.45" width="6.06" height="5.96" fill="#eff2fc"/><rect x="658.88" y="1128.45" width="6.06" height="5.96" fill="#f2f2fc"/><rect x="664.33" y="1128.45" width="6.06" height="5.96" fill="#f6f2fb"/><rect x="669.79" y="1128.45" width="6.06" height="5.96" fill="#f9f2fb"/><rect x="675.25" y="1128.45" width="6.06" height="5.96" fill="#fbf1f9"/><rect x="680.71" y="1128.45" width="6.06" height="5.96" fill="#fbeff6"/><rect x="686.17" y="1128.45" width="6.06" height="5.96" fill="#fcecf3"/><rect x="691.62" y="1128.45" width="6.06" height="5.96" fill="#fceaf1"/><rect x="697.08" y="1128.45" width="6.06" height="5.96" fill="#fce7ee"/><rect x="702.54" y="1128.45" width="6.06" height="5.96" fill="#fce5eb"/><rect x="708.00" y="1128.45" width="6.06" height="5.96" fill="#fde3e8"/><rect x="713.46" y="1128.45" width="6.06" height="5.96" fill="#fde0e5"/><rect x="718.92" y="1128.45" width="6.06" height="5.96" fill="#fddee2"/><rect x="724.38" y="1128.45" width="6.06" height="5.96" fill="#fddbdf"/><rect x="729.83" y="1128.45" width="6.06" height="5.96" fill="#fed9dc"/><rect x="735.29" y="1128.45" width="6.06" height="5.96" fill="#fed7d9"/><rect x="740.75" y="1128.45" width="6.06" height="5.96" fill="#fed4d6"/><rect x="746.21" y="1128.45" width="6.06" height="5.96" fill="#ffd2d3"/><rect x="751.67" y="1128.45" width="6.06" height="5.96" fill="#ffcfd0"/><rect x="757.12" y="1128.45" width="6.06" height="5.96" fill="#ffcdcd"/><rect x="762.58" y="1128.45" width="6.06" height="5.96" fill="#ffcbcb"/><rect x="768.04" y="1128.45" width="6.06" height="5.96" fill="#ffc8c9"/><rect x="773.50" y="1128.45" width="6.06" height="5.96" fill="#ffc6c7"/><rect x="778.96" y="1128.45" width="6.06" height="5.96" fill="#ffc4c5"/><rect x="784.42" y="1128.45" width="6.06" height="5.96" fill="#ffc2c3"/><rect x="789.88" y="1128.45" width="6.06" height="5.96" fill="#ffbfc1"/><rect x="795.33" y="1128.45" width="6.06" height="5.96" fill="#ffbdbf"/><rect x="800.79" y="1128.45" width="6.06" height="5.96" fill="#ffbbbc"/><rect x="806.25" y="1128.45" width="6.06" height="5.96" fill="#ffb8ba"/><rect x="811.71" y="1128.45" width="6.06" height="5.96" fill="#ffb6b8"/><rect x="817.17" y="1128.45" width="6.06" height="5.96" fill="#ffb4b6"/><rect x="822.62" y="1128.45" width="6.06" height="5.96" fill="#ffb2b4"/><rect x="828.08" y="1128.45" width="6.06" height="5.96" fill="#ffafb2"/><rect x="833.54" y="1128.45" width="6.06" height="5.96" fill="#ffadb0"/><rect x="511.50" y="1133.82" width="6.06" height="5.96" fill="#a5ecff"/><rect x="516.96" y="1133.82" width="6.06" height="5.96" fill="#a8ecff"/><rect x="522.42" y="1133.82" width="6.06" height="5.96" fill="#aaecff"/><rect x="527.88" y="1133.82" width="6.06" height="5.96" fill="#acecff"/><rect x="533.33" y="1133.82" width="6.06" height="5.96" fill="#afedff"/><rect x="538.79" y="1133.82" width="6.06" height="5.96" fill="#b1edff"/><rect x="544.25" y="1133.82" width="6.06" height="5.96" fill="#b4edff"/><rect x="549.71" y="1133.82" width="6.06" height="5.96" fill="#b6eeff"/><rect x="555.17" y="1133.82" width="6.06" height="5.96" fill="#b8eeff"/><rect x="560.62" y="1133.82" width="6.06" height="5.96" fill="#bbeeff"/><rect x="566.08" y="1133.82" width="6.06" height="5.96" fill="#bdeeff"/><rect x="571.54" y="1133.82" width="6.06" height="5.96" fill="#c0efff"/><rect x="577.00" y="1133.82" width="6.06" height="5.96" fill="#c2efff"/><rect x="582.46" y="1133.82" width="6.06" height="5.96" fill="#c4efff"/><rect x="587.92" y="1133.82" width="6.06" height="5.96" fill="#c7efff"/><rect x="593.38" y="1133.82" width="6.06" height="5.96" fill="#caf0ff"/><rect x="598.83" y="1133.82" width="6.06" height="5.96" fill="#cdf0ff"/><rect x="604.29" y="1133.82" width="6.06" height="5.96" fill="#d1f0fe"/><rect x="609.75" y="1133.82" width="6.06" height="5.96" fill="#d4f0fe"/><rect x="615.21" y="1133.82" width="6.06" height="5.96" fill="#d7f0fe"/><rect x="620.67" y="1133.82" width="6.06" height="5.96" fill="#dbf0fe"/><rect x="626.12" y="1133.82" width="6.06" height="5.96" fill="#def0fd"/><rect x="631.58" y="1133.82" width="6.06" height="5.96" fill="#e2f0fd"/><rect x="637.04" y="1133.82" width="6.06" height="5.96" fill="#e5f0fd"/><rect x="642.50" y="1133.82" width="6.06" height="5.96" fill="#e9f0fd"/><rect x="647.96" y="1133.82" width="6.06" height="5.96" fill="#ecf0fd"/><rect x="653.42" y="1133.82" width="6.06" height="5.96" fill="#eff0fc"/><rect x="658.88" y="1133.82" width="6.06" height="5.96" fill="#f3f0fc"/><rect x="664.33" y="1133.82" width="6.06" height="5.96" fill="#f6f0fc"/><rect x="669.79" y="1133.82" width="6.06" height="5.96" fill="#faf0fc"/><rect x="675.25" y="1133.82" width="6.06" height="5.96" fill="#fceefa"/><rect x="680.71" y="1133.82" width="6.06" height="5.96" fill="#fcecf7"/><rect x="686.17" y="1133.82" width="6.06" height="5.96" fill="#fceaf4"/><rect x="691.62" y="1133.82" width="6.06" height="5.96" fill="#fce7f1"/><rect x="697.08" y="1133.82" width="6.06" height="5.96" fill="#fde5ee"/><rect x="702.54" y="1133.82" width="6.06" height="5.96" fill="#fde2ec"/><rect x="708.00" y="1133.82" width="6.06" height="5.96" fill="#fde0e9"/><rect x="713.46" y="1133.82" width="6.06" height="5.96" fill="#fddee6"/><rect x="718.92" y="1133.82" width="6.06" height="5.96" fill="#fddbe3"/><rect x="724.38" y="1133.82" width="6.06" height="5.96" fill="#fed9e0"/><rect x="729.83" y="1133.82" width="6.06" height="5.96" fill="#fed7dd"/><rect x="735.29" y="1133.82" width="6.06" height="5.96" fill="#fed4da"/><rect x="740.75" y="1133.82" width="6.06" height="5.96" fill="#fed2d7"/><rect x="746.21" y="1133.82" width="6.06" height="5.96" fill="#ffd0d4"/><rect x="751.67" y="1133.82" width="6.06" height="5.96" fill="#ffcdd1"/><rect x="757.12" y="1133.82" width="6.06" height="5.96" fill="#ffcbcf"/><rect x="762.58" y="1133.82" width="6.06" height="5.96" fill="#ffc9cd"/><rect x="768.04" y="1133.82" width="6.06" height="5.96" fill="#ffc6cb"/><rect x="773.50" y="1133.82" width="6.06" height="5.96" fill="#ffc4c9"/><rect x="778.96" y="1133.82" width="6.06" height="5.96" fill="#ffc2c6"/><rect x="784.42" y="1133.82" width="6.06" height="5.96" fill="#ffc0c4"/><rect x="789.88" y="1133.82" width="6.06" height="5.96" fill="#ffbdc2"/><rect x="795.33" y="1133.82" width="6.06" height="5.96" fill="#ffbbc0"/><rect x="800.79" y="1133.82" width="6.06" height="5.96" fill="#ffb9be"/><rect x="806.25" y="1133.82" width="6.06" height="5.96" fill="#ffb6bc"/><rect x="811.71" y="1133.82" width="6.06" height="5.96" fill="#ffb4ba"/><rect x="817.17" y="1133.82" width="6.06" height="5.96" fill="#ffb2b7"/><rect x="822.62" y="1133.82" width="6.06" height="5.96" fill="#ffb0b5"/><rect x="828.08" y="1133.82" width="6.06" height="5.96" fill="#ffadb3"/><rect x="833.54" y="1133.82" width="6.06" height="5.96" fill="#ffabb1"/><rect x="511.50" y="1139.18" width="6.06" height="5.96" fill="#a6e8ff"/><rect x="516.96" y="1139.18" width="6.06" height="5.96" fill="#a8e8ff"/><rect x="522.42" y="1139.18" width="6.06" height="5.96" fill="#abe9ff"/><rect x="527.88" y="1139.18" width="6.06" height="5.96" fill="#ade9ff"/><rect x="533.33" y="1139.18" width="6.06" height="5.96" fill="#b0e9ff"/><rect x="538.79" y="1139.18" width="6.06" height="5.96" fill="#b2eaff"/><rect x="544.25" y="1139.18" width="6.06" height="5.96" fill="#b5eaff"/><rect x="549.71" y="1139.18" width="6.06" height="5.96" fill="#b7eaff"/><rect x="555.17" y="1139.18" width="6.06" height="5.96" fill="#baebff"/><rect x="560.62" y="1139.18" width="6.06" height="5.96" fill="#bcebff"/><rect x="566.08" y="1139.18" width="6.06" height="5.96" fill="#beebff"/><rect x="571.54" y="1139.18" width="6.06" height="5.96" fill="#c1ecff"/><rect x="577.00" y="1139.18" width="6.06" height="5.96" fill="#c3ecff"/><rect x="582.46" y="1139.18" width="6.06" height="5.96" fill="#c6ecff"/><rect x="587.92" y="1139.18" width="6.06" height="5.96" fill="#c8edff"/><rect x="593.38" y="1139.18" width="6.06" height="5.96" fill="#cbedff"/><rect x="598.83" y="1139.18" width="6.06" height="5.96" fill="#cfedff"/><rect x="604.29" y="1139.18" width="6.06" height="5.96" fill="#d2edff"/><rect x="609.75" y="1139.18" width="6.06" height="5.96" fill="#d5edfe"/><rect x="615.21" y="1139.18" width="6.06" height="5.96" fill="#d9edfe"/><rect x="620.67" y="1139.18" width="6.06" height="5.96" fill="#dcedfe"/><rect x="626.12" y="1139.18" width="6.06" height="5.96" fill="#dfedfe"/><rect x="631.58" y="1139.18" width="6.06" height="5.96" fill="#e3edfe"/><rect x="637.04" y="1139.18" width="6.06" height="5.96" fill="#e6edfd"/><rect x="642.50" y="1139.18" width="6.06" height="5.96" fill="#eaedfd"/><rect x="647.96" y="1139.18" width="6.06" height="5.96" fill="#ededfd"/><rect x="653.42" y="1139.18" width="6.06" height="5.96" fill="#f0edfd"/><rect x="658.88" y="1139.18" width="6.06" height="5.96" fill="#f4edfd"/><rect x="664.33" y="1139.18" width="6.06" height="5.96" fill="#f7edfc"/><rect x="669.79" y="1139.18" width="6.06" height="5.96" fill="#faedfc"/><rect x="675.25" y="1139.18" width="6.06" height="5.96" fill="#fcecfb"/><rect x="680.71" y="1139.18" width="6.06" height="5.96" fill="#fce9f8"/><rect x="686.17" y="1139.18" width="6.06" height="5.96" fill="#fde7f5"/><rect x="691.62" y="1139.18" width="6.06" height="5.96" fill="#fde5f2"/><rect x="697.08" y="1139.18" width="6.06" height="5.96" fill="#fde2ef"/><rect x="702.54" y="1139.18" width="6.06" height="5.96" fill="#fde0ec"/><rect x="708.00" y="1139.18" width="6.06" height="5.96" fill="#fddeea"/><rect x="713.46" y="1139.18" width="6.06" height="5.96" fill="#fedbe7"/><rect x="718.92" y="1139.18" width="6.06" height="5.96" fill="#fed9e4"/><rect x="724.38" y="1139.18" width="6.06" height="5.96" fill="#fed7e1"/><rect x="729.83" y="1139.18" width="6.06" height="5.96" fill="#fed4de"/><rect x="735.29" y="1139.18" width="6.06" height="5.96" fill="#fed2db"/><rect x="740.75" y="1139.18" width="6.06" height="5.96" fill="#ffd0d9"/><rect x="746.21" y="1139.18" width="6.06" height="5.96" fill="#ffcdd6"/><rect x="751.67" y="1139.18" width="6.06" height="5.96" fill="#ffcbd3"/><rect x="757.12" y="1139.18" width="6.06" height="5.96" fill="#ffc9d0"/><rect x="762.58" y="1139.18" width="6.06" height="5.96" fill="#ffc6ce"/><rect x="768.04" y="1139.18" width="6.06" height="5.96" fill="#ffc4cc"/><rect x="773.50" y="1139.18" width="6.06" height="5.96" fill="#ffc2ca"/><rect x="778.96" y="1139.18" width="6.06" height="5.96" fill="#ffc0c8"/><rect x="784.42" y="1139.18" width="6.06" height="5.96" fill="#ffbdc6"/><rect x="789.88" y="1139.18" width="6.06" height="5.96" fill="#ffbbc4"/><rect x="795.33" y="1139.18" width="6.06" height="5.96" fill="#ffb9c1"/><rect x="800.79" y="1139.18" width="6.06" height="5.96" fill="#ffb7bf"/><rect x="806.25" y="1139.18" width="6.06" height="5.96" fill="#ffb5bd"/><rect x="811.71" y="1139.18" width="6.06" height="5.96" fill="#ffb2bb"/><rect x="817.17" y="1139.18" width="6.06" height="5.96" fill="#ffb0b9"/><rect x="822.62" y="1139.18" width="6.06" height="5.96" fill="#ffaeb7"/><rect x="828.08" y="1139.18" width="6.06" height="5.96" fill="#ffacb5"/><rect x="833.54" y="1139.18" width="6.06" height="5.96" fill="#ffa9b3"/><rect x="511.50" y="1144.55" width="6.06" height="5.96" fill="#a7e5ff"/><rect x="516.96" y="1144.55" width="6.06" height="5.96" fill="#a9e5ff"/><rect x="522.42" y="1144.55" width="6.06" height="5.96" fill="#ace5ff"/><rect x="527.88" y="1144.55" width="6.06" height="5.96" fill="#aee6ff"/><rect x="533.33" y="1144.55" width="6.06" height="5.96" fill="#b1e6ff"/><rect x="538.79" y="1144.55" width="6.06" height="5.96" fill="#b3e6ff"/><rect x="544.25" y="1144.55" width="6.06" height="5.96" fill="#b6e7ff"/><rect x="549.71" y="1144.55" width="6.06" height="5.96" fill="#b8e7ff"/><rect x="555.17" y="1144.55" width="6.06" height="5.96" fill="#bbe8ff"/><rect x="560.62" y="1144.55" width="6.06" height="5.96" fill="#bde8ff"/><rect x="566.08" y="1144.55" width="6.06" height="5.96" fill="#c0e8ff"/><rect x="571.54" y="1144.55" width="6.06" height="5.96" fill="#c2e9ff"/><rect x="577.00" y="1144.55" width="6.06" height="5.96" fill="#c5e9ff"/><rect x="582.46" y="1144.55" width="6.06" height="5.96" fill="#c7e9ff"/><rect x="587.92" y="1144.55" width="6.06" height="5.96" fill="#caeaff"/><rect x="593.38" y="1144.55" width="6.06" height="5.96" fill="#cdeaff"/><rect x="598.83" y="1144.55" width="6.06" height="5.96" fill="#d0eaff"/><rect x="604.29" y="1144.55" width="6.06" height="5.96" fill="#d3eaff"/><rect x="609.75" y="1144.55" width="6.06" height="5.96" fill="#d7eafe"/><rect x="615.21" y="1144.55" width="6.06" height="5.96" fill="#daeafe"/><rect x="620.67" y="1144.55" width="6.06" height="5.96" fill="#ddeafe"/><rect x="626.12" y="1144.55" width="6.06" height="5.96" fill="#e1eafe"/><rect x="631.58" y="1144.55" width="6.06" height="5.96" fill="#e4eafe"/><rect x="637.04" y="1144.55" width="6.06" height="5.96" fill="#e7eafe"/><rect x="642.50" y="1144.55" width="6.06" height="5.96" fill="#eaeafe"/><rect x="647.96" y="1144.55" width="6.06" height="5.96" fill="#eeeafd"/><rect x="653.42" y="1144.55" width="6.06" height="5.96" fill="#f1eafd"/><rect x="658.88" y="1144.55" width="6.06" height="5.96" fill="#f4eafd"/><rect x="664.33" y="1144.55" width="6.06" height="5.96" fill="#f8eafd"/><rect x="669.79" y="1144.55" width="6.06" height="5.96" fill="#fbeafd"/><rect x="675.25" y="1144.55" width="6.06" height="5.96" fill="#fde9fb"/><rect x="680.71" y="1144.55" width="6.06" height="5.96" fill="#fde6f9"/><rect x="686.17" y="1144.55" width="6.06" height="5.96" fill="#fde4f6"/><rect x="691.62" y="1144.55" width="6.06" height="5.96" fill="#fde2f3"/><rect x="697.08" y="1144.55" width="6.06" height="5.96" fill="#fde0f0"/><rect x="702.54" y="1144.55" width="6.06" height="5.96" fill="#fedded"/><rect x="708.00" y="1144.55" width="6.06" height="5.96" fill="#fedbeb"/><rect x="713.46" y="1144.55" width="6.06" height="5.96" fill="#fed9e8"/><rect x="718.92" y="1144.55" width="6.06" height="5.96" fill="#fed6e5"/><rect x="724.38" y="1144.55" width="6.06" height="5.96" fill="#fed4e2"/><rect x="729.83" y="1144.55" width="6.06" height="5.96" fill="#fed2df"/><rect x="735.29" y="1144.55" width="6.06" height="5.96" fill="#fed0dd"/><rect x="740.75" y="1144.55" width="6.06" height="5.96" fill="#ffcdda"/><rect x="746.21" y="1144.55" width="6.06" height="5.96" fill="#ffcbd7"/><rect x="751.67" y="1144.55" width="6.06" height="5.96" fill="#ffc9d4"/><rect x="757.12" y="1144.55" width="6.06" height="5.96" fill="#ffc7d2"/><rect x="762.58" y="1144.55" width="6.06" height="5.96" fill="#ffc4d0"/><rect x="768.04" y="1144.55" width="6.06" height="5.96" fill="#ffc2ce"/><rect x="773.50" y="1144.55" width="6.06" height="5.96" fill="#ffc0cb"/><rect x="778.96" y="1144.55" width="6.06" height="5.96" fill="#ffbec9"/><rect x="784.42" y="1144.55" width="6.06" height="5.96" fill="#ffbbc7"/><rect x="789.88" y="1144.55" width="6.06" height="5.96" fill="#ffb9c5"/><rect x="795.33" y="1144.55" width="6.06" height="5.96" fill="#ffb7c3"/><rect x="800.79" y="1144.55" width="6.06" height="5.96" fill="#ffb5c1"/><rect x="806.25" y="1144.55" width="6.06" height="5.96" fill="#ffb3bf"/><rect x="811.71" y="1144.55" width="6.06" height="5.96" fill="#ffb0bd"/><rect x="817.17" y="1144.55" width="6.06" height="5.96" fill="#ffaeba"/><rect x="822.62" y="1144.55" width="6.06" height="5.96" fill="#ffacb8"/><rect x="828.08" y="1144.55" width="6.06" height="5.96" fill="#ffaab6"/><rect x="833.54" y="1144.55" width="6.06" height="5.96" fill="#ffa7b4"/><rect x="511.50" y="1149.91" width="6.06" height="5.96" fill="#a7e1ff"/><rect x="516.96" y="1149.91" width="6.06" height="5.96" fill="#aae1ff"/><rect x="522.42" y="1149.91" width="6.06" height="5.96" fill="#ade2ff"/><rect x="527.88" y="1149.91" width="6.06" height="5.96" fill="#afe2ff"/><rect x="533.33" y="1149.91" width="6.06" height="5.96" fill="#b2e3ff"/><rect x="538.79" y="1149.91" width="6.06" height="5.96" fill="#b4e3ff"/><rect x="544.25" y="1149.91" width="6.06" height="5.96" fill="#b7e4ff"/><rect x="549.71" y="1149.91" width="6.06" height="5.96" fill="#b9e4ff"/><rect x="555.17" y="1149.91" width="6.06" height="5.96" fill="#bce4ff"/><rect x="560.62" y="1149.91" width="6.06" height="5.96" fill="#bee5ff"/><rect x="566.08" y="1149.91" width="6.06" height="5.96" fill="#c1e5ff"/><rect x="571.54" y="1149.91" width="6.06" height="5.96" fill="#c3e6ff"/><rect x="577.00" y="1149.91" width="6.06" height="5.96" fill="#c6e6ff"/><rect x="582.46" y="1149.91" width="6.06" height="5.96" fill="#c9e6ff"/><rect x="587.92" y="1149.91" width="6.06" height="5.96" fill="#cbe7ff"/><rect x="593.38" y="1149.91" width="6.06" height="5.96" fill="#cee7ff"/><rect x="598.83" y="1149.91" width="6.06" height="5.96" fill="#d1e7ff"/><rect x="604.29" y="1149.91" width="6.06" height="5.96" fill="#d5e7ff"/><rect x="609.75" y="1149.91" width="6.06" height="5.96" fill="#d8e7ff"/><rect x="615.21" y="1149.91" width="6.06" height="5.96" fill="#dbe7ff"/><rect x="620.67" y="1149.91" width="6.06" height="5.96" fill="#dee7fe"/><rect x="626.12" y="1149.91" width="6.06" height="5.96" fill="#e2e7fe"/><rect x="631.58" y="1149.91" width="6.06" height="5.96" fill="#e5e7fe"/><rect x="637.04" y="1149.91" width="6.06" height="5.96" fill="#e8e7fe"/><rect x="642.50" y="1149.91" width="6.06" height="5.96" fill="#ebe7fe"/><rect x="647.96" y="1149.91" width="6.06" height="5.96" fill="#efe7fe"/><rect x="653.42" y="1149.91" width="6.06" height="5.96" fill="#f2e7fe"/><rect x="658.88" y="1149.91" width="6.06" height="5.96" fill="#f5e7fe"/><rect x="664.33" y="1149.91" width="6.06" height="5.96" fill="#f9e7fe"/><rect x="669.79" y="1149.91" width="6.06" height="5.96" fill="#fce7fd"/><rect x="675.25" y="1149.91" width="6.06" height="5.96" fill="#fde6fc"/><rect x="680.71" y="1149.91" width="6.06" height="5.96" fill="#fee4f9"/><rect x="686.17" y="1149.91" width="6.06" height="5.96" fill="#fee1f7"/><rect x="691.62" y="1149.91" width="6.06" height="5.96" fill="#fedff4"/><rect x="697.08" y="1149.91" width="6.06" height="5.96" fill="#feddf1"/><rect x="702.54" y="1149.91" width="6.06" height="5.96" fill="#fedbee"/><rect x="708.00" y="1149.91" width="6.06" height="5.96" fill="#fed8ec"/><rect x="713.46" y="1149.91" width="6.06" height="5.96" fill="#fed6e9"/><rect x="718.92" y="1149.91" width="6.06" height="5.96" fill="#fed4e6"/><rect x="724.38" y="1149.91" width="6.06" height="5.96" fill="#fed2e3"/><rect x="729.83" y="1149.91" width="6.06" height="5.96" fill="#ffd0e1"/><rect x="735.29" y="1149.91" width="6.06" height="5.96" fill="#ffcdde"/><rect x="740.75" y="1149.91" width="6.06" height="5.96" fill="#ffcbdb"/><rect x="746.21" y="1149.91" width="6.06" height="5.96" fill="#ffc9d8"/><rect x="751.67" y="1149.91" width="6.06" height="5.96" fill="#ffc7d6"/><rect x="757.12" y="1149.91" width="6.06" height="5.96" fill="#ffc4d3"/><rect x="762.58" y="1149.91" width="6.06" height="5.96" fill="#ffc2d1"/><rect x="768.04" y="1149.91" width="6.06" height="5.96" fill="#ffc0cf"/><rect x="773.50" y="1149.91" width="6.06" height="5.96" fill="#ffbecd"/><rect x="778.96" y="1149.91" width="6.06" height="5.96" fill="#ffbccb"/><rect x="784.42" y="1149.91" width="6.06" height="5.96" fill="#ffb9c9"/><rect x="789.88" y="1149.91" width="6.06" height="5.96" fill="#ffb7c6"/><rect x="795.33" y="1149.91" width="6.06" height="5.96" fill="#ffb5c4"/><rect x="800.79" y="1149.91" width="6.06" height="5.96" fill="#ffb3c2"/><rect x="806.25" y="1149.91" width="6.06" height="5.96" fill="#ffb1c0"/><rect x="811.71" y="1149.91" width="6.06" height="5.96" fill="#ffaebe"/><rect x="817.17" y="1149.91" width="6.06" height="5.96" fill="#ffacbc"/><rect x="822.62" y="1149.91" width="6.06" height="5.96" fill="#ffaaba"/><rect x="828.08" y="1149.91" width="6.06" height="5.96" fill="#ffa8b8"/><rect x="833.54" y="1149.91" width="6.06" height="5.96" fill="#ffa6b5"/><rect x="511.50" y="1155.27" width="6.06" height="5.96" fill="#a8deff"/><rect x="516.96" y="1155.27" width="6.06" height="5.96" fill="#abdeff"/><rect x="522.42" y="1155.27" width="6.06" height="5.96" fill="#addeff"/><rect x="527.88" y="1155.27" width="6.06" height="5.96" fill="#b0dfff"/><rect x="533.33" y="1155.27" width="6.06" height="5.96" fill="#b3dfff"/><rect x="538.79" y="1155.27" width="6.06" height="5.96" fill="#b5e0ff"/><rect x="544.25" y="1155.27" width="6.06" height="5.96" fill="#b8e0ff"/><rect x="549.71" y="1155.27" width="6.06" height="5.96" fill="#bae1ff"/><rect x="555.17" y="1155.27" width="6.06" height="5.96" fill="#bde1ff"/><rect x="560.62" y="1155.27" width="6.06" height="5.96" fill="#c0e2ff"/><rect x="566.08" y="1155.27" width="6.06" height="5.96" fill="#c2e2ff"/><rect x="571.54" y="1155.27" width="6.06" height="5.96" fill="#c5e3ff"/><rect x="577.00" y="1155.27" width="6.06" height="5.96" fill="#c7e3ff"/><rect x="582.46" y="1155.27" width="6.06" height="5.96" fill="#cae4ff"/><rect x="587.92" y="1155.27" width="6.06" height="5.96" fill="#cde4ff"/><rect x="593.38" y="1155.27" width="6.06" height="5.96" fill="#cfe4ff"/><rect x="598.83" y="1155.27" width="6.06" height="5.96" fill="#d3e4ff"/><rect x="604.29" y="1155.27" width="6.06" height="5.96" fill="#d6e4ff"/><rect x="609.75" y="1155.27" width="6.06" height="5.96" fill="#d9e4ff"/><rect x="615.21" y="1155.27" width="6.06" height="5.96" fill="#dce4ff"/><rect x="620.67" y="1155.27" width="6.06" height="5.96" fill="#e0e4ff"/><rect x="626.12" y="1155.27" width="6.06" height="5.96" fill="#e3e4ff"/><rect x="631.58" y="1155.27" width="6.06" height="5.96" fill="#e6e4ff"/><rect x="637.04" y="1155.27" width="6.06" height="5.96" fill="#e9e4fe"/><rect x="642.50" y="1155.27" width="6.06" height="5.96" fill="#ece4fe"/><rect x="647.96" y="1155.27" width="6.06" height="5.96" fill="#f0e4fe"/><rect x="653.42" y="1155.27" width="6.06" height="5.96" fill="#f3e4fe"/><rect x="658.88" y="1155.27" width="6.06" height="5.96" fill="#f6e4fe"/><rect x="664.33" y="1155.27" width="6.06" height="5.96" fill="#f9e4fe"/><rect x="669.79" y="1155.27" width="6.06" height="5.96" fill="#fce4fe"/><rect x="675.25" y="1155.27" width="6.06" height="5.96" fill="#fee3fd"/><rect x="680.71" y="1155.27" width="6.06" height="5.96" fill="#fee1fa"/><rect x="686.17" y="1155.27" width="6.06" height="5.96" fill="#fedff7"/><rect x="691.62" y="1155.27" width="6.06" height="5.96" fill="#feddf5"/><rect x="697.08" y="1155.27" width="6.06" height="5.96" fill="#fedaf2"/><rect x="702.54" y="1155.27" width="6.06" height="5.96" fill="#fed8ef"/><rect x="708.00" y="1155.27" width="6.06" height="5.96" fill="#fed6ed"/><rect x="713.46" y="1155.27" width="6.06" height="5.96" fill="#ffd4ea"/><rect x="718.92" y="1155.27" width="6.06" height="5.96" fill="#ffd2e7"/><rect x="724.38" y="1155.27" width="6.06" height="5.96" fill="#ffcfe5"/><rect x="729.83" y="1155.27" width="6.06" height="5.96" fill="#ffcde2"/><rect x="735.29" y="1155.27" width="6.06" height="5.96" fill="#ffcbdf"/><rect x="740.75" y="1155.27" width="6.06" height="5.96" fill="#ffc9dd"/><rect x="746.21" y="1155.27" width="6.06" height="5.96" fill="#ffc7da"/><rect x="751.67" y="1155.27" width="6.06" height="5.96" fill="#ffc4d7"/><rect x="757.12" y="1155.27" width="6.06" height="5.96" fill="#ffc2d5"/><rect x="762.58" y="1155.27" width="6.06" height="5.96" fill="#ffc0d3"/><rect x="768.04" y="1155.27" width="6.06" height="5.96" fill="#ffbed0"/><rect x="773.50" y="1155.27" width="6.06" height="5.96" fill="#ffbcce"/><rect x="778.96" y="1155.27" width="6.06" height="5.96" fill="#ffbacc"/><rect x="784.42" y="1155.27" width="6.06" height="5.96" fill="#ffb7ca"/><rect x="789.88" y="1155.27" width="6.06" height="5.96" fill="#ffb5c8"/><rect x="795.33" y="1155.27" width="6.06" height="5.96" fill="#ffb3c6"/><rect x="800.79" y="1155.27" width="6.06" height="5.96" fill="#ffb1c4"/><rect x="806.25" y="1155.27" width="6.06" height="5.96" fill="#ffafc2"/><rect x="811.71" y="1155.27" width="6.06" height="5.96" fill="#ffacbf"/><rect x="817.17" y="1155.27" width="6.06" height="5.96" fill="#ffaabd"/><rect x="822.62" y="1155.27" width="6.06" height="5.96" fill="#ffa8bb"/><rect x="828.08" y="1155.27" width="6.06" height="5.96" fill="#ffa6b9"/><rect x="833.54" y="1155.27" width="6.06" height="5.96" fill="#ffa4b7"/><rect x="511.50" y="1160.64" width="6.06" height="5.96" fill="#a9daff"/><rect x="516.96" y="1160.64" width="6.06" height="5.96" fill="#acdbff"/><rect x="522.42" y="1160.64" width="6.06" height="5.96" fill="#aedbff"/><rect x="527.88" y="1160.64" width="6.06" height="5.96" fill="#b1dcff"/><rect x="533.33" y="1160.64" width="6.06" height="5.96" fill="#b4dcff"/><rect x="538.79" y="1160.64" width="6.06" height="5.96" fill="#b6ddff"/><rect x="544.25" y="1160.64" width="6.06" height="5.96" fill="#b9ddff"/><rect x="549.71" y="1160.64" width="6.06" height="5.96" fill="#bbdeff"/><rect x="555.17" y="1160.64" width="6.06" height="5.96" fill="#bedeff"/><rect x="560.62" y="1160.64" width="6.06" height="5.96" fill="#c1dfff"/><rect x="566.08" y="1160.64" width="6.06" height="5.96" fill="#c3dfff"/><rect x="571.54" y="1160.64" width="6.06" height="5.96" fill="#c6e0ff"/><rect x="577.00" y="1160.64" width="6.06" height="5.96" fill="#c9e0ff"/><rect x="582.46" y="1160.64" width="6.06" height="5.96" fill="#cbe1ff"/><rect x="587.92" y="1160.64" width="6.06" height="5.96" fill="#cee1ff"/><rect x="593.38" y="1160.64" width="6.06" height="5.96" fill="#d1e1ff"/><rect x="598.83" y="1160.64" width="6.06" height="5.96" fill="#d4e1ff"/><rect x="604.29" y="1160.64" width="6.06" height="5.96" fill="#d7e1ff"/><rect x="609.75" y="1160.64" width="6.06" height="5.96" fill="#dae1ff"/><rect x="615.21" y="1160.64" width="6.06" height="5.96" fill="#dde1ff"/><rect x="620.67" y="1160.64" width="6.06" height="5.96" fill="#e1e1ff"/><rect x="626.12" y="1160.64" width="6.06" height="5.96" fill="#e4e1ff"/><rect x="631.58" y="1160.64" width="6.06" height="5.96" fill="#e7e1ff"/><rect x="637.04" y="1160.64" width="6.06" height="5.96" fill="#eae1ff"/><rect x="642.50" y="1160.64" width="6.06" height="5.96" fill="#ede1ff"/><rect x="647.96" y="1160.64" width="6.06" height="5.96" fill="#f0e1ff"/><rect x="653.42" y="1160.64" width="6.06" height="5.96" fill="#f4e1ff"/><rect x="658.88" y="1160.64" width="6.06" height="5.96" fill="#f7e1ff"/><rect x="664.33" y="1160.64" width="6.06" height="5.96" fill="#fae1ff"/><rect x="669.79" y="1160.64" width="6.06" height="5.96" fill="#fde1ff"/><rect x="675.25" y="1160.64" width="6.06" height="5.96" fill="#ffe0fd"/><rect x="680.71" y="1160.64" width="6.06" height="5.96" fill="#ffdefb"/><rect x="686.17" y="1160.64" width="6.06" height="5.96" fill="#ffdcf8"/><rect x="691.62" y="1160.64" width="6.06" height="5.96" fill="#ffdaf5"/><rect x="697.08" y="1160.64" width="6.06" height="5.96" fill="#ffd8f3"/><rect x="702.54" y="1160.64" width="6.06" height="5.96" fill="#ffd6f0"/><rect x="708.00" y="1160.64" width="6.06" height="5.96" fill="#ffd3ee"/><rect x="713.46" y="1160.64" width="6.06" height="5.96" fill="#ffd1eb"/><rect x="718.92" y="1160.64" width="6.06" height="5.96" fill="#ffcfe8"/><rect x="724.38" y="1160.64" width="6.06" height="5.96" fill="#ffcde6"/><rect x="729.83" y="1160.64" width="6.06" height="5.96" fill="#ffcbe3"/><rect x="735.29" y="1160.64" width="6.06" height="5.96" fill="#ffc9e0"/><rect x="740.75" y="1160.64" width="6.06" height="5.96" fill="#ffc6de"/><rect x="746.21" y="1160.64" width="6.06" height="5.96" fill="#ffc4db"/><rect x="751.67" y="1160.64" width="6.06" height="5.96" fill="#ffc2d9"/><rect x="757.12" y="1160.64" width="6.06" height="5.96" fill="#ffc0d6"/><rect x="762.58" y="1160.64" width="6.06" height="5.96" fill="#ffbed4"/><rect x="768.04" y="1160.64" width="6.06" height="5.96" fill="#ffbcd2"/><rect x="773.50" y="1160.64" width="6.06" height="5.96" fill="#ffbad0"/><rect x="778.96" y="1160.64" width="6.06" height="5.96" fill="#ffb7ce"/><rect x="784.42" y="1160.64" width="6.06" height="5.96" fill="#ffb5cc"/><rect x="789.88" y="1160.64" width="6.06" height="5.96" fill="#ffb3c9"/><rect x="795.33" y="1160.64" width="6.06" height="5.96" fill="#ffb1c7"/><rect x="800.79" y="1160.64" width="6.06" height="5.96" fill="#ffafc5"/><rect x="806.25" y="1160.64" width="6.06" height="5.96" fill="#ffadc3"/><rect x="811.71" y="1160.64" width="6.06" height="5.96" fill="#ffabc1"/><rect x="817.17" y="1160.64" width="6.06" height="5.96" fill="#ffa8bf"/><rect x="822.62" y="1160.64" width="6.06" height="5.96" fill="#ffa6bd"/><rect x="828.08" y="1160.64" width="6.06" height="5.96" fill="#ffa4ba"/><rect x="833.54" y="1160.64" width="6.06" height="5.96" fill="#ffa2b8"/><rect x="511.50" y="1166.00" width="6.06" height="5.96" fill="#a9d7ff"/><rect x="516.96" y="1166.00" width="6.06" height="5.96" fill="#acd8ff"/><rect x="522.42" y="1166.00" width="6.06" height="5.96" fill="#afd8ff"/><rect x="527.88" y="1166.00" width="6.06" height="5.96" fill="#b1d9ff"/><rect x="533.33" y="1166.00" width="6.06" height="5.96" fill="#b4d9ff"/><rect x="538.79" y="1166.00" width="6.06" height="5.96" fill="#b7daff"/><rect x="544.25" y="1166.00" width="6.06" height="5.96" fill="#b9daff"/><rect x="549.71" y="1166.00" width="6.06" height="5.96" fill="#bcdbff"/><rect x="555.17" y="1166.00" width="6.06" height="5.96" fill="#bfdbff"/><rect x="560.62" y="1166.00" width="6.06" height="5.96" fill="#c1dcff"/><rect x="566.08" y="1166.00" width="6.06" height="5.96" fill="#c4ddff"/><rect x="571.54" y="1166.00" width="6.06" height="5.96" fill="#c7ddff"/><rect x="577.00" y="1166.00" width="6.06" height="5.96" fill="#c9deff"/><rect x="582.46" y="1166.00" width="6.06" height="5.96" fill="#ccdeff"/><rect x="587.92" y="1166.00" width="6.06" height="5.96" fill="#cfdfff"/><rect x="593.38" y="1166.00" width="6.06" height="5.96" fill="#d2dfff"/><rect x="598.83" y="1166.00" width="6.06" height="5.96" fill="#d5dfff"/><rect x="604.29" y="1166.00" width="6.06" height="5.96" fill="#d8dfff"/><rect x="609.75" y="1166.00" width="6.06" height="5.96" fill="#dbdfff"/><rect x="615.21" y="1166.00" width="6.06" height="5.96" fill="#dedfff"/><rect x="620.67" y="1166.00" width="6.06" height="5.96" fill="#e1dfff"/><rect x="626.12" y="1166.00" width="6.06" height="5.96" fill="#e4dfff"/><rect x="631.58" y="1166.00" width="6.06" height="5.96" fill="#e8dfff"/><rect x="637.04" y="1166.00" width="6.06" height="5.96" fill="#ebdfff"/><rect x="642.50" y="1166.00" width="6.06" height="5.96" fill="#eedfff"/><rect x="647.96" y="1166.00" width="6.06" height="5.96" fill="#f1dfff"/><rect x="653.42" y="1166.00" width="6.06" height="5.96" fill="#f4dfff"/><rect x="658.88" y="1166.00" width="6.06" height="5.96" fill="#f7dfff"/><rect x="664.33" y="1166.00" width="6.06" height="5.96" fill="#fadfff"/><rect x="669.79" y="1166.00" width="6.06" height="5.96" fill="#fddfff"/><rect x="675.25" y="1166.00" width="6.06" height="5.96" fill="#ffdefe"/><rect x="680.71" y="1166.00" width="6.06" height="5.96" fill="#ffdcfb"/><rect x="686.17" y="1166.00" width="6.06" height="5.96" fill="#ffdaf8"/><rect x="691.62" y="1166.00" width="6.06" height="5.96" fill="#ffd7f6"/><rect x="697.08" y="1166.00" width="6.06" height="5.96" fill="#ffd5f3"/><rect x="702.54" y="1166.00" width="6.06" height="5.96" fill="#ffd3f1"/><rect x="708.00" y="1166.00" width="6.06" height="5.96" fill="#ffd1ee"/><rect x="713.46" y="1166.00" width="6.06" height="5.96" fill="#ffcfec"/><rect x="718.92" y="1166.00" width="6.06" height="5.96" fill="#ffcde9"/><rect x="724.38" y="1166.00" width="6.06" height="5.96" fill="#ffcbe6"/><rect x="729.83" y="1166.00" width="6.06" height="5.96" fill="#ffc9e4"/><rect x="735.29" y="1166.00" width="6.06" height="5.96" fill="#ffc6e1"/><rect x="740.75" y="1166.00" width="6.06" height="5.96" fill="#ffc4de"/><rect x="746.21" y="1166.00" width="6.06" height="5.96" fill="#ffc2dc"/><rect x="751.67" y="1166.00" width="6.06" height="5.96" fill="#ffc0d9"/><rect x="757.12" y="1166.00" width="6.06" height="5.96" fill="#ffbed7"/><rect x="762.58" y="1166.00" width="6.06" height="5.96" fill="#ffbcd5"/><rect x="768.04" y="1166.00" width="6.06" height="5.96" fill="#ffbad3"/><rect x="773.50" y="1166.00" width="6.06" height="5.96" fill="#ffb8d1"/><rect x="778.96" y="1166.00" width="6.06" height="5.96" fill="#ffb5ce"/><rect x="784.42" y="1166.00" width="6.06" height="5.96" fill="#ffb3cc"/><rect x="789.88" y="1166.00" width="6.06" height="5.96" fill="#ffb1ca"/><rect x="795.33" y="1166.00" width="6.06" height="5.96" fill="#ffafc8"/><rect x="800.79" y="1166.00" width="6.06" height="5.96" fill="#ffadc6"/><rect x="806.25" y="1166.00" width="6.06" height="5.96" fill="#ffabc4"/><rect x="811.71" y="1166.00" width="6.06" height="5.96" fill="#ffa9c2"/><rect x="817.17" y="1166.00" width="6.06" height="5.96" fill="#ffa7bf"/><rect x="822.62" y="1166.00" width="6.06" height="5.96" fill="#ffa5bd"/><rect x="828.08" y="1166.00" width="6.06" height="5.96" fill="#ffa2bb"/><rect x="833.54" y="1166.00" width="6.06" height="5.96" fill="#ffa0b9"/><rect x="511.50" y="1171.36" width="6.06" height="5.96" fill="#a9d5ff"/><rect x="516.96" y="1171.36" width="6.06" height="5.96" fill="#acd6ff"/><rect x="522.42" y="1171.36" width="6.06" height="5.96" fill="#afd6ff"/><rect x="527.88" y="1171.36" width="6.06" height="5.96" fill="#b1d7ff"/><rect x="533.33" y="1171.36" width="6.06" height="5.96" fill="#b4d7ff"/><rect x="538.79" y="1171.36" width="6.06" height="5.96" fill="#b7d8ff"/><rect x="544.25" y="1171.36" width="6.06" height="5.96" fill="#b9d8ff"/><rect x="549.71" y="1171.36" width="6.06" height="5.96" fill="#bcd9ff"/><rect x="555.17" y="1171.36" width="6.06" height="5.96" fill="#bfd9ff"/><rect x="560.62" y="1171.36" width="6.06" height="5.96" fill="#c1daff"/><rect x="566.08" y="1171.36" width="6.06" height="5.96" fill="#c4daff"/><rect x="571.54" y="1171.36" width="6.06" height="5.96" fill="#c7dbff"/><rect x="577.00" y="1171.36" width="6.06" height="5.96" fill="#c9dbff"/><rect x="582.46" y="1171.36" width="6.06" height="5.96" fill="#ccdcff"/><rect x="587.92" y="1171.36" width="6.06" height="5.96" fill="#cfdcff"/><rect x="593.38" y="1171.36" width="6.06" height="5.96" fill="#d2ddff"/><rect x="598.83" y="1171.36" width="6.06" height="5.96" fill="#d5ddff"/><rect x="604.29" y="1171.36" width="6.06" height="5.96" fill="#d8ddff"/><rect x="609.75" y="1171.36" width="6.06" height="5.96" fill="#dbddff"/><rect x="615.21" y="1171.36" width="6.06" height="5.96" fill="#deddff"/><rect x="620.67" y="1171.36" width="6.06" height="5.96" fill="#e1ddff"/><rect x="626.12" y="1171.36" width="6.06" height="5.96" fill="#e4ddff"/><rect x="631.58" y="1171.36" width="6.06" height="5.96" fill="#e8ddff"/><rect x="637.04" y="1171.36" width="6.06" height="5.96" fill="#ebddff"/><rect x="642.50" y="1171.36" width="6.06" height="5.96" fill="#eeddff"/><rect x="647.96" y="1171.36" width="6.06" height="5.96" fill="#f1ddff"/><rect x="653.42" y="1171.36" width="6.06" height="5.96" fill="#f4ddff"/><rect x="658.88" y="1171.36" width="6.06" height="5.96" fill="#f7ddff"/><rect x="664.33" y="1171.36" width="6.06" height="5.96" fill="#faddff"/><rect x="669.79" y="1171.36" width="6.06" height="5.96" fill="#fdddff"/><rect x="675.25" y="1171.36" width="6.06" height="5.96" fill="#ffdcfe"/><rect x="680.71" y="1171.36" width="6.06" height="5.96" fill="#ffdafb"/><rect x="686.17" y="1171.36" width="6.06" height="5.96" fill="#ffd7f8"/><rect x="691.62" y="1171.36" width="6.06" height="5.96" fill="#ffd5f6"/><rect x="697.08" y="1171.36" width="6.06" height="5.96" fill="#ffd3f3"/><rect x="702.54" y="1171.36" width="6.06" height="5.96" fill="#ffd1f1"/><rect x="708.00" y="1171.36" width="6.06" height="5.96" fill="#ffcfee"/><rect x="713.46" y="1171.36" width="6.06" height="5.96" fill="#ffcdec"/><rect x="718.92" y="1171.36" width="6.06" height="5.96" fill="#ffcbe9"/><rect x="724.38" y="1171.36" width="6.06" height="5.96" fill="#ffc8e6"/><rect x="729.83" y="1171.36" width="6.06" height="5.96" fill="#ffc6e4"/><rect x="735.29" y="1171.36" width="6.06" height="5.96" fill="#ffc4e1"/><rect x="740.75" y="1171.36" width="6.06" height="5.96" fill="#ffc2de"/><rect x="746.21" y="1171.36" width="6.06" height="5.96" fill="#ffc0dc"/><rect x="751.67" y="1171.36" width="6.06" height="5.96" fill="#ffbed9"/><rect x="757.12" y="1171.36" width="6.06" height="5.96" fill="#ffbcd7"/><rect x="762.58" y="1171.36" width="6.06" height="5.96" fill="#ffbad5"/><rect x="768.04" y="1171.36" width="6.06" height="5.96" fill="#ffb8d3"/><rect x="773.50" y="1171.36" width="6.06" height="5.96" fill="#ffb6d1"/><rect x="778.96" y="1171.36" width="6.06" height="5.96" fill="#ffb3ce"/><rect x="784.42" y="1171.36" width="6.06" height="5.96" fill="#ffb1cc"/><rect x="789.88" y="1171.36" width="6.06" height="5.96" fill="#ffafca"/><rect x="795.33" y="1171.36" width="6.06" height="5.96" fill="#ffadc8"/><rect x="800.79" y="1171.36" width="6.06" height="5.96" fill="#ffabc6"/><rect x="806.25" y="1171.36" width="6.06" height="5.96" fill="#ffa9c4"/><rect x="811.71" y="1171.36" width="6.06" height="5.96" fill="#ffa7c2"/><rect x="817.17" y="1171.36" width="6.06" height="5.96" fill="#ffa5bf"/><rect x="822.62" y="1171.36" width="6.06" height="5.96" fill="#ffa3bd"/><rect x="828.08" y="1171.36" width="6.06" height="5.96" fill="#ffa1bb"/><rect x="833.54" y="1171.36" width="6.06" height="5.96" fill="#ff9fb9"/><rect x="511.50" y="1176.73" width="6.06" height="5.96" fill="#a9d3ff"/><rect x="516.96" y="1176.73" width="6.06" height="5.96" fill="#acd3ff"/><rect x="522.42" y="1176.73" width="6.06" height="5.96" fill="#afd4ff"/><rect x="527.88" y="1176.73" width="6.06" height="5.96" fill="#b1d4ff"/><rect x="533.33" y="1176.73" width="6.06" height="5.96" fill="#b4d5ff"/><rect x="538.79" y="1176.73" width="6.06" height="5.96" fill="#b7d5ff"/><rect x="544.25" y="1176.73" width="6.06" height="5.96" fill="#b9d6ff"/><rect x="549.71" y="1176.73" width="6.06" height="5.96" fill="#bcd7ff"/><rect x="555.17" y="1176.73" width="6.06" height="5.96" fill="#bfd7ff"/><rect x="560.62" y="1176.73" width="6.06" height="5.96" fill="#c1d8ff"/><rect x="566.08" y="1176.73" width="6.06" height="5.96" fill="#c4d8ff"/><rect x="571.54" y="1176.73" width="6.06" height="5.96" fill="#c7d9ff"/><rect x="577.00" y="1176.73" width="6.06" height="5.96" fill="#c9d9ff"/><rect x="582.46" y="1176.73" width="6.06" height="5.96" fill="#ccdaff"/><rect x="587.92" y="1176.73" width="6.06" height="5.96" fill="#cfdaff"/><rect x="593.38" y="1176.73" width="6.06" height="5.96" fill="#d2dbff"/><rect x="598.83" y="1176.73" width="6.06" height="5.96" fill="#d5dbff"/><rect x="604.29" y="1176.73" width="6.06" height="5.96" fill="#d8dbff"/><rect x="609.75" y="1176.73" width="6.06" height="5.96" fill="#dbdbff"/><rect x="615.21" y="1176.73" width="6.06" height="5.96" fill="#dedbff"/><rect x="620.67" y="1176.73" width="6.06" height="5.96" fill="#e1dbff"/><rect x="626.12" y="1176.73" width="6.06" height="5.96" fill="#e4dbff"/><rect x="631.58" y="1176.73" width="6.06" height="5.96" fill="#e8dbff"/><rect x="637.04" y="1176.73" width="6.06" height="5.96" fill="#ebdbff"/><rect x="642.50" y="1176.73" width="6.06" height="5.96" fill="#eedbff"/><rect x="647.96" y="1176.73" width="6.06" height="5.96" fill="#f1dbff"/><rect x="653.42" y="1176.73" width="6.06" height="5.96" fill="#f4dbff"/><rect x="658.88" y="1176.73" width="6.06" height="5.96" fill="#f7dbff"/><rect x="664.33" y="1176.73" width="6.06" height="5.96" fill="#fadbff"/><rect x="669.79" y="1176.73" width="6.06" height="5.96" fill="#fddbff"/><rect x="675.25" y="1176.73" width="6.06" height="5.96" fill="#ffd9fe"/><rect x="680.71" y="1176.73" width="6.06" height="5.96" fill="#ffd7fb"/><rect x="686.17" y="1176.73" width="6.06" height="5.96" fill="#ffd5f8"/><rect x="691.62" y="1176.73" width="6.06" height="5.96" fill="#ffd3f6"/><rect x="697.08" y="1176.73" width="6.06" height="5.96" fill="#ffd1f3"/><rect x="702.54" y="1176.73" width="6.06" height="5.96" fill="#ffcff1"/><rect x="708.00" y="1176.73" width="6.06" height="5.96" fill="#ffcdee"/><rect x="713.46" y="1176.73" width="6.06" height="5.96" fill="#ffcbec"/><rect x="718.92" y="1176.73" width="6.06" height="5.96" fill="#ffc8e9"/><rect x="724.38" y="1176.73" width="6.06" height="5.96" fill="#ffc6e6"/><rect x="729.83" y="1176.73" width="6.06" height="5.96" fill="#ffc4e4"/><rect x="735.29" y="1176.73" width="6.06" height="5.96" fill="#ffc2e1"/><rect x="740.75" y="1176.73" width="6.06" height="5.96" fill="#ffc0de"/><rect x="746.21" y="1176.73" width="6.06" height="5.96" fill="#ffbedc"/><rect x="751.67" y="1176.73" width="6.06" height="5.96" fill="#ffbcd9"/><rect x="757.12" y="1176.73" width="6.06" height="5.96" fill="#ffbad7"/><rect x="762.58" y="1176.73" width="6.06" height="5.96" fill="#ffb8d5"/><rect x="768.04" y="1176.73" width="6.06" height="5.96" fill="#ffb6d3"/><rect x="773.50" y="1176.73" width="6.06" height="5.96" fill="#ffb4d1"/><rect x="778.96" y="1176.73" width="6.06" height="5.96" fill="#ffb1ce"/><rect x="784.42" y="1176.73" width="6.06" height="5.96" fill="#ffafcc"/><rect x="789.88" y="1176.73" width="6.06" height="5.96" fill="#ffadca"/><rect x="795.33" y="1176.73" width="6.06" height="5.96" fill="#ffabc8"/><rect x="800.79" y="1176.73" width="6.06" height="5.96" fill="#ffa9c6"/><rect x="806.25" y="1176.73" width="6.06" height="5.96" fill="#ffa7c4"/><rect x="811.71" y="1176.73" width="6.06" height="5.96" fill="#ffa5c2"/><rect x="817.17" y="1176.73" width="6.06" height="5.96" fill="#ffa3bf"/><rect x="822.62" y="1176.73" width="6.06" height="5.96" fill="#ffa1bd"/><rect x="828.08" y="1176.73" width="6.06" height="5.96" fill="#ff9fbb"/><rect x="833.54" y="1176.73" width="6.06" height="5.96" fill="#ff9db9"/><rect x="511.50" y="1182.09" width="6.06" height="5.96" fill="#a9d1ff"/><rect x="516.96" y="1182.09" width="6.06" height="5.96" fill="#acd1ff"/><rect x="522.42" y="1182.09" width="6.06" height="5.96" fill="#afd2ff"/><rect x="527.88" y="1182.09" width="6.06" height="5.96" fill="#b1d2ff"/><rect x="533.33" y="1182.09" width="6.06" height="5.96" fill="#b4d3ff"/><rect x="538.79" y="1182.09" width="6.06" height="5.96" fill="#b7d3ff"/><rect x="544.25" y="1182.09" width="6.06" height="5.96" fill="#b9d4ff"/><rect x="549.71" y="1182.09" width="6.06" height="5.96" fill="#bcd4ff"/><rect x="555.17" y="1182.09" width="6.06" height="5.96" fill="#bfd5ff"/><rect x="560.62" y="1182.09" width="6.06" height="5.96" fill="#c1d5ff"/><rect x="566.08" y="1182.09" width="6.06" height="5.96" fill="#c4d6ff"/><rect x="571.54" y="1182.09" width="6.06" height="5.96" fill="#c7d6ff"/><rect x="577.00" y="1182.09" width="6.06" height="5.96" fill="#c9d7ff"/><rect x="582.46" y="1182.09" width="6.06" height="5.96" fill="#ccd8ff"/><rect x="587.92" y="1182.09" width="6.06" height="5.96" fill="#cfd8ff"/><rect x="593.38" y="1182.09" width="6.06" height="5.96" fill="#d2d8ff"/><rect x="598.83" y="1182.09" width="6.06" height="5.96" fill="#d5d8ff"/><rect x="604.29" y="1182.09" width="6.06" height="5.96" fill="#d8d8ff"/><rect x="609.75" y="1182.09" width="6.06" height="5.96" fill="#dbd8ff"/><rect x="615.21" y="1182.09" width="6.06" height="5.96" fill="#ded8ff"/><rect x="620.67" y="1182.09" width="6.06" height="5.96" fill="#e1d8ff"/><rect x="626.12" y="1182.09" width="6.06" height="5.96" fill="#e4d8ff"/><rect x="631.58" y="1182.09" width="6.06" height="5.96" fill="#e8d8ff"/><rect x="637.04" y="1182.09" width="6.06" height="5.96" fill="#ebd8ff"/><rect x="642.50" y="1182.09" width="6.06" height="5.96" fill="#eed8ff"/><rect x="647.96" y="1182.09" width="6.06" height="5.96" fill="#f1d8ff"/><rect x="653.42" y="1182.09" width="6.06" height="5.96" fill="#f4d8ff"/><rect x="658.88" y="1182.09" width="6.06" height="5.96" fill="#f7d8ff"/><rect x="664.33" y="1182.09" width="6.06" height="5.96" fill="#fad8ff"/><rect x="669.79" y="1182.09" width="6.06" height="5.96" fill="#fdd8ff"/><rect x="675.25" y="1182.09" width="6.06" height="5.96" fill="#ffd7fe"/><rect x="680.71" y="1182.09" width="6.06" height="5.96" fill="#ffd5fb"/><rect x="686.17" y="1182.09" width="6.06" height="5.96" fill="#ffd3f8"/><rect x="691.62" y="1182.09" width="6.06" height="5.96" fill="#ffd1f6"/><rect x="697.08" y="1182.09" width="6.06" height="5.96" fill="#ffcff3"/><rect x="702.54" y="1182.09" width="6.06" height="5.96" fill="#ffcdf1"/><rect x="708.00" y="1182.09" width="6.06" height="5.96" fill="#ffcaee"/><rect x="713.46" y="1182.09" width="6.06" height="5.96" fill="#ffc8ec"/><rect x="718.92" y="1182.09" width="6.06" height="5.96" fill="#ffc6e9"/><rect x="724.38" y="1182.09" width="6.06" height="5.96" fill="#ffc4e6"/><rect x="729.83" y="1182.09" width="6.06" height="5.96" fill="#ffc2e4"/><rect x="735.29" y="1182.09" width="6.06" height="5.96" fill="#ffc0e1"/><rect x="740.75" y="1182.09" width="6.06" height="5.96" fill="#ffbede"/><rect x="746.21" y="1182.09" width="6.06" height="5.96" fill="#ffbcdc"/><rect x="751.67" y="1182.09" width="6.06" height="5.96" fill="#ffb9d9"/><rect x="757.12" y="1182.09" width="6.06" height="5.96" fill="#ffb7d7"/><rect x="762.58" y="1182.09" width="6.06" height="5.96" fill="#ffb5d5"/><rect x="768.04" y="1182.09" width="6.06" height="5.96" fill="#ffb3d3"/><rect x="773.50" y="1182.09" width="6.06" height="5.96" fill="#ffb1d1"/><rect x="778.96" y="1182.09" width="6.06" height="5.96" fill="#ffb0ce"/><rect x="784.42" y="1182.09" width="6.06" height="5.96" fill="#ffaecc"/><rect x="789.88" y="1182.09" width="6.06" height="5.96" fill="#ffacca"/><rect x="795.33" y="1182.09" width="6.06" height="5.96" fill="#ffaac8"/><rect x="800.79" y="1182.09" width="6.06" height="5.96" fill="#ffa8c6"/><rect x="806.25" y="1182.09" width="6.06" height="5.96" fill="#ffa6c4"/><rect x="811.71" y="1182.09" width="6.06" height="5.96" fill="#ffa4c2"/><rect x="817.17" y="1182.09" width="6.06" height="5.96" fill="#ffa2bf"/><rect x="822.62" y="1182.09" width="6.06" height="5.96" fill="#ffa0bd"/><rect x="828.08" y="1182.09" width="6.06" height="5.96" fill="#ff9ebb"/><rect x="833.54" y="1182.09" width="6.06" height="5.96" fill="#ff9cb9"/><rect x="511.50" y="1187.45" width="6.06" height="5.96" fill="#a9ceff"/><rect x="516.96" y="1187.45" width="6.06" height="5.96" fill="#accfff"/><rect x="522.42" y="1187.45" width="6.06" height="5.96" fill="#afd0ff"/><rect x="527.88" y="1187.45" width="6.06" height="5.96" fill="#b1d0ff"/><rect x="533.33" y="1187.45" width="6.06" height="5.96" fill="#b4d1ff"/><rect x="538.79" y="1187.45" width="6.06" height="5.96" fill="#b7d1ff"/><rect x="544.25" y="1187.45" width="6.06" height="5.96" fill="#b9d2ff"/><rect x="549.71" y="1187.45" width="6.06" height="5.96" fill="#bcd2ff"/><rect x="555.17" y="1187.45" width="6.06" height="5.96" fill="#bfd3ff"/><rect x="560.62" y="1187.45" width="6.06" height="5.96" fill="#c1d3ff"/><rect x="566.08" y="1187.45" width="6.06" height="5.96" fill="#c4d4ff"/><rect x="571.54" y="1187.45" width="6.06" height="5.96" fill="#c7d4ff"/><rect x="577.00" y="1187.45" width="6.06" height="5.96" fill="#c9d5ff"/><rect x="582.46" y="1187.45" width="6.06" height="5.96" fill="#ccd5ff"/><rect x="587.92" y="1187.45" width="6.06" height="5.96" fill="#cfd6ff"/><rect x="593.38" y="1187.45" width="6.06" height="5.96" fill="#d2d6ff"/><rect x="598.83" y="1187.45" width="6.06" height="5.96" fill="#d5d6ff"/><rect x="604.29" y="1187.45" width="6.06" height="5.96" fill="#d8d6ff"/><rect x="609.75" y="1187.45" width="6.06" height="5.96" fill="#dbd6ff"/><rect x="615.21" y="1187.45" width="6.06" height="5.96" fill="#ded6ff"/><rect x="620.67" y="1187.45" width="6.06" height="5.96" fill="#e1d6ff"/><rect x="626.12" y="1187.45" width="6.06" height="5.96" fill="#e4d6ff"/><rect x="631.58" y="1187.45" width="6.06" height="5.96" fill="#e8d6ff"/><rect x="637.04" y="1187.45" width="6.06" height="5.96" fill="#ebd6ff"/><rect x="642.50" y="1187.45" width="6.06" height="5.96" fill="#eed6ff"/><rect x="647.96" y="1187.45" width="6.06" height="5.96" fill="#f1d6ff"/><rect x="653.42" y="1187.45" width="6.06" height="5.96" fill="#f4d6ff"/><rect x="658.88" y="1187.45" width="6.06" height="5.96" fill="#f7d6ff"/><rect x="664.33" y="1187.45" width="6.06" height="5.96" fill="#fad6ff"/><rect x="669.79" y="1187.45" width="6.06" height="5.96" fill="#fdd6ff"/><rect x="675.25" y="1187.45" width="6.06" height="5.96" fill="#ffd5fe"/><rect x="680.71" y="1187.45" width="6.06" height="5.96" fill="#ffd3fb"/><rect x="686.17" y="1187.45" width="6.06" height="5.96" fill="#ffd1f8"/><rect x="691.62" y="1187.45" width="6.06" height="5.96" fill="#ffcff6"/><rect x="697.08" y="1187.45" width="6.06" height="5.96" fill="#ffcdf3"/><rect x="702.54" y="1187.45" width="6.06" height="5.96" fill="#ffcaf1"/><rect x="708.00" y="1187.45" width="6.06" height="5.96" fill="#ffc8ee"/><rect x="713.46" y="1187.45" width="6.06" height="5.96" fill="#ffc6ec"/><rect x="718.92" y="1187.45" width="6.06" height="5.96" fill="#ffc4e9"/><rect x="724.38" y="1187.45" width="6.06" height="5.96" fill="#ffc2e6"/><rect x="729.83" y="1187.45" width="6.06" height="5.96" fill="#ffc0e4"/><rect x="735.29" y="1187.45" width="6.06" height="5.96" fill="#ffbee1"/><rect x="740.75" y="1187.45" width="6.06" height="5.96" fill="#ffbcde"/><rect x="746.21" y="1187.45" width="6.06" height="5.96" fill="#ffb9dc"/><rect x="751.67" y="1187.45" width="6.06" height="5.96" fill="#ffb7d9"/><rect x="757.12" y="1187.45" width="6.06" height="5.96" fill="#ffb5d7"/><rect x="762.58" y="1187.45" width="6.06" height="5.96" fill="#ffb3d5"/><rect x="768.04" y="1187.45" width="6.06" height="5.96" fill="#ffb1d3"/><rect x="773.50" y="1187.45" width="6.06" height="5.96" fill="#ffafd1"/><rect x="778.96" y="1187.45" width="6.06" height="5.96" fill="#ffaece"/><rect x="784.42" y="1187.45" width="6.06" height="5.96" fill="#ffaccc"/><rect x="789.88" y="1187.45" width="6.06" height="5.96" fill="#ffaaca"/><rect x="795.33" y="1187.45" width="6.06" height="5.96" fill="#ffa8c8"/><rect x="800.79" y="1187.45" width="6.06" height="5.96" fill="#ffa6c6"/><rect x="806.25" y="1187.45" width="6.06" height="5.96" fill="#ffa4c4"/><rect x="811.71" y="1187.45" width="6.06" height="5.96" fill="#ffa2c2"/><rect x="817.17" y="1187.45" width="6.06" height="5.96" fill="#ffa0bf"/><rect x="822.62" y="1187.45" width="6.06" height="5.96" fill="#ff9ebd"/><rect x="828.08" y="1187.45" width="6.06" height="5.96" fill="#ff9cbb"/><rect x="833.54" y="1187.45" width="6.06" height="5.96" fill="#ff9ab9"/><rect x="511.50" y="1192.82" width="6.06" height="5.96" fill="#a9ccff"/><rect x="516.96" y="1192.82" width="6.06" height="5.96" fill="#accdff"/><rect x="522.42" y="1192.82" width="6.06" height="5.96" fill="#afcdff"/><rect x="527.88" y="1192.82" width="6.06" height="5.96" fill="#b1ceff"/><rect x="533.33" y="1192.82" width="6.06" height="5.96" fill="#b4ceff"/><rect x="538.79" y="1192.82" width="6.06" height="5.96" fill="#b7cfff"/><rect x="544.25" y="1192.82" width="6.06" height="5.96" fill="#b9cfff"/><rect x="549.71" y="1192.82" width="6.06" height="5.96" fill="#bcd0ff"/><rect x="555.17" y="1192.82" width="6.06" height="5.96" fill="#bfd1ff"/><rect x="560.62" y="1192.82" width="6.06" height="5.96" fill="#c1d1ff"/><rect x="566.08" y="1192.82" width="6.06" height="5.96" fill="#c4d2ff"/><rect x="571.54" y="1192.82" width="6.06" height="5.96" fill="#c7d2ff"/><rect x="577.00" y="1192.82" width="6.06" height="5.96" fill="#c9d3ff"/><rect x="582.46" y="1192.82" width="6.06" height="5.96" fill="#ccd3ff"/><rect x="587.92" y="1192.82" width="6.06" height="5.96" fill="#cfd4ff"/><rect x="593.38" y="1192.82" width="6.06" height="5.96" fill="#d2d4ff"/><rect x="598.83" y="1192.82" width="6.06" height="5.96" fill="#d5d4ff"/><rect x="604.29" y="1192.82" width="6.06" height="5.96" fill="#d8d4ff"/><rect x="609.75" y="1192.82" width="6.06" height="5.96" fill="#dbd4ff"/><rect x="615.21" y="1192.82" width="6.06" height="5.96" fill="#ded4ff"/><rect x="620.67" y="1192.82" width="6.06" height="5.96" fill="#e1d4ff"/><rect x="626.12" y="1192.82" width="6.06" height="5.96" fill="#e4d4ff"/><rect x="631.58" y="1192.82" width="6.06" height="5.96" fill="#e8d4ff"/><rect x="637.04" y="1192.82" width="6.06" height="5.96" fill="#ebd4ff"/><rect x="642.50" y="1192.82" width="6.06" height="5.96" fill="#eed4ff"/><rect x="647.96" y="1192.82" width="6.06" height="5.96" fill="#f1d4ff"/><rect x="653.42" y="1192.82" width="6.06" height="5.96" fill="#f4d4ff"/><rect x="658.88" y="1192.82" width="6.06" height="5.96" fill="#f7d4ff"/><rect x="664.33" y="1192.82" width="6.06" height="5.96" fill="#fad4ff"/><rect x="669.79" y="1192.82" width="6.06" height="5.96" fill="#fdd4ff"/><rect x="675.25" y="1192.82" width="6.06" height="5.96" fill="#ffd3fe"/><rect x="680.71" y="1192.82" width="6.06" height="5.96" fill="#ffd1fb"/><rect x="686.17" y="1192.82" width="6.06" height="5.96" fill="#ffcff8"/><rect x="691.62" y="1192.82" width="6.06" height="5.96" fill="#ffcdf6"/><rect x="697.08" y="1192.82" width="6.06" height="5.96" fill="#ffcaf3"/><rect x="702.54" y="1192.82" width="6.06" height="5.96" fill="#ffc8f1"/><rect x="708.00" y="1192.82" width="6.06" height="5.96" fill="#ffc6ee"/><rect x="713.46" y="1192.82" width="6.06" height="5.96" fill="#ffc4ec"/><rect x="718.92" y="1192.82" width="6.06" height="5.96" fill="#ffc2e9"/><rect x="724.38" y="1192.82" width="6.06" height="5.96" fill="#ffc0e6"/><rect x="729.83" y="1192.82" width="6.06" height="5.96" fill="#ffbee4"/><rect x="735.29" y="1192.82" width="6.06" height="5.96" fill="#ffbbe1"/><rect x="740.75" y="1192.82" width="6.06" height="5.96" fill="#ffb9de"/><rect x="746.21" y="1192.82" width="6.06" height="5.96" fill="#ffb7dc"/><rect x="751.67" y="1192.82" width="6.06" height="5.96" fill="#ffb5d9"/><rect x="757.12" y="1192.82" width="6.06" height="5.96" fill="#ffb3d7"/><rect x="762.58" y="1192.82" width="6.06" height="5.96" fill="#ffb1d5"/><rect x="768.04" y="1192.82" width="6.06" height="5.96" fill="#ffafd3"/><rect x="773.50" y="1192.82" width="6.06" height="5.96" fill="#ffadd1"/><rect x="778.96" y="1192.82" width="6.06" height="5.96" fill="#ffacce"/><rect x="784.42" y="1192.82" width="6.06" height="5.96" fill="#ffaacc"/><rect x="789.88" y="1192.82" width="6.06" height="5.96" fill="#ffa8ca"/><rect x="795.33" y="1192.82" width="6.06" height="5.96" fill="#ffa6c8"/><rect x="800.79" y="1192.82" width="6.06" height="5.96" fill="#ffa4c6"/><rect x="806.25" y="1192.82" width="6.06" height="5.96" fill="#ffa2c4"/><rect x="811.71" y="1192.82" width="6.06" height="5.96" fill="#ffa0c2"/><rect x="817.17" y="1192.82" width="6.06" height="5.96" fill="#ff9fbf"/><rect x="822.62" y="1192.82" width="6.06" height="5.96" fill="#ff9dbd"/><rect x="828.08" y="1192.82" width="6.06" height="5.96" fill="#ff9bbb"/><rect x="833.54" y="1192.82" width="6.06" height="5.96" fill="#ff99b9"/><rect x="511.50" y="1198.18" width="6.06" height="5.96" fill="#a9caff"/><rect x="516.96" y="1198.18" width="6.06" height="5.96" fill="#accbff"/><rect x="522.42" y="1198.18" width="6.06" height="5.96" fill="#afcbff"/><rect x="527.88" y="1198.18" width="6.06" height="5.96" fill="#b1ccff"/><rect x="533.33" y="1198.18" width="6.06" height="5.96" fill="#b4ccff"/><rect x="538.79" y="1198.18" width="6.06" height="5.96" fill="#b7cdff"/><rect x="544.25" y="1198.18" width="6.06" height="5.96" fill="#b9cdff"/><rect x="549.71" y="1198.18" width="6.06" height="5.96" fill="#bcceff"/><rect x="555.17" y="1198.18" width="6.06" height="5.96" fill="#bfceff"/><rect x="560.62" y="1198.18" width="6.06" height="5.96" fill="#c1cfff"/><rect x="566.08" y="1198.18" width="6.06" height="5.96" fill="#c4cfff"/><rect x="571.54" y="1198.18" width="6.06" height="5.96" fill="#c7d0ff"/><rect x="577.00" y="1198.18" width="6.06" height="5.96" fill="#c9d0ff"/><rect x="582.46" y="1198.18" width="6.06" height="5.96" fill="#ccd1ff"/><rect x="587.92" y="1198.18" width="6.06" height="5.96" fill="#cfd2ff"/><rect x="593.38" y="1198.18" width="6.06" height="5.96" fill="#d2d2ff"/><rect x="598.83" y="1198.18" width="6.06" height="5.96" fill="#d5d2ff"/><rect x="604.29" y="1198.18" width="6.06" height="5.96" fill="#d8d2ff"/><rect x="609.75" y="1198.18" width="6.06" height="5.96" fill="#dbd2ff"/><rect x="615.21" y="1198.18" width="6.06" height="5.96" fill="#ded2ff"/><rect x="620.67" y="1198.18" width="6.06" height="5.96" fill="#e1d2ff"/><rect x="626.12" y="1198.18" width="6.06" height="5.96" fill="#e4d2ff"/><rect x="631.58" y="1198.18" width="6.06" height="5.96" fill="#e8d2ff"/><rect x="637.04" y="1198.18" width="6.06" height="5.96" fill="#ebd2ff"/><rect x="642.50" y="1198.18" width="6.06" height="5.96" fill="#eed2ff"/><rect x="647.96" y="1198.18" width="6.06" height="5.96" fill="#f1d2ff"/><rect x="653.42" y="1198.18" width="6.06" height="5.96" fill="#f4d2ff"/><rect x="658.88" y="1198.18" width="6.06" height="5.96" fill="#f7d2ff"/><rect x="664.33" y="1198.18" width="6.06" height="5.96" fill="#fad2ff"/><rect x="669.79" y="1198.18" width="6.06" height="5.96" fill="#fdd2ff"/><rect x="675.25" y="1198.18" width="6.06" height="5.96" fill="#ffd1fe"/><rect x="680.71" y="1198.18" width="6.06" height="5.96" fill="#ffcffb"/><rect x="686.17" y="1198.18" width="6.06" height="5.96" fill="#ffccf8"/><rect x="691.62" y="1198.18" width="6.06" height="5.96" fill="#ffcaf6"/><rect x="697.08" y="1198.18" width="6.06" height="5.96" fill="#ffc8f3"/><rect x="702.54" y="1198.18" width="6.06" height="5.96" fill="#ffc6f1"/><rect x="708.00" y="1198.18" width="6.06" height="5.96" fill="#ffc4ee"/><rect x="713.46" y="1198.18" width="6.06" height="5.96" fill="#ffc2ec"/><rect x="718.92" y="1198.18" width="6.06" height="5.96" fill="#ffc0e9"/><rect x="724.38" y="1198.18" width="6.06" height="5.96" fill="#ffbee6"/><rect x="729.83" y="1198.18" width="6.06" height="5.96" fill="#ffbbe4"/><rect x="735.29" y="1198.18" width="6.06" height="5.96" fill="#ffb9e1"/><rect x="740.75" y="1198.18" width="6.06" height="5.96" fill="#ffb7de"/><rect x="746.21" y="1198.18" width="6.06" height="5.96" fill="#ffb5dc"/><rect x="751.67" y="1198.18" width="6.06" height="5.96" fill="#ffb3d9"/><rect x="757.12" y="1198.18" width="6.06" height="5.96" fill="#ffb1d7"/><rect x="762.58" y="1198.18" width="6.06" height="5.96" fill="#ffafd5"/><rect x="768.04" y="1198.18" width="6.06" height="5.96" fill="#ffadd3"/><rect x="773.50" y="1198.18" width="6.06" height="5.96" fill="#ffabd1"/><rect x="778.96" y="1198.18" width="6.06" height="5.96" fill="#ffaace"/><rect x="784.42" y="1198.18" width="6.06" height="5.96" fill="#ffa8cc"/><rect x="789.88" y="1198.18" width="6.06" height="5.96" fill="#ffa6ca"/><rect x="795.33" y="1198.18" width="6.06" height="5.96" fill="#ffa4c8"/><rect x="800.79" y="1198.18" width="6.06" height="5.96" fill="#ffa2c6"/><rect x="806.25" y="1198.18" width="6.06" height="5.96" fill="#ffa1c4"/><rect x="811.71" y="1198.18" width="6.06" height="5.96" fill="#ff9fc2"/><rect x="817.17" y="1198.18" width="6.06" height="5.96" fill="#ff9dbf"/><rect x="822.62" y="1198.18" width="6.06" height="5.96" fill="#ff9bbd"/><rect x="828.08" y="1198.18" width="6.06" height="5.96" fill="#ff99bb"/><rect x="833.54" y="1198.18" width="6.06" height="5.96" fill="#ff97b9"/><rect x="511.50" y="1203.55" width="6.06" height="5.96" fill="#a9c8ff"/><rect x="516.96" y="1203.55" width="6.06" height="5.96" fill="#acc8ff"/><rect x="522.42" y="1203.55" width="6.06" height="5.96" fill="#afc9ff"/><rect x="527.88" y="1203.55" width="6.06" height="5.96" fill="#b1caff"/><rect x="533.33" y="1203.55" width="6.06" height="5.96" fill="#b4caff"/><rect x="538.79" y="1203.55" width="6.06" height="5.96" fill="#b7cbff"/><rect x="544.25" y="1203.55" width="6.06" height="5.96" fill="#b9cbff"/><rect x="549.71" y="1203.55" width="6.06" height="5.96" fill="#bcccff"/><rect x="555.17" y="1203.55" width="6.06" height="5.96" fill="#bfccff"/><rect x="560.62" y="1203.55" width="6.06" height="5.96" fill="#c1cdff"/><rect x="566.08" y="1203.55" width="6.06" height="5.96" fill="#c4cdff"/><rect x="571.54" y="1203.55" width="6.06" height="5.96" fill="#c7ceff"/><rect x="577.00" y="1203.55" width="6.06" height="5.96" fill="#c9ceff"/><rect x="582.46" y="1203.55" width="6.06" height="5.96" fill="#cccfff"/><rect x="587.92" y="1203.55" width="6.06" height="5.96" fill="#cfcfff"/><rect x="593.38" y="1203.55" width="6.06" height="5.96" fill="#d2d0ff"/><rect x="598.83" y="1203.55" width="6.06" height="5.96" fill="#d5d0ff"/><rect x="604.29" y="1203.55" width="6.06" height="5.96" fill="#d8d0ff"/><rect x="609.75" y="1203.55" width="6.06" height="5.96" fill="#dbd0ff"/><rect x="615.21" y="1203.55" width="6.06" height="5.96" fill="#ded0ff"/><rect x="620.67" y="1203.55" width="6.06" height="5.96" fill="#e1d0ff"/><rect x="626.12" y="1203.55" width="6.06" height="5.96" fill="#e4d0ff"/><rect x="631.58" y="1203.55" width="6.06" height="5.96" fill="#e8d0ff"/><rect x="637.04" y="1203.55" width="6.06" height="5.96" fill="#ebd0ff"/><rect x="642.50" y="1203.55" width="6.06" height="5.96" fill="#eed0ff"/><rect x="647.96" y="1203.55" width="6.06" height="5.96" fill="#f1d0ff"/><rect x="653.42" y="1203.55" width="6.06" height="5.96" fill="#f4d0ff"/><rect x="658.88" y="1203.55" width="6.06" height="5.96" fill="#f7d0ff"/><rect x="664.33" y="1203.55" width="6.06" height="5.96" fill="#fad0ff"/><rect x="669.79" y="1203.55" width="6.06" height="5.96" fill="#fdd0ff"/><rect x="675.25" y="1203.55" width="6.06" height="5.96" fill="#ffcffe"/><rect x="680.71" y="1203.55" width="6.06" height="5.96" fill="#ffccfb"/><rect x="686.17" y="1203.55" width="6.06" height="5.96" fill="#ffcaf8"/><rect x="691.62" y="1203.55" width="6.06" height="5.96" fill="#ffc8f6"/><rect x="697.08" y="1203.55" width="6.06" height="5.96" fill="#ffc6f3"/><rect x="702.54" y="1203.55" width="6.06" height="5.96" fill="#ffc4f1"/><rect x="708.00" y="1203.55" width="6.06" height="5.96" fill="#ffc2ee"/><rect x="713.46" y="1203.55" width="6.06" height="5.96" fill="#ffc0ec"/><rect x="718.92" y="1203.55" width="6.06" height="5.96" fill="#ffbee9"/><rect x="724.38" y="1203.55" width="6.06" height="5.96" fill="#ffbbe6"/><rect x="729.83" y="1203.55" width="6.06" height="5.96" fill="#ffb9e4"/><rect x="735.29" y="1203.55" width="6.06" height="5.96" fill="#ffb7e1"/><rect x="740.75" y="1203.55" width="6.06" height="5.96" fill="#ffb5de"/><rect x="746.21" y="1203.55" width="6.06" height="5.96" fill="#ffb3dc"/><rect x="751.67" y="1203.55" width="6.06" height="5.96" fill="#ffb1d9"/><rect x="757.12" y="1203.55" width="6.06" height="5.96" fill="#ffafd7"/><rect x="762.58" y="1203.55" width="6.06" height="5.96" fill="#ffadd5"/><rect x="768.04" y="1203.55" width="6.06" height="5.96" fill="#ffabd3"/><rect x="773.50" y="1203.55" width="6.06" height="5.96" fill="#ffa9d1"/><rect x="778.96" y="1203.55" width="6.06" height="5.96" fill="#ffa8ce"/><rect x="784.42" y="1203.55" width="6.06" height="5.96" fill="#ffa6cc"/><rect x="789.88" y="1203.55" width="6.06" height="5.96" fill="#ffa4ca"/><rect x="795.33" y="1203.55" width="6.06" height="5.96" fill="#ffa2c8"/><rect x="800.79" y="1203.55" width="6.06" height="5.96" fill="#ffa1c6"/><rect x="806.25" y="1203.55" width="6.06" height="5.96" fill="#ff9fc4"/><rect x="811.71" y="1203.55" width="6.06" height="5.96" fill="#ff9dc2"/><rect x="817.17" y="1203.55" width="6.06" height="5.96" fill="#ff9bbf"/><rect x="822.62" y="1203.55" width="6.06" height="5.96" fill="#ff9abd"/><rect x="828.08" y="1203.55" width="6.06" height="5.96" fill="#ff98bb"/><rect x="833.54" y="1203.55" width="6.06" height="5.96" fill="#ff96b9"/><rect x="511.50" y="1208.91" width="6.06" height="5.96" fill="#a9c6ff"/><rect x="516.96" y="1208.91" width="6.06" height="5.96" fill="#acc6ff"/><rect x="522.42" y="1208.91" width="6.06" height="5.96" fill="#afc7ff"/><rect x="527.88" y="1208.91" width="6.06" height="5.96" fill="#b1c7ff"/><rect x="533.33" y="1208.91" width="6.06" height="5.96" fill="#b4c8ff"/><rect x="538.79" y="1208.91" width="6.06" height="5.96" fill="#b7c8ff"/><rect x="544.25" y="1208.91" width="6.06" height="5.96" fill="#b9c9ff"/><rect x="549.71" y="1208.91" width="6.06" height="5.96" fill="#bcc9ff"/><rect x="555.17" y="1208.91" width="6.06" height="5.96" fill="#bfcaff"/><rect x="560.62" y="1208.91" width="6.06" height="5.96" fill="#c1cbff"/><rect x="566.08" y="1208.91" width="6.06" height="5.96" fill="#c4cbff"/><rect x="571.54" y="1208.91" width="6.06" height="5.96" fill="#c7ccff"/><rect x="577.00" y="1208.91" width="6.06" height="5.96" fill="#c9ccff"/><rect x="582.46" y="1208.91" width="6.06" height="5.96" fill="#cccdff"/><rect x="587.92" y="1208.91" width="6.06" height="5.96" fill="#cfcdff"/><rect x="593.38" y="1208.91" width="6.06" height="5.96" fill="#d2cdff"/><rect x="598.83" y="1208.91" width="6.06" height="5.96" fill="#d5cdff"/><rect x="604.29" y="1208.91" width="6.06" height="5.96" fill="#d8cdff"/><rect x="609.75" y="1208.91" width="6.06" height="5.96" fill="#dbcdff"/><rect x="615.21" y="1208.91" width="6.06" height="5.96" fill="#decdff"/><rect x="620.67" y="1208.91" width="6.06" height="5.96" fill="#e1cdff"/><rect x="626.12" y="1208.91" width="6.06" height="5.96" fill="#e4cdff"/><rect x="631.58" y="1208.91" width="6.06" height="5.96" fill="#e8cdff"/><rect x="637.04" y="1208.91" width="6.06" height="5.96" fill="#ebcdff"/><rect x="642.50" y="1208.91" width="6.06" height="5.96" fill="#eecdff"/><rect x="647.96" y="1208.91" width="6.06" height="5.96" fill="#f1cdff"/><rect x="653.42" y="1208.91" width="6.06" height="5.96" fill="#f4cdff"/><rect x="658.88" y="1208.91" width="6.06" height="5.96" fill="#f7cdff"/><rect x="664.33" y="1208.91" width="6.06" height="5.96" fill="#facdff"/><rect x="669.79" y="1208.91" width="6.06" height="5.96" fill="#fdcdff"/><rect x="675.25" y="1208.91" width="6.06" height="5.96" fill="#ffccfe"/><rect x="680.71" y="1208.91" width="6.06" height="5.96" fill="#ffcafb"/><rect x="686.17" y="1208.91" width="6.06" height="5.96" fill="#ffc8f8"/><rect x="691.62" y="1208.91" width="6.06" height="5.96" fill="#ffc6f6"/><rect x="697.08" y="1208.91" width="6.06" height="5.96" fill="#ffc4f3"/><rect x="702.54" y="1208.91" width="6.06" height="5.96" fill="#ffc2f1"/><rect x="708.00" y="1208.91" width="6.06" height="5.96" fill="#ffc0ee"/><rect x="713.46" y="1208.91" width="6.06" height="5.96" fill="#ffbdec"/><rect x="718.92" y="1208.91" width="6.06" height="5.96" fill="#ffbbe9"/><rect x="724.38" y="1208.91" width="6.06" height="5.96" fill="#ffb9e6"/><rect x="729.83" y="1208.91" width="6.06" height="5.96" fill="#ffb7e4"/><rect x="735.29" y="1208.91" width="6.06" height="5.96" fill="#ffb5e1"/><rect x="740.75" y="1208.91" width="6.06" height="5.96" fill="#ffb3de"/><rect x="746.21" y="1208.91" width="6.06" height="5.96" fill="#ffb1dc"/><rect x="751.67" y="1208.91" width="6.06" height="5.96" fill="#ffafd9"/><rect x="757.12" y="1208.91" width="6.06" height="5.96" fill="#ffadd7"/><rect x="762.58" y="1208.91" width="6.06" height="5.96" fill="#ffabd5"/><rect x="768.04" y="1208.91" width="6.06" height="5.96" fill="#ffa9d3"/><rect x="773.50" y="1208.91" width="6.06" height="5.96" fill="#ffa7d1"/><rect x="778.96" y="1208.91" width="6.06" height="5.96" fill="#ffa6ce"/><rect x="784.42" y="1208.91" width="6.06" height="5.96" fill="#ffa4cc"/><rect x="789.88" y="1208.91" width="6.06" height="5.96" fill="#ffa2ca"/><rect x="795.33" y="1208.91" width="6.06" height="5.96" fill="#ffa1c8"/><rect x="800.79" y="1208.91" width="6.06" height="5.96" fill="#ff9fc6"/><rect x="806.25" y="1208.91" width="6.06" height="5.96" fill="#ff9dc4"/><rect x="811.71" y="1208.91" width="6.06" height="5.96" fill="#ff9bc2"/><rect x="817.17" y="1208.91" width="6.06" height="5.96" fill="#ff9abf"/><rect x="822.62" y="1208.91" width="6.06" height="5.96" fill="#ff98bd"/><rect x="828.08" y="1208.91" width="6.06" height="5.96" fill="#ff96bb"/><rect x="833.54" y="1208.91" width="6.06" height="5.96" fill="#ff94b9"/><rect x="511.50" y="1214.27" width="6.06" height="5.96" fill="#a9c4ff"/><rect x="516.96" y="1214.27" width="6.06" height="5.96" fill="#acc4ff"/><rect x="522.42" y="1214.27" width="6.06" height="5.96" fill="#afc5ff"/><rect x="527.88" y="1214.27" width="6.06" height="5.96" fill="#b1c5ff"/><rect x="533.33" y="1214.27" width="6.06" height="5.96" fill="#b4c6ff"/><rect x="538.79" y="1214.27" width="6.06" height="5.96" fill="#b7c6ff"/><rect x="544.25" y="1214.27" width="6.06" height="5.96" fill="#b9c7ff"/><rect x="549.71" y="1214.27" width="6.06" height="5.96" fill="#bcc7ff"/><rect x="555.17" y="1214.27" width="6.06" height="5.96" fill="#bfc8ff"/><rect x="560.62" y="1214.27" width="6.06" height="5.96" fill="#c1c8ff"/><rect x="566.08" y="1214.27" width="6.06" height="5.96" fill="#c4c9ff"/><rect x="571.54" y="1214.27" width="6.06" height="5.96" fill="#c7c9ff"/><rect x="577.00" y="1214.27" width="6.06" height="5.96" fill="#c9caff"/><rect x="582.46" y="1214.27" width="6.06" height="5.96" fill="#cccaff"/><rect x="587.92" y="1214.27" width="6.06" height="5.96" fill="#cfcbff"/><rect x="593.38" y="1214.27" width="6.06" height="5.96" fill="#d2cbff"/><rect x="598.83" y="1214.27" width="6.06" height="5.96" fill="#d5cbff"/><rect x="604.29" y="1214.27" width="6.06" height="5.96" fill="#d8cbff"/><rect x="609.75" y="1214.27" width="6.06" height="5.96" fill="#dbcbff"/><rect x="615.21" y="1214.27" width="6.06" height="5.96" fill="#decbff"/><rect x="620.67" y="1214.27" width="6.06" height="5.96" fill="#e1cbff"/><rect x="626.12" y="1214.27" width="6.06" height="5.96" fill="#e4cbff"/><rect x="631.58" y="1214.27" width="6.06" height="5.96" fill="#e8cbff"/><rect x="637.04" y="1214.27" width="6.06" height="5.96" fill="#ebcbff"/><rect x="642.50" y="1214.27" width="6.06" height="5.96" fill="#eecbff"/><rect x="647.96" y="1214.27" width="6.06" height="5.96" fill="#f1cbff"/><rect x="653.42" y="1214.27" width="6.06" height="5.96" fill="#f4cbff"/><rect x="658.88" y="1214.27" width="6.06" height="5.96" fill="#f7cbff"/><rect x="664.33" y="1214.27" width="6.06" height="5.96" fill="#facbff"/><rect x="669.79" y="1214.27" width="6.06" height="5.96" fill="#fdcbff"/><rect x="675.25" y="1214.27" width="6.06" height="5.96" fill="#ffcafe"/><rect x="680.71" y="1214.27" width="6.06" height="5.96" fill="#ffc8fb"/><rect x="686.17" y="1214.27" width="6.06" height="5.96" fill="#ffc6f8"/><rect x="691.62" y="1214.27" width="6.06" height="5.96" fill="#ffc4f6"/><rect x="697.08" y="1214.27" width="6.06" height="5.96" fill="#ffc2f3"/><rect x="702.54" y="1214.27" width="6.06" height="5.96" fill="#ffc0f1"/><rect x="708.00" y="1214.27" width="6.06" height="5.96" fill="#ffbdee"/><rect x="713.46" y="1214.27" width="6.06" height="5.96" fill="#ffbbec"/><rect x="718.92" y="1214.27" width="6.06" height="5.96" fill="#ffb9e9"/><rect x="724.38" y="1214.27" width="6.06" height="5.96" fill="#ffb7e6"/><rect x="729.83" y="1214.27" width="6.06" height="5.96" fill="#ffb5e4"/><rect x="735.29" y="1214.27" width="6.06" height="5.96" fill="#ffb3e1"/><rect x="740.75" y="1214.27" width="6.06" height="5.96" fill="#ffb1de"/><rect x="746.21" y="1214.27" width="6.06" height="5.96" fill="#ffaedc"/><rect x="751.67" y="1214.27" width="6.06" height="5.96" fill="#ffacd9"/><rect x="757.12" y="1214.27" width="6.06" height="5.96" fill="#ffaad7"/><rect x="762.58" y="1214.27" width="6.06" height="5.96" fill="#ffa9d5"/><rect x="768.04" y="1214.27" width="6.06" height="5.96" fill="#ffa7d3"/><rect x="773.50" y="1214.27" width="6.06" height="5.96" fill="#ffa5d1"/><rect x="778.96" y="1214.27" width="6.06" height="5.96" fill="#ffa4ce"/><rect x="784.42" y="1214.27" width="6.06" height="5.96" fill="#ffa2cc"/><rect x="789.88" y="1214.27" width="6.06" height="5.96" fill="#ffa0ca"/><rect x="795.33" y="1214.27" width="6.06" height="5.96" fill="#ff9fc8"/><rect x="800.79" y="1214.27" width="6.06" height="5.96" fill="#ff9dc6"/><rect x="806.25" y="1214.27" width="6.06" height="5.96" fill="#ff9bc4"/><rect x="811.71" y="1214.27" width="6.06" height="5.96" fill="#ff9ac2"/><rect x="817.17" y="1214.27" width="6.06" height="5.96" fill="#ff98bf"/><rect x="822.62" y="1214.27" width="6.06" height="5.96" fill="#ff96bd"/><rect x="828.08" y="1214.27" width="6.06" height="5.96" fill="#ff95bb"/><rect x="833.54" y="1214.27" width="6.06" height="5.96" fill="#ff93b9"/><rect x="511.50" y="1219.64" width="6.06" height="5.96" fill="#a9c1ff"/><rect x="516.96" y="1219.64" width="6.06" height="5.96" fill="#acc2ff"/><rect x="522.42" y="1219.64" width="6.06" height="5.96" fill="#afc2ff"/><rect x="527.88" y="1219.64" width="6.06" height="5.96" fill="#b1c3ff"/><rect x="533.33" y="1219.64" width="6.06" height="5.96" fill="#b4c3ff"/><rect x="538.79" y="1219.64" width="6.06" height="5.96" fill="#b7c4ff"/><rect x="544.25" y="1219.64" width="6.06" height="5.96" fill="#b9c5ff"/><rect x="549.71" y="1219.64" width="6.06" height="5.96" fill="#bcc5ff"/><rect x="555.17" y="1219.64" width="6.06" height="5.96" fill="#bfc6ff"/><rect x="560.62" y="1219.64" width="6.06" height="5.96" fill="#c1c6ff"/><rect x="566.08" y="1219.64" width="6.06" height="5.96" fill="#c4c7ff"/><rect x="571.54" y="1219.64" width="6.06" height="5.96" fill="#c7c7ff"/><rect x="577.00" y="1219.64" width="6.06" height="5.96" fill="#c9c8ff"/><rect x="582.46" y="1219.64" width="6.06" height="5.96" fill="#ccc8ff"/><rect x="587.92" y="1219.64" width="6.06" height="5.96" fill="#cfc9ff"/><rect x="593.38" y="1219.64" width="6.06" height="5.96" fill="#d2c9ff"/><rect x="598.83" y="1219.64" width="6.06" height="5.96" fill="#d5c9ff"/><rect x="604.29" y="1219.64" width="6.06" height="5.96" fill="#d8c9ff"/><rect x="609.75" y="1219.64" width="6.06" height="5.96" fill="#dbc9ff"/><rect x="615.21" y="1219.64" width="6.06" height="5.96" fill="#dec9ff"/><rect x="620.67" y="1219.64" width="6.06" height="5.96" fill="#e1c9ff"/><rect x="626.12" y="1219.64" width="6.06" height="5.96" fill="#e4c9ff"/><rect x="631.58" y="1219.64" width="6.06" height="5.96" fill="#e8c9ff"/><rect x="637.04" y="1219.64" width="6.06" height="5.96" fill="#ebc9ff"/><rect x="642.50" y="1219.64" width="6.06" height="5.96" fill="#eec9ff"/><rect x="647.96" y="1219.64" width="6.06" height="5.96" fill="#f1c9ff"/><rect x="653.42" y="1219.64" width="6.06" height="5.96" fill="#f4c9ff"/><rect x="658.88" y="1219.64" width="6.06" height="5.96" fill="#f7c9ff"/><rect x="664.33" y="1219.64" width="6.06" height="5.96" fill="#fac9ff"/><rect x="669.79" y="1219.64" width="6.06" height="5.96" fill="#fdc9ff"/><rect x="675.25" y="1219.64" width="6.06" height="5.96" fill="#ffc8fe"/><rect x="680.71" y="1219.64" width="6.06" height="5.96" fill="#ffc6fb"/><rect x="686.17" y="1219.64" width="6.06" height="5.96" fill="#ffc4f8"/><rect x="691.62" y="1219.64" width="6.06" height="5.96" fill="#ffc2f6"/><rect x="697.08" y="1219.64" width="6.06" height="5.96" fill="#ffbff3"/><rect x="702.54" y="1219.64" width="6.06" height="5.96" fill="#ffbdf1"/><rect x="708.00" y="1219.64" width="6.06" height="5.96" fill="#ffbbee"/><rect x="713.46" y="1219.64" width="6.06" height="5.96" fill="#ffb9ec"/><rect x="718.92" y="1219.64" width="6.06" height="5.96" fill="#ffb7e9"/><rect x="724.38" y="1219.64" width="6.06" height="5.96" fill="#ffb5e6"/><rect x="729.83" y="1219.64" width="6.06" height="5.96" fill="#ffb3e4"/><rect x="735.29" y="1219.64" width="6.06" height="5.96" fill="#ffb1e1"/><rect x="740.75" y="1219.64" width="6.06" height="5.96" fill="#ffaede"/><rect x="746.21" y="1219.64" width="6.06" height="5.96" fill="#ffacdc"/><rect x="751.67" y="1219.64" width="6.06" height="5.96" fill="#ffaad9"/><rect x="757.12" y="1219.64" width="6.06" height="5.96" fill="#ffa8d7"/><rect x="762.58" y="1219.64" width="6.06" height="5.96" fill="#ffa7d5"/><rect x="768.04" y="1219.64" width="6.06" height="5.96" fill="#ffa5d3"/><rect x="773.50" y="1219.64" width="6.06" height="5.96" fill="#ffa3d1"/><rect x="778.96" y="1219.64" width="6.06" height="5.96" fill="#ffa2ce"/><rect x="784.42" y="1219.64" width="6.06" height="5.96" fill="#ffa0cc"/><rect x="789.88" y="1219.64" width="6.06" height="5.96" fill="#ff9fca"/><rect x="795.33" y="1219.64" width="6.06" height="5.96" fill="#ff9dc8"/><rect x="800.79" y="1219.64" width="6.06" height="5.96" fill="#ff9bc6"/><rect x="806.25" y="1219.64" width="6.06" height="5.96" fill="#ff9ac4"/><rect x="811.71" y="1219.64" width="6.06" height="5.96" fill="#ff98c2"/><rect x="817.17" y="1219.64" width="6.06" height="5.96" fill="#ff96bf"/><rect x="822.62" y="1219.64" width="6.06" height="5.96" fill="#ff95bd"/><rect x="828.08" y="1219.64" width="6.06" height="5.96" fill="#ff93bb"/><rect x="833.54" y="1219.64" width="6.06" height="5.96" fill="#ff92b9"/></g>
<rect x="511.5" y="989" width="327.5" height="236" fill="none" stroke="#9a9a9a" stroke-width="2"/>
<line x1="525.0" y1="1225" x2="525.0" y2="1233" stroke="#dedede" stroke-width="2"/>
<text x="525.0" y="1254.5" font-size="20" fill="#e3e3e3" text-anchor="middle" font-weight="400" >0,29</text>
<line x1="590.3" y1="1225" x2="590.3" y2="1233" stroke="#dedede" stroke-width="2"/>
<text x="590.3" y="1254.5" font-size="20" fill="#e3e3e3" text-anchor="middle" font-weight="400" >0,3</text>
<line x1="655.6" y1="1225" x2="655.6" y2="1233" stroke="#dedede" stroke-width="2"/>
<text x="655.6" y="1254.5" font-size="20" fill="#e3e3e3" text-anchor="middle" font-weight="400" >0,31</text>
<line x1="720.9" y1="1225" x2="720.9" y2="1233" stroke="#dedede" stroke-width="2"/>
<text x="720.9" y="1254.5" font-size="20" fill="#e3e3e3" text-anchor="middle" font-weight="400" >0,32</text>
<line x1="786.2" y1="1225" x2="786.2" y2="1233" stroke="#dedede" stroke-width="2"/>
<text x="786.2" y="1254.5" font-size="20" fill="#e3e3e3" text-anchor="middle" font-weight="400" >0,33</text>
<line x1="504" y1="1195.7" x2="510.5" y2="1195.7" stroke="#dedede" stroke-width="2"/>
<text x="502.0" y="1204.5" font-size="20" fill="#e3e3e3" text-anchor="end" font-weight="400" stroke="#e3e3e3" stroke-width="0.25" >0,31</text>
<line x1="504" y1="1148.3" x2="510.5" y2="1148.3" stroke="#dedede" stroke-width="2"/>
<text x="502.0" y="1157.1" font-size="20" fill="#e3e3e3" text-anchor="end" font-weight="400" stroke="#e3e3e3" stroke-width="0.25" >0,32</text>
<line x1="504" y1="1100.9" x2="510.5" y2="1100.9" stroke="#dedede" stroke-width="2"/>
<text x="502.0" y="1109.7" font-size="20" fill="#e3e3e3" text-anchor="end" font-weight="400" stroke="#e3e3e3" stroke-width="0.25" >0,33</text>
<line x1="504" y1="1053.4" x2="510.5" y2="1053.4" stroke="#dedede" stroke-width="2"/>
<text x="502.0" y="1062.2" font-size="20" fill="#e3e3e3" text-anchor="end" font-weight="400" stroke="#e3e3e3" stroke-width="0.25" >0,34</text>
<line x1="504" y1="1006.0" x2="510.5" y2="1006.0" stroke="#dedede" stroke-width="2"/>
<text x="502.0" y="1014.8" font-size="20" fill="#e3e3e3" text-anchor="end" font-weight="400" stroke="#e3e3e3" stroke-width="0.25" >0,35</text>
<polyline points="553.0,1223.9 562.8,1216.7 572.6,1209.4 582.4,1202.3 592.2,1195.1 602.1,1188.0 611.9,1180.9 621.7,1173.9 631.5,1166.9 641.3,1159.9 651.1,1152.9 660.9,1146.0 670.7,1139.2 680.5,1132.3 690.3,1125.5 700.2,1118.8 710.0,1112.1 719.8,1105.4 729.6,1098.7 739.4,1092.1 749.2,1085.5 759.0,1079.0 768.8,1072.5 778.6,1066.0 788.4,1059.5 798.3,1053.1 808.1,1046.8 817.9,1040.4 827.7,1034.1 837.5,1027.9" fill="none" stroke="#000" stroke-width="3.2" stroke-linejoin="round"/>
<rect x="665.2" y="1097.4" width="17.5" height="18" fill="#fff" stroke="#000" stroke-width="2.4"/>
<circle cx="627.5" cy="1132.4" r="6.2" fill="#1e1e1e"/>
<circle cx="636.3" cy="1111.3" r="6.2" fill="#8c8c8c" stroke="#2a2a2a" stroke-width="1.6"/>
<circle cx="632.8" cy="1113.2" r="6.2" fill="#bdbdbd" stroke="#2a2a2a" stroke-width="1.6"/>
<circle cx="629.7" cy="1115" r="6.6" fill="#ffffff" stroke="#222" stroke-width="2.6"/>
<rect x="861" y="956" width="1321.5" height="289" fill="#111111"/>
<rect x="863" y="958" width="1317.5" height="20" fill="#2e2e2e"/>
<rect x="863" y="977" width="1317.5" height="19" fill="#161616"/>
<text x="1122.5" y="984.3" font-size="18.5" fill="#ffffff" text-anchor="middle" font-weight="400" stroke="#ffffff" stroke-width="0.3" >0</text>
<text x="1223.2" y="984.3" font-size="18.5" fill="#ffffff" text-anchor="middle" font-weight="400" stroke="#ffffff" stroke-width="0.3" >10</text>
<text x="1323.8" y="984.3" font-size="18.5" fill="#ffffff" text-anchor="middle" font-weight="400" stroke="#ffffff" stroke-width="0.3" >20</text>
<text x="1424.5" y="984.3" font-size="18.5" fill="#ffffff" text-anchor="middle" font-weight="400" stroke="#ffffff" stroke-width="0.3" >30</text>
<text x="1525.1" y="984.3" font-size="18.5" fill="#ffffff" text-anchor="middle" font-weight="400" stroke="#ffffff" stroke-width="0.3" >40</text>
<text x="1625.8" y="984.3" font-size="18.5" fill="#ffffff" text-anchor="middle" font-weight="400" stroke="#ffffff" stroke-width="0.3" >50</text>
<text x="1726.4" y="984.3" font-size="18.5" fill="#ffffff" text-anchor="middle" font-weight="400" stroke="#ffffff" stroke-width="0.3" >60</text>
<text x="1827.1" y="984.3" font-size="18.5" fill="#ffffff" text-anchor="middle" font-weight="400" stroke="#ffffff" stroke-width="0.3" >70</text>
<text x="1927.7" y="984.3" font-size="18.5" fill="#ffffff" text-anchor="middle" font-weight="400" stroke="#ffffff" stroke-width="0.3" >80</text>
<text x="2028.3" y="984.3" font-size="18.5" fill="#ffffff" text-anchor="middle" font-weight="400" stroke="#ffffff" stroke-width="0.3" >90</text>
<text x="2129.0" y="984.3" font-size="18.5" fill="#ffffff" text-anchor="middle" font-weight="400" stroke="#ffffff" stroke-width="0.3" >100</text>
<rect x="863" y="996.0" width="1317.5" height="35.6" fill="#404040"/>
<text x="880.5" y="1022.2" font-size="21.5" fill="#f2f2f2" text-anchor="start" font-weight="700" textLength="81.5" lengthAdjust="spacingAndGlyphs">x: CIE31</text>
<text transform="translate(1078.50 1022.20) scale(1 1.13)" x="0" y="0" font-size="21" fill="#f0f0f0" text-anchor="start" font-weight="400" stroke="#f0f0f0" stroke-width="0.3" >0,311</text>
<text transform="translate(1179.15 1022.20) scale(1 1.13)" x="0" y="0" font-size="21" fill="#f0f0f0" text-anchor="start" font-weight="400" stroke="#f0f0f0" stroke-width="0.3" >0,306</text>
<text transform="translate(1279.80 1022.20) scale(1 1.13)" x="0" y="0" font-size="21" fill="#f0f0f0" text-anchor="start" font-weight="400" stroke="#f0f0f0" stroke-width="0.3" >0,306</text>
<text transform="translate(1380.45 1022.20) scale(1 1.13)" x="0" y="0" font-size="21" fill="#f0f0f0" text-anchor="start" font-weight="400" stroke="#f0f0f0" stroke-width="0.3" >0,307</text>
<text transform="translate(1481.10 1022.20) scale(1 1.13)" x="0" y="0" font-size="21" fill="#f0f0f0" text-anchor="start" font-weight="400" stroke="#f0f0f0" stroke-width="0.3" >0,307</text>
<text transform="translate(1581.75 1022.20) scale(1 1.13)" x="0" y="0" font-size="21" fill="#f0f0f0" text-anchor="start" font-weight="400" stroke="#f0f0f0" stroke-width="0.3" >0,307</text>
<text transform="translate(1682.40 1022.20) scale(1 1.13)" x="0" y="0" font-size="21" fill="#f0f0f0" text-anchor="start" font-weight="400" stroke="#f0f0f0" stroke-width="0.3" >0,306</text>
<text transform="translate(1783.05 1022.20) scale(1 1.13)" x="0" y="0" font-size="21" fill="#f0f0f0" text-anchor="start" font-weight="400" stroke="#f0f0f0" stroke-width="0.3" >0,306</text>
<text transform="translate(1883.70 1022.20) scale(1 1.13)" x="0" y="0" font-size="21" fill="#f0f0f0" text-anchor="start" font-weight="400" stroke="#f0f0f0" stroke-width="0.3" >0,306</text>
<text transform="translate(1984.35 1022.20) scale(1 1.13)" x="0" y="0" font-size="21" fill="#f0f0f0" text-anchor="start" font-weight="400" stroke="#f0f0f0" stroke-width="0.3" >0,306</text>
<text transform="translate(2085.00 1022.20) scale(1 1.13)" x="0" y="0" font-size="21" fill="#f0f0f0" text-anchor="start" font-weight="400" stroke="#f0f0f0" stroke-width="0.3" >0,306</text>
<rect x="863" y="1031.5" width="1317.5" height="35.6" fill="#808080"/>
<text x="880.5" y="1057.7" font-size="21.5" fill="#f2f2f2" text-anchor="start" font-weight="700" textLength="81.5" lengthAdjust="spacingAndGlyphs">y: CIE31</text>
<text transform="translate(1078.50 1057.70) scale(1 1.13)" x="0" y="0" font-size="21" fill="#f0f0f0" text-anchor="start" font-weight="400" stroke="#f0f0f0" stroke-width="0.3" >0,281</text>
<text transform="translate(1179.15 1057.70) scale(1 1.13)" x="0" y="0" font-size="21" fill="#f0f0f0" text-anchor="start" font-weight="400" stroke="#f0f0f0" stroke-width="0.3" >0,323</text>
<text transform="translate(1279.80 1057.70) scale(1 1.13)" x="0" y="0" font-size="21" fill="#f0f0f0" text-anchor="start" font-weight="400" stroke="#f0f0f0" stroke-width="0.3" >0,327</text>
<text transform="translate(1380.45 1057.70) scale(1 1.13)" x="0" y="0" font-size="21" fill="#f0f0f0" text-anchor="start" font-weight="400" stroke="#f0f0f0" stroke-width="0.3" >0,327</text>
<text transform="translate(1481.10 1057.70) scale(1 1.13)" x="0" y="0" font-size="21" fill="#f0f0f0" text-anchor="start" font-weight="400" stroke="#f0f0f0" stroke-width="0.3" >0,328</text>
<text transform="translate(1581.75 1057.70) scale(1 1.13)" x="0" y="0" font-size="21" fill="#f0f0f0" text-anchor="start" font-weight="400" stroke="#f0f0f0" stroke-width="0.3" >0,328</text>
<text transform="translate(1682.40 1057.70) scale(1 1.13)" x="0" y="0" font-size="21" fill="#f0f0f0" text-anchor="start" font-weight="400" stroke="#f0f0f0" stroke-width="0.3" >0,327</text>
<text transform="translate(1783.05 1057.70) scale(1 1.13)" x="0" y="0" font-size="21" fill="#f0f0f0" text-anchor="start" font-weight="400" stroke="#f0f0f0" stroke-width="0.3" >0,327</text>
<text transform="translate(1883.70 1057.70) scale(1 1.13)" x="0" y="0" font-size="21" fill="#f0f0f0" text-anchor="start" font-weight="400" stroke="#f0f0f0" stroke-width="0.3" >0,327</text>
<text transform="translate(1984.35 1057.70) scale(1 1.13)" x="0" y="0" font-size="21" fill="#f0f0f0" text-anchor="start" font-weight="400" stroke="#f0f0f0" stroke-width="0.3" >0,326</text>
<text transform="translate(2085.00 1057.70) scale(1 1.13)" x="0" y="0" font-size="21" fill="#f0f0f0" text-anchor="start" font-weight="400" stroke="#f0f0f0" stroke-width="0.3" >0,327</text>
<rect x="863" y="1067.0" width="1317.5" height="35.6" fill="#404040"/>
<text x="880.5" y="1093.2" font-size="21.5" fill="#f2f2f2" text-anchor="start" font-weight="700" textLength="14" lengthAdjust="spacingAndGlyphs">Y</text>
<text transform="translate(1078.50 1093.20) scale(1 1.13)" x="0" y="0" font-size="21" fill="#f0f0f0" text-anchor="start" font-weight="400" stroke="#f0f0f0" stroke-width="0.3" >0,259</text>
<text transform="translate(1179.15 1093.20) scale(1 1.13)" x="0" y="0" font-size="21" fill="#f0f0f0" text-anchor="start" font-weight="400" stroke="#f0f0f0" stroke-width="0.3" >3,729</text>
<text transform="translate(1279.80 1093.20) scale(1 1.13)" x="0" y="0" font-size="21" fill="#f0f0f0" text-anchor="start" font-weight="400" stroke="#f0f0f0" stroke-width="0.3" >16,597</text>
<text transform="translate(1380.45 1093.20) scale(1 1.13)" x="0" y="0" font-size="21" fill="#f0f0f0" text-anchor="start" font-weight="400" stroke="#f0f0f0" stroke-width="0.3" >41,099</text>
<text transform="translate(1481.10 1093.20) scale(1 1.13)" x="0" y="0" font-size="21" fill="#f0f0f0" text-anchor="start" font-weight="400" stroke="#f0f0f0" stroke-width="0.3" >76,722</text>
<text transform="translate(1581.75 1093.20) scale(1 1.13)" x="0" y="0" font-size="21" fill="#f0f0f0" text-anchor="start" font-weight="400" stroke="#f0f0f0" stroke-width="0.3" >125,174</text>
<text transform="translate(1682.40 1093.20) scale(1 1.13)" x="0" y="0" font-size="21" fill="#f0f0f0" text-anchor="start" font-weight="400" stroke="#f0f0f0" stroke-width="0.3" >191,212</text>
<text transform="translate(1783.05 1093.20) scale(1 1.13)" x="0" y="0" font-size="21" fill="#f0f0f0" text-anchor="start" font-weight="400" stroke="#f0f0f0" stroke-width="0.3" >270,927</text>
<text transform="translate(1883.70 1093.20) scale(1 1.13)" x="0" y="0" font-size="21" fill="#f0f0f0" text-anchor="start" font-weight="400" stroke="#f0f0f0" stroke-width="0.3" >370,477</text>
<text transform="translate(1984.35 1093.20) scale(1 1.13)" x="0" y="0" font-size="21" fill="#f0f0f0" text-anchor="start" font-weight="400" stroke="#f0f0f0" stroke-width="0.3" >484,929</text>
<text transform="translate(2085.00 1093.20) scale(1 1.13)" x="0" y="0" font-size="21" fill="#f0f0f0" text-anchor="start" font-weight="400" stroke="#f0f0f0" stroke-width="0.3" >618,087</text>
<rect x="863" y="1102.5" width="1317.5" height="35.6" fill="#808080"/>
<text x="880.5" y="1128.7" font-size="21.5" fill="#f2f2f2" text-anchor="start" font-weight="700" textLength="86" lengthAdjust="spacingAndGlyphs">Target Y</text>
<text transform="translate(1078.50 1128.70) scale(1 1.13)" x="0" y="0" font-size="21" fill="#f0f0f0" text-anchor="start" font-weight="400" stroke="#f0f0f0" stroke-width="0.3" >0,000</text>
<text transform="translate(1179.15 1128.70) scale(1 1.13)" x="0" y="0" font-size="21" fill="#f0f0f0" text-anchor="start" font-weight="400" stroke="#f0f0f0" stroke-width="0.3" >6,385</text>
<text transform="translate(1279.80 1128.70) scale(1 1.13)" x="0" y="0" font-size="21" fill="#f0f0f0" text-anchor="start" font-weight="400" stroke="#f0f0f0" stroke-width="0.3" >20,462</text>
<text transform="translate(1380.45 1128.70) scale(1 1.13)" x="0" y="0" font-size="21" fill="#f0f0f0" text-anchor="start" font-weight="400" stroke="#f0f0f0" stroke-width="0.3" >44,670</text>
<text transform="translate(1481.10 1128.70) scale(1 1.13)" x="0" y="0" font-size="21" fill="#f0f0f0" text-anchor="start" font-weight="400" stroke="#f0f0f0" stroke-width="0.3" >82,124</text>
<text transform="translate(1581.75 1128.70) scale(1 1.13)" x="0" y="0" font-size="21" fill="#f0f0f0" text-anchor="start" font-weight="400" stroke="#f0f0f0" stroke-width="0.3" >133,421</text>
<text transform="translate(1682.40 1128.70) scale(1 1.13)" x="0" y="0" font-size="21" fill="#f0f0f0" text-anchor="start" font-weight="400" stroke="#f0f0f0" stroke-width="0.3" >196,890</text>
<text transform="translate(1783.05 1128.70) scale(1 1.13)" x="0" y="0" font-size="21" fill="#f0f0f0" text-anchor="start" font-weight="400" stroke="#f0f0f0" stroke-width="0.3" >275,173</text>
<text transform="translate(1883.70 1128.70) scale(1 1.13)" x="0" y="0" font-size="21" fill="#f0f0f0" text-anchor="start" font-weight="400" stroke="#f0f0f0" stroke-width="0.3" >373,218</text>
<text transform="translate(1984.35 1128.70) scale(1 1.13)" x="0" y="0" font-size="21" fill="#f0f0f0" text-anchor="start" font-weight="400" stroke="#f0f0f0" stroke-width="0.3" >489,091</text>
<text transform="translate(2085.00 1128.70) scale(1 1.13)" x="0" y="0" font-size="21" fill="#f0f0f0" text-anchor="start" font-weight="400" stroke="#f0f0f0" stroke-width="0.3" >618,087</text>
<rect x="863" y="1138.0" width="1317.5" height="35.6" fill="#404040"/>
<text x="880.5" y="1164.2" font-size="21.5" fill="#f2f2f2" text-anchor="start" font-weight="700" textLength="174.5" lengthAdjust="spacingAndGlyphs">Gamma Log/Log</text>
<text transform="translate(1078.50 1164.20) scale(1 1.13)" x="0" y="0" font-size="21" fill="#f0f0f0" text-anchor="start" font-weight="400" stroke="#f0f0f0" stroke-width="0.3" >1,278</text>
<text transform="translate(1179.15 1164.20) scale(1 1.13)" x="0" y="0" font-size="21" fill="#f0f0f0" text-anchor="start" font-weight="400" stroke="#f0f0f0" stroke-width="0.3" >2,238</text>
<text transform="translate(1279.80 1164.20) scale(1 1.13)" x="0" y="0" font-size="21" fill="#f0f0f0" text-anchor="start" font-weight="400" stroke="#f0f0f0" stroke-width="0.3" >2,248</text>
<text transform="translate(1380.45 1164.20) scale(1 1.13)" x="0" y="0" font-size="21" fill="#f0f0f0" text-anchor="start" font-weight="400" stroke="#f0f0f0" stroke-width="0.3" >2,239</text>
<text transform="translate(1481.10 1164.20) scale(1 1.13)" x="0" y="0" font-size="21" fill="#f0f0f0" text-anchor="start" font-weight="400" stroke="#f0f0f0" stroke-width="0.3" >2,277</text>
<text transform="translate(1581.75 1164.20) scale(1 1.13)" x="0" y="0" font-size="21" fill="#f0f0f0" text-anchor="start" font-weight="400" stroke="#f0f0f0" stroke-width="0.3" >2,317</text>
<text transform="translate(1682.40 1164.20) scale(1 1.13)" x="0" y="0" font-size="21" fill="#f0f0f0" text-anchor="start" font-weight="400" stroke="#f0f0f0" stroke-width="0.3" >2,297</text>
<text transform="translate(1783.05 1164.20) scale(1 1.13)" x="0" y="0" font-size="21" fill="#f0f0f0" text-anchor="start" font-weight="400" stroke="#f0f0f0" stroke-width="0.3" >2,294</text>
<text transform="translate(1883.70 1164.20) scale(1 1.13)" x="0" y="0" font-size="21" fill="#f0f0f0" text-anchor="start" font-weight="400" stroke="#f0f0f0" stroke-width="0.3" >2,294</text>
<text transform="translate(1984.35 1164.20) scale(1 1.13)" x="0" y="0" font-size="21" fill="#f0f0f0" text-anchor="start" font-weight="400" stroke="#f0f0f0" stroke-width="0.3" >2,351</text>
<text transform="translate(2085.00 1164.20) scale(1 1.13)" x="0" y="0" font-size="21" fill="#f0f0f0" text-anchor="start" font-weight="400" stroke="#f0f0f0" stroke-width="0.3" >2,275</text>
<rect x="863" y="1173.5" width="1317.5" height="35.6" fill="#808080"/>
<text x="880.5" y="1199.7" font-size="21.5" fill="#f2f2f2" text-anchor="start" font-weight="700" textLength="40" lengthAdjust="spacingAndGlyphs">CCT</text>
<text transform="translate(1078.50 1199.70) scale(1 1.13)" x="0" y="0" font-size="21" fill="#f0f0f0" text-anchor="start" font-weight="400" stroke="#f0f0f0" stroke-width="0.3" >7243,000</text>
<text transform="translate(1179.15 1199.70) scale(1 1.13)" x="0" y="0" font-size="21" fill="#f0f0f0" text-anchor="start" font-weight="400" stroke="#f0f0f0" stroke-width="0.3" >6956,000</text>
<text transform="translate(1279.80 1199.70) scale(1 1.13)" x="0" y="0" font-size="21" fill="#f0f0f0" text-anchor="start" font-weight="400" stroke="#f0f0f0" stroke-width="0.3" >6916,000</text>
<text transform="translate(1380.45 1199.70) scale(1 1.13)" x="0" y="0" font-size="21" fill="#f0f0f0" text-anchor="start" font-weight="400" stroke="#f0f0f0" stroke-width="0.3" >6865,000</text>
<text transform="translate(1481.10 1199.70) scale(1 1.13)" x="0" y="0" font-size="21" fill="#f0f0f0" text-anchor="start" font-weight="400" stroke="#f0f0f0" stroke-width="0.3" >6855,000</text>
<text transform="translate(1581.75 1199.70) scale(1 1.13)" x="0" y="0" font-size="21" fill="#f0f0f0" text-anchor="start" font-weight="400" stroke="#f0f0f0" stroke-width="0.3" >6840,000</text>
<text transform="translate(1682.40 1199.70) scale(1 1.13)" x="0" y="0" font-size="21" fill="#f0f0f0" text-anchor="start" font-weight="400" stroke="#f0f0f0" stroke-width="0.3" >6913,000</text>
<text transform="translate(1783.05 1199.70) scale(1 1.13)" x="0" y="0" font-size="21" fill="#f0f0f0" text-anchor="start" font-weight="400" stroke="#f0f0f0" stroke-width="0.3" >6915,000</text>
<text transform="translate(1883.70 1199.70) scale(1 1.13)" x="0" y="0" font-size="21" fill="#f0f0f0" text-anchor="start" font-weight="400" stroke="#f0f0f0" stroke-width="0.3" >6910,000</text>
<text transform="translate(1984.35 1199.70) scale(1 1.13)" x="0" y="0" font-size="21" fill="#f0f0f0" text-anchor="start" font-weight="400" stroke="#f0f0f0" stroke-width="0.3" >6904,000</text>
<text transform="translate(2085.00 1199.70) scale(1 1.13)" x="0" y="0" font-size="21" fill="#f0f0f0" text-anchor="start" font-weight="400" stroke="#f0f0f0" stroke-width="0.3" >6899,000</text>
<rect x="863" y="1209.0" width="1317.5" height="35.6" fill="#404040"/>
<text x="880.5" y="1235.2" font-size="21.5" fill="#f2f2f2" text-anchor="start" font-weight="700" textLength="85" lengthAdjust="spacingAndGlyphs">ΔE 2000</text>
<text transform="translate(1078.50 1235.20) scale(1 1.13)" x="0" y="0" font-size="21" fill="#f0f0f0" text-anchor="start" font-weight="400" stroke="#f0f0f0" stroke-width="0.3" >0,500</text>
<text transform="translate(1179.15 1235.20) scale(1 1.13)" x="0" y="0" font-size="21" fill="#f0f0f0" text-anchor="start" font-weight="400" stroke="#f0f0f0" stroke-width="0.3" >2,390</text>
<text transform="translate(1279.80 1235.20) scale(1 1.13)" x="0" y="0" font-size="21" fill="#f0f0f0" text-anchor="start" font-weight="400" stroke="#f0f0f0" stroke-width="0.3" >2,244</text>
<text transform="translate(1380.45 1235.20) scale(1 1.13)" x="0" y="0" font-size="21" fill="#f0f0f0" text-anchor="start" font-weight="400" stroke="#f0f0f0" stroke-width="0.3" >1,803</text>
<text transform="translate(1481.10 1235.20) scale(1 1.13)" x="0" y="0" font-size="21" fill="#f0f0f0" text-anchor="start" font-weight="400" stroke="#f0f0f0" stroke-width="0.3" >2,387</text>
<text transform="translate(1581.75 1235.20) scale(1 1.13)" x="0" y="0" font-size="21" fill="#f0f0f0" text-anchor="start" font-weight="400" stroke="#f0f0f0" stroke-width="0.3" >2,613</text>
<text transform="translate(1682.40 1235.20) scale(1 1.13)" x="0" y="0" font-size="21" fill="#f0f0f0" text-anchor="start" font-weight="400" stroke="#f0f0f0" stroke-width="0.3" >2,986</text>
<text transform="translate(1783.05 1235.20) scale(1 1.13)" x="0" y="0" font-size="21" fill="#f0f0f0" text-anchor="start" font-weight="400" stroke="#f0f0f0" stroke-width="0.3" >3,105</text>
<text transform="translate(1883.70 1235.20) scale(1 1.13)" x="0" y="0" font-size="21" fill="#f0f0f0" text-anchor="start" font-weight="400" stroke="#f0f0f0" stroke-width="0.3" >3,343</text>
<text transform="translate(1984.35 1235.20) scale(1 1.13)" x="0" y="0" font-size="21" fill="#f0f0f0" text-anchor="start" font-weight="400" stroke="#f0f0f0" stroke-width="0.3" >3,434</text>
<text transform="translate(2085.00 1235.20) scale(1 1.13)" x="0" y="0" font-size="21" fill="#f0f0f0" text-anchor="start" font-weight="400" stroke="#f0f0f0" stroke-width="0.3" >3,929</text>
<rect x="0" y="1329" width="2293" height="63" fill="url(#gStrip)"/>
<rect x="2" y="1329" width="150" height="61" rx="5" fill="url(#gPB)"/>
<rect x="6" y="1368.5" width="142" height="20.5" rx="2" fill="url(#gPBL)"/>
<rect x="7" y="1334" width="140" height="34.6" rx="4" fill="rgb(0,0,0)"/>
<text x="77.0" y="1385.0" font-size="11.5" fill="#2e2e2e" text-anchor="middle" font-weight="700" >0</text>
<rect x="154" y="1329" width="150" height="61" rx="5" fill="url(#gPB)"/>
<rect x="158" y="1368.5" width="142" height="20.5" rx="2" fill="url(#gPBL)"/>
<rect x="159" y="1334" width="140" height="34.6" rx="4" fill="rgb(26,26,26)"/>
<text x="229.0" y="1385.0" font-size="11.5" fill="#2e2e2e" text-anchor="middle" font-weight="700" >10</text>
<rect x="306" y="1329" width="150" height="61" rx="5" fill="url(#gPB)"/>
<rect x="310" y="1368.5" width="142" height="20.5" rx="2" fill="url(#gPBL)"/>
<rect x="311" y="1334" width="140" height="34.6" rx="4" fill="rgb(51,51,51)"/>
<text x="381.0" y="1385.0" font-size="11.5" fill="#2e2e2e" text-anchor="middle" font-weight="700" >20</text>
<rect x="458" y="1329" width="150" height="61" rx="5" fill="url(#gPB)"/>
<rect x="462" y="1368.5" width="142" height="20.5" rx="2" fill="url(#gPBL)"/>
<rect x="463" y="1334" width="140" height="34.6" rx="4" fill="rgb(76,76,76)"/>
<text x="533.0" y="1385.0" font-size="11.5" fill="#2e2e2e" text-anchor="middle" font-weight="700" >30</text>
<rect x="610" y="1329" width="150" height="61" rx="5" fill="url(#gPB)"/>
<rect x="614" y="1368.5" width="142" height="20.5" rx="2" fill="url(#gPBL)"/>
<rect x="615" y="1334" width="140" height="34.6" rx="4" fill="rgb(102,102,102)"/>
<text x="685.0" y="1385.0" font-size="11.5" fill="#2e2e2e" text-anchor="middle" font-weight="700" >40</text>
<rect x="762" y="1329" width="150" height="61" rx="5" fill="url(#gPB)"/>
<rect x="766" y="1368.5" width="142" height="20.5" rx="2" fill="url(#gPBL)"/>
<rect x="767" y="1334" width="140" height="34.6" rx="4" fill="rgb(128,128,128)"/>
<text x="837.0" y="1385.0" font-size="11.5" fill="#2e2e2e" text-anchor="middle" font-weight="700" >50</text>
<rect x="914" y="1329" width="150" height="61" rx="5" fill="url(#gPB)"/>
<rect x="918" y="1368.5" width="142" height="20.5" rx="2" fill="url(#gPBL)"/>
<rect x="919" y="1334" width="140" height="34.6" rx="4" fill="rgb(153,153,153)"/>
<text x="989.0" y="1385.0" font-size="11.5" fill="#2e2e2e" text-anchor="middle" font-weight="700" >60</text>
<rect x="1066" y="1329" width="150" height="61" rx="5" fill="url(#gPB)"/>
<rect x="1070" y="1368.5" width="142" height="20.5" rx="2" fill="url(#gPBL)"/>
<rect x="1071" y="1334" width="140" height="34.6" rx="4" fill="rgb(178,178,178)"/>
<text x="1141.0" y="1385.0" font-size="11.5" fill="#2e2e2e" text-anchor="middle" font-weight="700" >70</text>
<rect x="1218" y="1329" width="150" height="61" rx="5" fill="url(#gPB)"/>
<rect x="1222" y="1368.5" width="142" height="20.5" rx="2" fill="url(#gPBL)"/>
<rect x="1223" y="1334" width="140" height="34.6" rx="4" fill="rgb(204,204,204)"/>
<text x="1293.0" y="1385.0" font-size="11.5" fill="#2e2e2e" text-anchor="middle" font-weight="700" >80</text>
<rect x="1370" y="1329" width="150" height="61" rx="5" fill="url(#gPB)"/>
<rect x="1374" y="1368.5" width="142" height="20.5" rx="2" fill="url(#gPBL)"/>
<rect x="1375" y="1334" width="140" height="34.6" rx="4" fill="rgb(230,230,230)"/>
<text x="1445.0" y="1385.0" font-size="11.5" fill="#2e2e2e" text-anchor="middle" font-weight="700" >90</text>
<rect x="1522" y="1329" width="150" height="61" rx="5" fill="url(#gPBsel)"/>
<rect x="1527" y="1334" width="140" height="36" rx="4" fill="rgb(255,255,255)"/>
<text x="1597.0" y="1385.0" font-size="11.5" fill="#ffffff" text-anchor="middle" font-weight="700" >100</text>
<rect x="0" y="1390.5" width="2293" height="1.5" fill="#7c7c7c"/>
<rect x="1968.5" y="1329" width="48.5" height="61" rx="4" fill="url(#gCtl)"/>
<line x1="1969" y1="1347.5" x2="2017" y2="1347.5" stroke="#555" stroke-width="1"/>
<circle cx="1993.4" cy="1338" r="7" fill="url(#gCirc)"/><path d="M1989 1340 L1997.5 1340 L1993.3 1335.5 Z" fill="#222"/>
<rect x="1977.5" y="1354" width="30.5" height="30" rx="3" fill="#c8c8c8" stroke="#222" stroke-width="2"/>
<rect x="1986" y="1362" width="14" height="13.5" fill="#000"/>
<rect x="2018" y="1329" width="226" height="30.5" fill="url(#gCtl)"/>
<line x1="2064.3" y1="1329" x2="2064.3" y2="1359.5" stroke="#3a3a3a" stroke-width="1"/>
<line x1="2109.3" y1="1329" x2="2109.3" y2="1359.5" stroke="#3a3a3a" stroke-width="1"/>
<line x1="2154.6" y1="1329" x2="2154.6" y2="1359.5" stroke="#3a3a3a" stroke-width="1"/>
<line x1="2199.3" y1="1329" x2="2199.3" y2="1359.5" stroke="#3a3a3a" stroke-width="1"/>
<circle cx="2040.6" cy="1344" r="9.5" fill="url(#gCirc)"/>
<circle cx="2086.3" cy="1344" r="9.5" fill="url(#gCirc)"/>
<circle cx="2131.4" cy="1344" r="9.5" fill="url(#gCirc)"/>
<circle cx="2176.4" cy="1344" r="9.5" fill="url(#gCirc)"/>
<circle cx="2221.4" cy="1344" r="9.5" fill="url(#gCirc)"/>
<rect x="2036.5" y="1340" width="8" height="8" fill="#222"/>
<path d="M2083 1338.5 L2091 1344 L2083 1349.5 Z" fill="#222"/>
<text x="2131.4" y="1348.5" font-size="11" fill="#222" text-anchor="middle" font-weight="700" >[··]</text>
<path d="M2171 1344 C2171 1340 2176.4 1340 2176.4 1344 C2176.4 1348 2181.8 1348 2181.8 1344 C2181.8 1340 2176.4 1340 2176.4 1344 C2176.4 1348 2171 1348 2171 1344 Z" fill="none" stroke="#222" stroke-width="2"/>
<path d="M2216.5 1343 A5 5 0 0 1 2225.5 1341 M2226.3 1345 A5 5 0 0 1 2217.3 1347" fill="none" stroke="#222" stroke-width="2"/>
<rect x="2244" y="1329" width="45" height="30.5" fill="#262626"/>
<circle cx="2267" cy="1344" r="10" fill="#2e2e2e"/>
<rect x="2018" y="1360" width="271" height="30" rx="3" fill="url(#gCtl)"/>
<line x1="2154.5" y1="1360" x2="2154.5" y2="1390" stroke="#3a3a3a" stroke-width="1"/>
<circle cx="2048.6" cy="1375.2" r="9.5" fill="url(#gCirc)"/>
<circle cx="2262" cy="1375.2" r="9.5" fill="url(#gCirc)"/>
<text x="2048.6" y="1380.0" font-size="15" fill="#222" text-anchor="middle" font-weight="400" >«</text>
<text x="2262.0" y="1380.0" font-size="15" fill="#222" text-anchor="middle" font-weight="400" >»</text>
<text x="2075.5" y="1383.2" font-size="22.3" fill="#2e2e2e" text-anchor="start" font-weight="400" stroke="#2e2e2e" stroke-width="0.5" >Back</text>
<text x="2182.5" y="1383.2" font-size="24.3" fill="#2e2e2e" text-anchor="start" font-weight="400" stroke="#2e2e2e" stroke-width="0.5" >Next</text>
<rect x="0" y="0" width="1.5" height="1392" fill="#5a5a5a"/>
<rect x="2287" y="96" width="4.5" height="1233" fill="url(#gRF)"/>
<rect x="2291.5" y="0" width="1.5" height="1392" fill="#6e6e6e"/></svg></body></html>
